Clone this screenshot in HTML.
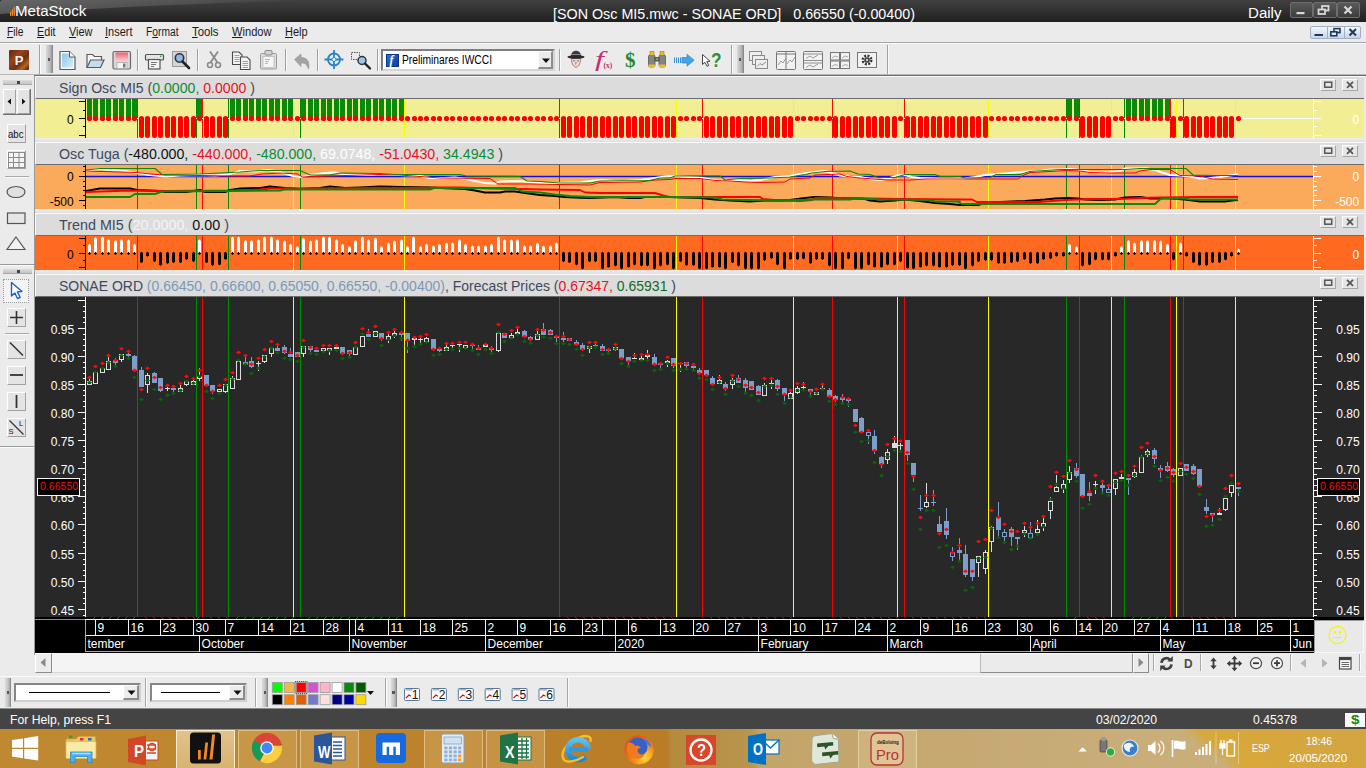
<!DOCTYPE html>
<html lang="en"><head><meta charset="utf-8"><title>MetaStock - SON Osc MI5.mwc - SONAE ORD</title>
<style>
html,body{margin:0;padding:0;}
body{width:1366px;height:768px;overflow:hidden;background:#ebebeb;position:relative;font-family:"Liberation Sans",sans-serif;}
.b{position:absolute;display:block;box-sizing:border-box;}
.t{position:absolute;white-space:pre;transform-origin:0 50%;}
svg{overflow:visible;}
</style></head><body>
<div class="b" style="left:0px;top:0px;width:1366px;height:22px;background:linear-gradient(180deg,#404040 0%,#343434 40%,#272727 75%,#202020 100%);"></div>
<svg class="b" style="left:0px;top:0px" width="320" height="22" viewBox="0 0 320 22" >
<defs><linearGradient id="ggl" x1="0" y1="0" x2="1" y2="0"><stop offset="0" stop-color="#fff" stop-opacity=".2"/><stop offset=".6" stop-color="#fff" stop-opacity=".11"/><stop offset="1" stop-color="#fff" stop-opacity="0"/></linearGradient></defs>
<path d="M0 0 H310 C 200 3.500, 90 8.500, 0 14 Z" fill="url(#ggl)"/>
<path d="M0 0 h2.500 a2.500 2.500 0 0 0 -2.500 2.500 z" fill="#222"/>
</svg>
<svg class="b" style="left:9px;top:8px" width="7" height="9" viewBox="0 0 7 9" >
<rect x="1.100" y="4.200" width="1.100" height="3.600" fill="#f4a424"/><rect x="2.700" y="1.500" width="1.300" height="6.300" fill="#f08820"/><rect x="4.500" y="-1" width="1.500" height="8.800" fill="#f07420"/>
</svg>
<span class="t" id="t1" style="left:15.40px;top:2.86px;font-size:15.40px;line-height:15.40px;color:#fff;transform:scaleX(0.9805);">MetaStock</span>
<span class="t" id="t2" style="left:553.00px;top:5.78px;font-size:15.50px;line-height:15.50px;color:#fff;transform:scaleX(0.9236);">[SON Osc MI5.mwc - SONAE ORD]   0.66550 (-0.00400)</span>
<span class="t" id="t3" style="left:1247.50px;top:5.48px;font-size:15.50px;line-height:15.50px;color:#fff;transform:scaleX(0.9723);">Daily</span>
<div class="b" style="left:1289.5px;top:2px;width:23.5px;height:15.5px;background:linear-gradient(180deg,#5a5a5a,#3c3c3c);border:1px solid #6e6e6e;border-radius:2px;"></div>
<div class="b" style="left:1313px;top:2px;width:23.5px;height:15.5px;background:linear-gradient(180deg,#5a5a5a,#3c3c3c);border:1px solid #6e6e6e;border-radius:2px;"></div>
<div class="b" style="left:1336.5px;top:2px;width:23.5px;height:15.5px;background:linear-gradient(180deg,#5a5a5a,#3c3c3c);border:1px solid #6e6e6e;border-radius:2px;"></div>
<svg class="b" style="left:1289px;top:2px" width="72" height="16" viewBox="0 0 72 16" >
<rect x="7.5" y="10" width="8" height="2.2" fill="#d8d8d8"/>
<g fill="none" stroke="#d8d8d8" stroke-width="1.8"><rect x="33" y="4" width="6.5" height="4.5"/><rect x="29.5" y="7.5" width="6.5" height="4.5" fill="#444"/></g>
<path d="M55.5 4.5 L62.5 11.5 M62.5 4.5 L55.5 11.5" stroke="#d8d8d8" stroke-width="2.2" fill="none"/>
</svg>
<div class="b" style="left:0px;top:22px;width:1366px;height:21px;background:#ebebeb;border-bottom:1px solid #a6a6a6;"></div>
<span class="t" id="t4" style="left:7.00px;top:26.02px;font-size:12.50px;line-height:12.50px;color:#1a1a1a;transform:scaleX(0.8186);"><u>F</u>ile</span>
<span class="t" id="t5" style="left:37.00px;top:26.02px;font-size:12.50px;line-height:12.50px;color:#1a1a1a;transform:scaleX(0.8586);"><u>E</u>dit</span>
<span class="t" id="t6" style="left:69.00px;top:26.02px;font-size:12.50px;line-height:12.50px;color:#1a1a1a;transform:scaleX(0.8739);"><u>V</u>iew</span>
<span class="t" id="t7" style="left:105.00px;top:26.02px;font-size:12.50px;line-height:12.50px;color:#1a1a1a;transform:scaleX(0.8791);"><u>I</u>nsert</span>
<span class="t" id="t8" style="left:146.00px;top:26.02px;font-size:12.50px;line-height:12.50px;color:#1a1a1a;transform:scaleX(0.8208);">F<u>o</u>rmat</span>
<span class="t" id="t9" style="left:192.00px;top:26.02px;font-size:12.50px;line-height:12.50px;color:#1a1a1a;transform:scaleX(0.9079);"><u>T</u>ools</span>
<span class="t" id="t10" style="left:232.00px;top:26.02px;font-size:12.50px;line-height:12.50px;color:#1a1a1a;transform:scaleX(0.8880);"><u>W</u>indow</span>
<span class="t" id="t11" style="left:285.00px;top:26.02px;font-size:12.50px;line-height:12.50px;color:#1a1a1a;transform:scaleX(0.8748);"><u>H</u>elp</span>
<div class="b" style="left:1310px;top:26px;width:51px;height:12.5px;background:linear-gradient(180deg,#f4f7fa,#c9d6e4);border:1px solid #9fb0c4;border-radius:2px;"></div>
<div class="b" style="left:1327px;top:27px;width:1px;height:10.5px;background:#9fb0c4;"></div>
<div class="b" style="left:1344px;top:27px;width:1px;height:10.5px;background:#9fb0c4;"></div>
<svg class="b" style="left:1310px;top:26px" width="51" height="13" viewBox="0 0 51 13" >
<rect x="4.5" y="8" width="8.5" height="2" fill="#1e3a5f"/>
<g fill="none" stroke="#1e3a5f" stroke-width="1.6"><rect x="24" y="2.6" width="6" height="4"/><rect x="20.8" y="5.8" width="6" height="4" fill="#dde6f0"/></g>
<path d="M39.5 3 L46 9.5 M46 3 L39.5 9.5" stroke="#1e3a5f" stroke-width="2" fill="none"/>
</svg>
<div class="b" style="left:0px;top:43px;width:1366px;height:32px;background:#ebebeb;border-top:1px solid #fafafa;border-bottom:1px solid #b8b8b8;"></div>
<div class="b" style="left:137px;top:49px;width:1px;height:21.5px;background:#a0a0a0;"></div>
<div class="b" style="left:138px;top:49px;width:1px;height:21.5px;background:#fbfbfb;"></div>
<div class="b" style="left:197px;top:49px;width:1px;height:21.5px;background:#a0a0a0;"></div>
<div class="b" style="left:198px;top:49px;width:1px;height:21.5px;background:#fbfbfb;"></div>
<div class="b" style="left:285px;top:49px;width:1px;height:21.5px;background:#a0a0a0;"></div>
<div class="b" style="left:286px;top:49px;width:1px;height:21.5px;background:#fbfbfb;"></div>
<div class="b" style="left:317px;top:49px;width:1px;height:21.5px;background:#a0a0a0;"></div>
<div class="b" style="left:318px;top:49px;width:1px;height:21.5px;background:#fbfbfb;"></div>
<div class="b" style="left:377px;top:49px;width:1px;height:21.5px;background:#a0a0a0;"></div>
<div class="b" style="left:378px;top:49px;width:1px;height:21.5px;background:#fbfbfb;"></div>
<div class="b" style="left:559px;top:49px;width:1px;height:21.5px;background:#a0a0a0;"></div>
<div class="b" style="left:560px;top:49px;width:1px;height:21.5px;background:#fbfbfb;"></div>
<div class="b" style="left:39px;top:44.5px;width:1px;height:29px;background:#a0a0a0;"></div>
<div class="b" style="left:40px;top:44.5px;width:1px;height:29px;background:#fbfbfb;"></div>
<div class="b" style="left:731px;top:44.5px;width:1px;height:29px;background:#a0a0a0;"></div>
<div class="b" style="left:732px;top:44.5px;width:1px;height:29px;background:#fbfbfb;"></div>
<div class="b" style="left:887px;top:44.5px;width:1px;height:29px;background:#a0a0a0;"></div>
<div class="b" style="left:888px;top:44.5px;width:1px;height:29px;background:#fbfbfb;"></div>
<div class="b" style="left:46px;top:45px;width:6.5px;height:28px;background:linear-gradient(90deg,#d9d9d9,#bdbdbd 60%,#9a9a9a);border-right:1px solid #8a8a8a;"></div>
<div class="b" style="left:47.5px;top:58px;width:2.5px;height:3px;background:#555;"></div>
<div class="b" style="left:737px;top:45px;width:6.5px;height:28px;background:linear-gradient(90deg,#d9d9d9,#bdbdbd 60%,#9a9a9a);border-right:1px solid #8a8a8a;"></div>
<div class="b" style="left:738.5px;top:58px;width:2.5px;height:3px;background:#555;"></div>
<div class="b" style="left:9px;top:50px;width:20px;height:20px;background:linear-gradient(135deg,#5a2a14 0%,#9a4418 35%,#6a3014 60%,#b8641c 80%,#3a1c0e 100%);border-radius:1px;"></div>
<span class="t" id="t12" style="left:14.80px;top:54.00px;font-size:13.00px;line-height:13.00px;color:#f4f4f4;font-weight:bold;">P</span>
<svg class="b" style="left:0px;top:43px" width="900" height="32" viewBox="0 0 900 32" >
<defs><linearGradient id="gdoc" x1="0" y1="0" x2="1" y2="1"><stop offset="0" stop-color="#8cc8e8"/><stop offset="1" stop-color="#d4ecf8"/></linearGradient><linearGradient id="gsv" x1="0" y1="0" x2="0" y2="1"><stop offset="0" stop-color="#f0606c"/><stop offset="1" stop-color="#fcd0d4"/></linearGradient></defs>
<path d="M60 8.500 h9.500 l5.500 5.500 v12.500 h-15 z" fill="#fafafa" stroke="#5a5a5a" stroke-width="1.200"/><path d="M62 10.500 h7 l4 4 v10 h-11 z" fill="url(#gdoc)"/><path d="M69.500 8.500 v5.500 h5.500" fill="#fff" stroke="#5a5a5a" stroke-width="1"/>
<path d="M87 24.500 v-13 h5.500 l2 2 h7 v3.500" fill="#f6f6f6" stroke="#5a5a5a" stroke-width="1.200"/><path d="M87 24.500 l3.500 -7.500 h13.500 l-3.500 7.500 z" fill="#c4dcf0" stroke="#5a5a5a" stroke-width="1.200"/>
<rect x="113" y="8.500" width="17.500" height="17.500" rx="1.500" fill="#d8d8d8" stroke="#6a6a6a" stroke-width="1.200"/><rect x="115.500" y="9.500" width="12.500" height="8.500" fill="url(#gsv)"/><rect x="117" y="19.5" width="10" height="6" fill="#f4f4f4" stroke="#999" stroke-width=".6"/><rect x="123" y="20.5" width="2.5" height="4" fill="#777"/>
<rect x="145.500" y="11.500" width="18" height="5.500" rx="1" fill="#e4e4e4" stroke="#555" stroke-width="1.200"/><rect x="148.500" y="16.500" width="11.500" height="9.500" fill="#eef6ee" stroke="#555" stroke-width="1.200"/><path d="M151 19.500h6M151 21.500h5M151 23.500h3" stroke="#556" stroke-width=".8"/><rect x="160" y="12.500" width="1.500" height="1.500" fill="#4a4"/>
<rect x="172.500" y="8.500" width="14" height="15" fill="#d4d4d4" stroke="#9a9a9a"/><circle cx="179.5" cy="15" r="4.2" fill="#8fb7e8" stroke="#333" stroke-width="1.6"/><path d="M182.5 18.5 l6.500 6.500" stroke="#222" stroke-width="2.6" stroke-linecap="round"/>
<path d="M210 8.5 l7.5 11 M218 8.5 l-7.5 11" stroke="#8a8a8a" stroke-width="1.8" fill="none"/><circle cx="210" cy="22" r="2.5" fill="none" stroke="#8a8a8a" stroke-width="1.5"/><circle cx="218" cy="22" r="2.500" fill="none" stroke="#8a8a8a" stroke-width="1.5"/>
<path d="M232.500 9 h6.500 l3 3 v9.500 h-9.500 z" fill="#f4f4f4" stroke="#4a4a4a" stroke-width="1.100"/><path d="M234.500 12.500h5M234.500 14.500h5M234.500 16.500h5M234.500 18.500h5" stroke="#888" stroke-width=".8"/><path d="M240.500 14 h6.500 l3 3 v9.500 h-9.500 z" fill="#f4f4f4" stroke="#4a4a4a" stroke-width="1.100"/><path d="M242.500 18.500h5.500M242.500 20.500h5.500M242.500 22.500h5.500M242.500 24.500h5.500" stroke="#888" stroke-width=".8"/>
<rect x="260.500" y="10.500" width="16" height="15.500" rx="1" fill="#dcdcdc" stroke="#9a9a9a"/><rect x="265" y="7.500" width="7" height="4.500" rx="1" fill="#d4d4d4" stroke="#8a8a8a"/><rect x="263" y="13.500" width="11" height="11" fill="#f6f6f6" stroke="#b4b4b4" stroke-width=".7"/><path d="M265 16.500h5M265 18.500h4M265 20.500h3" stroke="#aaa" stroke-width=".8"/>
<path d="M294.500 16.500 l6.500 -5.500 v3.500 c6.500 0 9 4.500 7.500 11.500 c-1.500 -5 -3.800 -6 -7.500 -6 v3.500 z" fill="#a4a4a4" stroke="#909090" stroke-width=".6"/>
<circle cx="334" cy="16.500" r="6" fill="#eaf3fb" stroke="#2b82c9" stroke-width="1.800"/><path d="M334 7 v19 M324.500 16.500 h19" stroke="#2b82c9" stroke-width="1.800"/><circle cx="334" cy="16.500" r="2" fill="#fff" stroke="#2b82c9"/>
<rect x="351.500" y="9.500" width="8" height="7" fill="none" stroke="#555" stroke-dasharray="1.500 1"/><circle cx="362" cy="17.500" r="4" fill="#9cc4ef" stroke="#333" stroke-width="1.500"/><path d="M365 20.500 l5 5" stroke="#222" stroke-width="2.400" stroke-linecap="round"/>
<path d="M571.500 15.500 c0 11.500 9 11.500 9 0 z" fill="#f6d8c8" stroke="#7a5a50" stroke-width=".7"/><path d="M570.800 13.800 c0 -8 10.400 -8 10.400 0 z" fill="#3a3a3a"/><path d="M570.800 11.500 h10.400" stroke="#888" stroke-width="1"/><ellipse cx="576" cy="14" rx="8.600" ry="1.700" fill="#2a2a2a"/><circle cx="574" cy="17.800" r=".8" fill="#3a6ac0"/><circle cx="578" cy="17.800" r=".8" fill="#3a6ac0"/><path d="M576 18.500 v2.500 h-1" stroke="#7a5a50" stroke-width=".6" fill="none"/>
<rect x="648.500" y="12" width="6.500" height="12" rx="1.500" fill="#848484" stroke="#4a4a4a" stroke-width=".7"/><rect x="659" y="12" width="6.500" height="12" rx="1.500" fill="#848484" stroke="#4a4a4a" stroke-width=".7"/><rect x="650" y="8.500" width="4" height="4" fill="#e8c020" stroke="#8a7010" stroke-width=".5"/><rect x="660" y="8.500" width="4" height="4" fill="#e8c020" stroke="#8a7010" stroke-width=".5"/><rect x="654.500" y="14" width="5" height="4.500" fill="#5a5a5a"/><rect x="656" y="15.500" width="2" height="1.200" fill="#e8c020"/><rect x="648.500" y="21.500" width="6.500" height="2.500" fill="#e8c020"/><rect x="659" y="21.500" width="6.500" height="2.500" fill="#e8c020"/>
<path d="M674 14.500 h1 v5.500 h-1z M676 14.500 h1 v5.500 h-1z M678 14.500 h1 v5.500 h-1z M680 14.500 h1.200 v5.500 h-1.200z" fill="#3b8fd6"/><path d="M682 14.500 h5 v-3.300 l7.200 6 l-7.200 6 v-3.200 h-5 z" fill="#45a4e8" stroke="#2a80c4" stroke-width=".6"/>
<path d="M702.500 11.500 l0 10 l2.500 -2.200 l2 4 l1.800 -.8 l-2 -4 l3.200 -.3 z" fill="#fff" stroke="#333" stroke-width=".9"/>
<g fill="#eee" stroke="#8a8a8a"><rect x="749.500" y="8.500" width="12" height="9"/><rect x="752.500" y="12.500" width="12" height="9"/><rect x="755.500" y="16.500" width="12" height="9"/></g><path d="M757 23.500 l3 -3 l2 1.500 l4 -3" stroke="#777" fill="none" stroke-width=".8"/>
<rect x="776.500" y="8.500" width="19" height="18" rx="1" fill="#f2f2f2" stroke="#777"/><path d="M786 8.500 v18 M776.500 11 h19" stroke="#777"/><path d="M778 22 l3 -4 l2 2 l3 -5 M787 21 l3 -4 l2 2 l3 -5" stroke="#888" fill="none" stroke-width=".8"/>
<rect x="803.500" y="8.500" width="19" height="18" rx="1" fill="#f2f2f2" stroke="#777"/><path d="M803.500 17.500 h19 M803.500 11 h19 M803.500 20 h19" stroke="#777" stroke-width=".8"/><path d="M806 15.500 l4 -2.500 l3 2 l5 -3 M806 24.500 l4 -2.500 l3 2 l5 -3" stroke="#888" fill="none" stroke-width=".8"/>
<g fill="#f2f2f2" stroke="#777"><rect x="830.500" y="9.500" width="9" height="7.500"/><rect x="840.500" y="9.500" width="9" height="7.500"/><rect x="830.500" y="18" width="9" height="7.500"/><rect x="840.500" y="18" width="9" height="7.500"/></g><path d="M832 15 l3 -2 l3 1 M842 15 l3 -2 l3 1 M832 23.500 l3 -2 l3 1 M842 23.500 l3 -2 l3 1" stroke="#888" fill="none" stroke-width=".7"/>
<rect x="857.500" y="9.500" width="19" height="15" fill="#f2f2f2" stroke="#777"/><circle cx="867" cy="17" r="4.200" fill="none" stroke="#333" stroke-width="2.600" stroke-dasharray="1.900 1.400"/><circle cx="867" cy="17" r="2.800" fill="#444"/><circle cx="867" cy="17" r="1.100" fill="#f2f2f2"/>
</svg>
<span class="t" id="t13" style="left:594.50px;top:48.57px;font-size:20.00px;line-height:20.00px;color:#c8306e;font-family:'Liberation Serif', serif;transform:scaleX(1.6180);font-style:italic;">f</span>
<span class="t" id="t14" style="left:603.50px;top:61.95px;font-size:7.50px;line-height:7.50px;color:#c8286c;font-weight:bold;font-family:'Liberation Serif', serif;">(x)</span>
<span class="t" id="t15" style="left:624.50px;top:50.07px;font-size:20.00px;line-height:20.00px;color:#1f8a2a;font-weight:bold;font-family:'Liberation Serif', serif;transform:scaleX(1.0500);">$</span>
<span class="t" id="t16" style="left:710.60px;top:49.95px;font-size:20.50px;line-height:20.50px;color:#2f8f2f;font-weight:bold;transform:scaleX(0.8379);">?</span>
<div class="b" style="left:381px;top:49px;width:174px;height:21.5px;background:#fff;border:2px solid #7e7e7e;border-right-color:#d4d4d4;border-bottom-color:#d4d4d4;"></div>
<div class="b" style="left:385.5px;top:53.5px;width:13.5px;height:13.5px;background:linear-gradient(135deg,#2a70e0,#0c3ca0);border:1px solid #0c3488;"></div>
<span class="t" id="t17" style="left:389.50px;top:54.34px;font-size:12.00px;line-height:12.00px;color:#fff;font-weight:bold;font-family:'Liberation Serif', serif;font-style:italic;">f</span>
<span class="t" id="t18" style="left:402.00px;top:53.72px;font-size:12.50px;line-height:12.50px;color:#000;transform:scaleX(0.8200);">Preliminares IWCCI</span>
<div class="b" style="left:537.5px;top:51px;width:15.5px;height:17.5px;background:#ececec;border:1px solid #fdfdfd;border-right:2px solid #8c8c8c;border-bottom:2px solid #8c8c8c;"></div>
<svg class="b" style="left:538px;top:51px" width="16" height="18" viewBox="0 0 16 18" >
<path d="M4 7.500 h8 l-4 4.500 z" fill="#111"/>
</svg>
<div class="b" style="left:0px;top:75px;width:34.5px;height:580px;background:#ebebeb;border-right:1px solid #9a9a9a;"></div>
<div class="b" style="left:0px;top:655px;width:34.5px;height:20px;background:#ebebeb;"></div>
<div class="b" style="left:3px;top:80px;width:29px;height:5px;background:linear-gradient(180deg,#dcdcdc,#c4c4c4);border-bottom:1px solid #a8a8a8;"></div>
<div class="b" style="left:17px;top:81px;width:2.5px;height:2.5px;background:#444;"></div>
<div class="b" style="left:2.5px;top:88.5px;width:13.5px;height:25.5px;background:#e4e4e4;border:1px solid #fff;border-right-color:#a0a0a0;border-bottom-color:#a0a0a0;"></div>
<div class="b" style="left:16.5px;top:88.5px;width:13.5px;height:25.5px;background:#e4e4e4;border:1px solid #fff;border-right-color:#a0a0a0;border-bottom-color:#a0a0a0;"></div>
<div class="b" style="left:2.5px;top:113.5px;width:28px;height:1px;background:#707070;"></div>
<div class="b" style="left:30px;top:88.5px;width:1px;height:25.5px;background:#707070;"></div>
<div class="b" style="left:6.5px;top:124px;width:19.5px;height:19px;background:#e4e4e4;border:1px solid #fff;border-right-color:#a0a0a0;border-bottom-color:#a0a0a0;"></div>
<div class="b" style="left:6.5px;top:150px;width:19.5px;height:19px;background:#e4e4e4;border:1px solid #fff;border-right-color:#a0a0a0;border-bottom-color:#a0a0a0;"></div>
<div class="b" style="left:5px;top:175.5px;width:24px;height:1px;background:#a8a8a8;"></div>
<div class="b" style="left:5px;top:176.5px;width:24px;height:1px;background:#fbfbfb;"></div>
<div class="b" style="left:0px;top:263.5px;width:34px;height:1px;background:#9a9a9a;"></div>
<div class="b" style="left:0px;top:264.5px;width:34px;height:1px;background:#fafafa;"></div>
<div class="b" style="left:3px;top:269px;width:29px;height:5px;background:linear-gradient(180deg,#dcdcdc,#c4c4c4);border-bottom:1px solid #a8a8a8;"></div>
<div class="b" style="left:17px;top:270px;width:2.5px;height:2.5px;background:#444;"></div>
<div class="b" style="left:3px;top:278.5px;width:26px;height:24px;background:#f4f4f4;border:1px dotted #9a9a9a;"></div>
<div class="b" style="left:6.5px;top:307.5px;width:19.5px;height:19px;background:#e4e4e4;border:1px solid #fff;border-right-color:#a0a0a0;border-bottom-color:#a0a0a0;"></div>
<div class="b" style="left:5px;top:332.5px;width:24px;height:1px;background:#a8a8a8;"></div>
<div class="b" style="left:5px;top:333.5px;width:24px;height:1px;background:#fbfbfb;"></div>
<div class="b" style="left:6.5px;top:339.5px;width:19.5px;height:19px;background:#e4e4e4;border:1px solid #fff;border-right-color:#a0a0a0;border-bottom-color:#a0a0a0;"></div>
<div class="b" style="left:6.5px;top:365.5px;width:19.5px;height:19px;background:#e4e4e4;border:1px solid #fff;border-right-color:#a0a0a0;border-bottom-color:#a0a0a0;"></div>
<div class="b" style="left:6.5px;top:391.5px;width:19.5px;height:19px;background:#e4e4e4;border:1px solid #fff;border-right-color:#a0a0a0;border-bottom-color:#a0a0a0;"></div>
<div class="b" style="left:6.5px;top:417.5px;width:19.5px;height:19px;background:#e4e4e4;border:1px solid #fff;border-right-color:#a0a0a0;border-bottom-color:#a0a0a0;"></div>
<div class="b" style="left:0px;top:446px;width:34px;height:1px;background:#9a9a9a;"></div>
<div class="b" style="left:0px;top:447px;width:34px;height:1px;background:#fafafa;"></div>
<span class="t" id="t19" style="left:8.30px;top:128.99px;font-size:11.00px;line-height:11.00px;color:#111;transform:scaleX(0.8732);">abc</span>
<span class="t" id="t20" style="left:8.50px;top:427.65px;font-size:7.50px;line-height:7.50px;color:#111;">S</span>
<span class="t" id="t21" style="left:19.00px;top:420.15px;font-size:7.50px;line-height:7.50px;color:#111;">L</span>
<svg class="b" style="left:0px;top:75px" width="35" height="380" viewBox="0 0 35 380" >
<path d="M11 23.500 l-3.500 3 l3.500 3 z M22 23.500 l3.500 3 l-3.500 3 z" fill="#111"/>
<g stroke="#8a8a8a" stroke-width="1" fill="none"><rect x="8.500" y="77.500" width="16" height="15" fill="#f4f4f4"/><path d="M13.500 77.500 v15 M19 77.500 v15 M8.500 82.500 h16 M8.500 87.500 h16"/></g>
<ellipse cx="16" cy="117" rx="9" ry="5.500" fill="#e0e0e0" stroke="#555" stroke-width="1.200"/>
<rect x="7.500" y="138" width="17.500" height="10.500" fill="#e6e6e6" stroke="#555" stroke-width="1.200"/>
<path d="M16 162 l9 12.500 h-18 z" fill="#f2f2f2" stroke="#555" stroke-width="1.200"/>
<path d="M11.500 207.500 l0 13.500 l3.300 -3 l2.700 5.500 l2.600 -1.200 l-2.700 -5.400 l4.600 -.4 z" fill="#fff" stroke="#1c5fc4" stroke-width="1.400" stroke-linejoin="round"/>
<path d="M16.500 236 v13 M10 242.500 h13" stroke="#333" stroke-width="1.600"/>
<path d="M10 267.500 l13 13" stroke="#333" stroke-width="1.500"/>
<path d="M10 300 h13" stroke="#333" stroke-width="1.800"/>
<path d="M16.500 320 v13" stroke="#333" stroke-width="1.800"/>
<path d="M9.500 345.500 l14 14" stroke="#333" stroke-width="1.300"/>
</svg>
<div class="b" style="left:35px;top:75px;width:1331px;height:580px;background:#e6e6e6;"></div>
<div class="b" style="left:34px;top:75px;width:1332px;height:1px;background:#6c6c6c;"></div>
<div class="b" style="left:35px;top:138px;width:1329px;height:4px;background:linear-gradient(180deg,#eeeeee,#dfdfdf);"></div>
<div class="b" style="left:35px;top:209px;width:1329px;height:4px;background:linear-gradient(180deg,#eeeeee,#dfdfdf);"></div>
<div class="b" style="left:35px;top:270px;width:1329px;height:4px;background:linear-gradient(180deg,#eeeeee,#dfdfdf);"></div>
<div class="b" style="left:1364px;top:76px;width:2px;height:580px;background:#ebebeb;"></div>
<div class="b" style="left:35px;top:76px;width:1329px;height:23px;background:#dcdcdc;border-top:1px solid #fafafa;border-left:1px solid #fafafa;border-bottom:1px solid #6c6c6c;"></div>
<div class="b" style="left:1319.5px;top:79px;width:16.5px;height:12px;background:#e6e6e6;border:1px solid #fdfdfd;border-right-color:#a6a6a6;border-bottom-color:#a6a6a6;"></div>
<div class="b" style="left:1341.5px;top:79px;width:16.5px;height:12px;background:#e6e6e6;border:1px solid #fdfdfd;border-right-color:#a6a6a6;border-bottom-color:#a6a6a6;"></div>
<svg class="b" style="left:1319.5px;top:79px" width="40" height="12" viewBox="0 0 40 12" >
<rect x="4.7" y="3.2" width="7" height="5" fill="none" stroke="#555" stroke-width="1.5"/>
<path d="M27 2.800 l6 6 M33 2.800 l-6 6" stroke="#555" stroke-width="1.700"/>
</svg>
<div class="b" style="left:35px;top:142px;width:1329px;height:23px;background:#dcdcdc;border-top:1px solid #fafafa;border-left:1px solid #fafafa;border-bottom:1px solid #6c6c6c;"></div>
<div class="b" style="left:1319.5px;top:145px;width:16.5px;height:12px;background:#e6e6e6;border:1px solid #fdfdfd;border-right-color:#a6a6a6;border-bottom-color:#a6a6a6;"></div>
<div class="b" style="left:1341.5px;top:145px;width:16.5px;height:12px;background:#e6e6e6;border:1px solid #fdfdfd;border-right-color:#a6a6a6;border-bottom-color:#a6a6a6;"></div>
<svg class="b" style="left:1319.5px;top:145px" width="40" height="12" viewBox="0 0 40 12" >
<rect x="4.7" y="3.2" width="7" height="5" fill="none" stroke="#555" stroke-width="1.5"/>
<path d="M27 2.800 l6 6 M33 2.800 l-6 6" stroke="#555" stroke-width="1.700"/>
</svg>
<div class="b" style="left:35px;top:213px;width:1329px;height:23px;background:#dcdcdc;border-top:1px solid #fafafa;border-left:1px solid #fafafa;border-bottom:1px solid #6c6c6c;"></div>
<div class="b" style="left:1319.5px;top:216px;width:16.5px;height:12px;background:#e6e6e6;border:1px solid #fdfdfd;border-right-color:#a6a6a6;border-bottom-color:#a6a6a6;"></div>
<div class="b" style="left:1341.5px;top:216px;width:16.5px;height:12px;background:#e6e6e6;border:1px solid #fdfdfd;border-right-color:#a6a6a6;border-bottom-color:#a6a6a6;"></div>
<svg class="b" style="left:1319.5px;top:216px" width="40" height="12" viewBox="0 0 40 12" >
<rect x="4.7" y="3.2" width="7" height="5" fill="none" stroke="#555" stroke-width="1.5"/>
<path d="M27 2.800 l6 6 M33 2.800 l-6 6" stroke="#555" stroke-width="1.700"/>
</svg>
<div class="b" style="left:35px;top:274px;width:1329px;height:23px;background:#dcdcdc;border-top:1px solid #fafafa;border-left:1px solid #fafafa;border-bottom:1px solid #6c6c6c;"></div>
<div class="b" style="left:1319.5px;top:277px;width:16.5px;height:12px;background:#e6e6e6;border:1px solid #fdfdfd;border-right-color:#a6a6a6;border-bottom-color:#a6a6a6;"></div>
<div class="b" style="left:1341.5px;top:277px;width:16.5px;height:12px;background:#e6e6e6;border:1px solid #fdfdfd;border-right-color:#a6a6a6;border-bottom-color:#a6a6a6;"></div>
<svg class="b" style="left:1319.5px;top:277px" width="40" height="12" viewBox="0 0 40 12" >
<rect x="4.7" y="3.2" width="7" height="5" fill="none" stroke="#555" stroke-width="1.5"/>
<path d="M27 2.800 l6 6 M33 2.800 l-6 6" stroke="#555" stroke-width="1.700"/>
</svg>
<div class="b" style="left:35px;top:99px;width:1329px;height:39px;background:#f1ee94;"></div>
<div class="b" style="left:35px;top:165px;width:1329px;height:44px;background:#fbaa5c;"></div>
<div class="b" style="left:35px;top:236px;width:1329px;height:34px;background:#ff6a20;"></div>
<div class="b" style="left:35px;top:297px;width:1329px;height:320px;background:#282828;"></div>
<span class="t" id="t22" style="left:59.00px;top:79.75px;font-size:15.30px;line-height:15.30px;color:#3c4a5e;transform:scaleX(0.9219);">Sign Osc MI5 (<span style="color:#0a8c32">0.0000, </span><span style="color:#e8121c">0.0000</span> )</span>
<span class="t" id="t23" style="left:59.00px;top:145.65px;font-size:15.30px;line-height:15.30px;color:#3c4a5e;transform:scaleX(0.9273);">Osc Tuga (<span style="color:#111">-480.000, </span><span style="color:#e8121c">-440.000, </span><span style="color:#0a8c32">-480.000, </span><span style="color:#fff">69.0748, </span><span style="color:#e8121c">-51.0430, </span><span style="color:#0a8c32">34.4943</span> )</span>
<span class="t" id="t24" style="left:59.00px;top:216.75px;font-size:15.30px;line-height:15.30px;color:#3c4a5e;transform:scaleX(0.9370);">Trend MI5 (<span style="color:#f4f4f4">20.0000, </span><span style="color:#111">0.00</span> )</span>
<span class="t" id="t25" style="left:59.00px;top:278.05px;font-size:15.30px;line-height:15.30px;color:#3c4a5e;transform:scaleX(0.9149);">SONAE ORD <span style="color:#7d97b8">(0.66450, 0.66600, 0.65050, 0.66550, -0.00400)</span>, Forecast Prices (<span style="color:#e8121c">0.67347, </span><span style="color:#0f6a1e">0.65931</span> )</span>
<svg class="b" style="left:0px;top:0px" width="1366" height="660" viewBox="0 0 1366 660" shape-rendering="crispEdges">
<line x1="137.5" y1="99.0" x2="137.5" y2="138.0" stroke="#fa0808" stroke-width="1"/>
<line x1="137.5" y1="165.0" x2="137.5" y2="209.0" stroke="#fa0808" stroke-width="1"/>
<line x1="137.5" y1="236.0" x2="137.5" y2="270.0" stroke="#fa0808" stroke-width="1"/>
<line x1="137.5" y1="297.0" x2="137.5" y2="617.0" stroke="#f40404" stroke-width="1"/>
<line x1="196.5" y1="99.0" x2="196.5" y2="138.0" stroke="#008a00" stroke-width="1"/>
<line x1="196.5" y1="165.0" x2="196.5" y2="209.0" stroke="#008a00" stroke-width="1"/>
<line x1="196.5" y1="236.0" x2="196.5" y2="270.0" stroke="#008a00" stroke-width="1"/>
<line x1="196.5" y1="297.0" x2="196.5" y2="617.0" stroke="#008c00" stroke-width="1"/>
<line x1="202.5" y1="99.0" x2="202.5" y2="138.0" stroke="#fa0808" stroke-width="1"/>
<line x1="202.5" y1="165.0" x2="202.5" y2="209.0" stroke="#fa0808" stroke-width="1"/>
<line x1="202.5" y1="236.0" x2="202.5" y2="270.0" stroke="#fa0808" stroke-width="1"/>
<line x1="202.5" y1="297.0" x2="202.5" y2="617.0" stroke="#f40404" stroke-width="1"/>
<line x1="228.5" y1="99.0" x2="228.5" y2="138.0" stroke="#008a00" stroke-width="1"/>
<line x1="228.5" y1="165.0" x2="228.5" y2="209.0" stroke="#008a00" stroke-width="1"/>
<line x1="228.5" y1="236.0" x2="228.5" y2="270.0" stroke="#008a00" stroke-width="1"/>
<line x1="228.5" y1="297.0" x2="228.5" y2="617.0" stroke="#008c00" stroke-width="1"/>
<line x1="293.5" y1="99.0" x2="293.5" y2="138.0" stroke="#fafa00" stroke-width="1"/>
<line x1="293.5" y1="165.0" x2="293.5" y2="209.0" stroke="#fafa00" stroke-width="1"/>
<line x1="293.5" y1="236.0" x2="293.5" y2="270.0" stroke="#fafa00" stroke-width="1"/>
<line x1="293.5" y1="297.0" x2="293.5" y2="617.0" stroke="#fafa00" stroke-width="1"/>
<line x1="300.5" y1="99.0" x2="300.5" y2="138.0" stroke="#008a00" stroke-width="1"/>
<line x1="300.5" y1="165.0" x2="300.5" y2="209.0" stroke="#008a00" stroke-width="1"/>
<line x1="300.5" y1="236.0" x2="300.5" y2="270.0" stroke="#008a00" stroke-width="1"/>
<line x1="300.5" y1="297.0" x2="300.5" y2="617.0" stroke="#008c00" stroke-width="1"/>
<line x1="404.5" y1="99.0" x2="404.5" y2="138.0" stroke="#fafa00" stroke-width="1"/>
<line x1="404.5" y1="165.0" x2="404.5" y2="209.0" stroke="#fafa00" stroke-width="1"/>
<line x1="404.5" y1="236.0" x2="404.5" y2="270.0" stroke="#fafa00" stroke-width="1"/>
<line x1="404.5" y1="297.0" x2="404.5" y2="617.0" stroke="#fafa00" stroke-width="1"/>
<line x1="559.5" y1="99.0" x2="559.5" y2="138.0" stroke="#fa0808" stroke-width="1"/>
<line x1="559.5" y1="165.0" x2="559.5" y2="209.0" stroke="#fa0808" stroke-width="1"/>
<line x1="559.5" y1="236.0" x2="559.5" y2="270.0" stroke="#fa0808" stroke-width="1"/>
<line x1="559.5" y1="297.0" x2="559.5" y2="617.0" stroke="#f40404" stroke-width="1"/>
<line x1="676.5" y1="99.0" x2="676.5" y2="138.0" stroke="#fafa00" stroke-width="1"/>
<line x1="676.5" y1="165.0" x2="676.5" y2="209.0" stroke="#fafa00" stroke-width="1"/>
<line x1="676.5" y1="236.0" x2="676.5" y2="270.0" stroke="#fafa00" stroke-width="1"/>
<line x1="676.5" y1="297.0" x2="676.5" y2="617.0" stroke="#fafa00" stroke-width="1"/>
<line x1="702.5" y1="99.0" x2="702.5" y2="138.0" stroke="#fa0808" stroke-width="1"/>
<line x1="702.5" y1="165.0" x2="702.5" y2="209.0" stroke="#fa0808" stroke-width="1"/>
<line x1="702.5" y1="236.0" x2="702.5" y2="270.0" stroke="#fa0808" stroke-width="1"/>
<line x1="702.5" y1="297.0" x2="702.5" y2="617.0" stroke="#f40404" stroke-width="1"/>
<line x1="793.5" y1="99.0" x2="793.5" y2="138.0" stroke="#fafa00" stroke-width="1"/>
<line x1="793.5" y1="165.0" x2="793.5" y2="209.0" stroke="#fafa00" stroke-width="1"/>
<line x1="793.5" y1="236.0" x2="793.5" y2="270.0" stroke="#fafa00" stroke-width="1"/>
<line x1="793.5" y1="297.0" x2="793.5" y2="617.0" stroke="#fafa00" stroke-width="1"/>
<line x1="832.5" y1="99.0" x2="832.5" y2="138.0" stroke="#fa0808" stroke-width="1"/>
<line x1="832.5" y1="165.0" x2="832.5" y2="209.0" stroke="#fa0808" stroke-width="1"/>
<line x1="832.5" y1="236.0" x2="832.5" y2="270.0" stroke="#fa0808" stroke-width="1"/>
<line x1="832.5" y1="297.0" x2="832.5" y2="617.0" stroke="#f40404" stroke-width="1"/>
<line x1="897.5" y1="99.0" x2="897.5" y2="138.0" stroke="#fafa00" stroke-width="1"/>
<line x1="897.5" y1="165.0" x2="897.5" y2="209.0" stroke="#fafa00" stroke-width="1"/>
<line x1="897.5" y1="236.0" x2="897.5" y2="270.0" stroke="#fafa00" stroke-width="1"/>
<line x1="897.5" y1="297.0" x2="897.5" y2="617.0" stroke="#fafa00" stroke-width="1"/>
<line x1="904.5" y1="99.0" x2="904.5" y2="138.0" stroke="#fa0808" stroke-width="1"/>
<line x1="904.5" y1="165.0" x2="904.5" y2="209.0" stroke="#fa0808" stroke-width="1"/>
<line x1="904.5" y1="236.0" x2="904.5" y2="270.0" stroke="#fa0808" stroke-width="1"/>
<line x1="904.5" y1="297.0" x2="904.5" y2="617.0" stroke="#f40404" stroke-width="1"/>
<line x1="988.5" y1="99.0" x2="988.5" y2="138.0" stroke="#fafa00" stroke-width="1"/>
<line x1="988.5" y1="165.0" x2="988.5" y2="209.0" stroke="#fafa00" stroke-width="1"/>
<line x1="988.5" y1="236.0" x2="988.5" y2="270.0" stroke="#fafa00" stroke-width="1"/>
<line x1="988.5" y1="297.0" x2="988.5" y2="617.0" stroke="#fafa00" stroke-width="1"/>
<line x1="1066.5" y1="99.0" x2="1066.5" y2="138.0" stroke="#008a00" stroke-width="1"/>
<line x1="1066.5" y1="165.0" x2="1066.5" y2="209.0" stroke="#008a00" stroke-width="1"/>
<line x1="1066.5" y1="236.0" x2="1066.5" y2="270.0" stroke="#008a00" stroke-width="1"/>
<line x1="1066.5" y1="297.0" x2="1066.5" y2="617.0" stroke="#008c00" stroke-width="1"/>
<line x1="1079.5" y1="99.0" x2="1079.5" y2="138.0" stroke="#fa0808" stroke-width="1"/>
<line x1="1079.5" y1="165.0" x2="1079.5" y2="209.0" stroke="#fa0808" stroke-width="1"/>
<line x1="1079.5" y1="236.0" x2="1079.5" y2="270.0" stroke="#fa0808" stroke-width="1"/>
<line x1="1079.5" y1="297.0" x2="1079.5" y2="617.0" stroke="#f40404" stroke-width="1"/>
<line x1="1111.5" y1="99.0" x2="1111.5" y2="138.0" stroke="#fafa00" stroke-width="1"/>
<line x1="1111.5" y1="165.0" x2="1111.5" y2="209.0" stroke="#fafa00" stroke-width="1"/>
<line x1="1111.5" y1="236.0" x2="1111.5" y2="270.0" stroke="#fafa00" stroke-width="1"/>
<line x1="1111.5" y1="297.0" x2="1111.5" y2="617.0" stroke="#fafa00" stroke-width="1"/>
<line x1="1124.5" y1="99.0" x2="1124.5" y2="138.0" stroke="#008a00" stroke-width="1"/>
<line x1="1124.5" y1="165.0" x2="1124.5" y2="209.0" stroke="#008a00" stroke-width="1"/>
<line x1="1124.5" y1="236.0" x2="1124.5" y2="270.0" stroke="#008a00" stroke-width="1"/>
<line x1="1124.5" y1="297.0" x2="1124.5" y2="617.0" stroke="#008c00" stroke-width="1"/>
<line x1="1170.5" y1="99.0" x2="1170.5" y2="138.0" stroke="#fa0808" stroke-width="1"/>
<line x1="1170.5" y1="165.0" x2="1170.5" y2="209.0" stroke="#fa0808" stroke-width="1"/>
<line x1="1170.5" y1="236.0" x2="1170.5" y2="270.0" stroke="#fa0808" stroke-width="1"/>
<line x1="1170.5" y1="297.0" x2="1170.5" y2="617.0" stroke="#f40404" stroke-width="1"/>
<line x1="1176.5" y1="99.0" x2="1176.5" y2="138.0" stroke="#fafa00" stroke-width="1"/>
<line x1="1176.5" y1="165.0" x2="1176.5" y2="209.0" stroke="#fafa00" stroke-width="1"/>
<line x1="1176.5" y1="236.0" x2="1176.5" y2="270.0" stroke="#fafa00" stroke-width="1"/>
<line x1="1176.5" y1="297.0" x2="1176.5" y2="617.0" stroke="#fafa00" stroke-width="1"/>
<line x1="1183.5" y1="99.0" x2="1183.5" y2="138.0" stroke="#fa0808" stroke-width="1"/>
<line x1="1183.5" y1="165.0" x2="1183.5" y2="209.0" stroke="#fa0808" stroke-width="1"/>
<line x1="1183.5" y1="236.0" x2="1183.5" y2="270.0" stroke="#fa0808" stroke-width="1"/>
<line x1="1183.5" y1="297.0" x2="1183.5" y2="617.0" stroke="#f40404" stroke-width="1"/>
<line x1="1235.5" y1="99.0" x2="1235.5" y2="138.0" stroke="#fafa00" stroke-width="1"/>
<line x1="1235.5" y1="165.0" x2="1235.5" y2="209.0" stroke="#fafa00" stroke-width="1"/>
<line x1="1235.5" y1="236.0" x2="1235.5" y2="270.0" stroke="#fafa00" stroke-width="1"/>
<line x1="1235.5" y1="297.0" x2="1235.5" y2="617.0" stroke="#fafa00" stroke-width="1"/>
<line x1="85.5" y1="99.0" x2="85.5" y2="138.0" stroke="#000" stroke-width="1"/>
<path d="M85.5 101.5 h-7.0 M85.5 110.5 h-3.0 M85.5 118.5 h-7.0 M85.5 126.5 h-3.0 M85.5 135.5 h-7.0 " stroke="#000" stroke-width="1" fill="none"/>
<line x1="1313.5" y1="99.0" x2="1313.5" y2="138.0" stroke="#fff" stroke-width="1"/>
<path d="M1313.5 101.5 h7.0 M1313.5 110.5 h3.0 M1313.5 118.5 h7.0 M1313.5 126.5 h3.0 M1313.5 135.5 h7.0 " stroke="#fff" stroke-width="1" fill="none"/>
<line x1="85.5" y1="165.0" x2="85.5" y2="209.0" stroke="#000" stroke-width="1"/>
<path d="M85.5 166.5 h-3.0 M85.5 171.5 h-3.0 M85.5 176.5 h-7.0 M85.5 181.5 h-3.0 M85.5 186.5 h-3.0 M85.5 190.5 h-3.0 M85.5 195.5 h-3.0 M85.5 200.5 h-7.0 M85.5 205.5 h-3.0 " stroke="#000" stroke-width="1" fill="none"/>
<line x1="1313.5" y1="165.0" x2="1313.5" y2="209.0" stroke="#fff" stroke-width="1"/>
<path d="M1313.5 166.5 h3.0 M1313.5 171.5 h3.0 M1313.5 176.5 h7.0 M1313.5 181.5 h3.0 M1313.5 186.5 h3.0 M1313.5 190.5 h3.0 M1313.5 195.5 h3.0 M1313.5 200.5 h7.0 M1313.5 205.5 h3.0 " stroke="#fff" stroke-width="1" fill="none"/>
<line x1="85.5" y1="236.0" x2="85.5" y2="270.0" stroke="#000" stroke-width="1"/>
<path d="M85.5 238.5 h-7.0 M85.5 245.5 h-3.0 M85.5 253.5 h-7.0 M85.5 260.5 h-3.0 M85.5 267.5 h-7.0 " stroke="#000" stroke-width="1" fill="none"/>
<line x1="1313.5" y1="236.0" x2="1313.5" y2="270.0" stroke="#fff" stroke-width="1"/>
<path d="M1313.5 238.5 h7.0 M1313.5 245.5 h3.0 M1313.5 253.5 h7.0 M1313.5 260.5 h3.0 M1313.5 267.5 h7.0 " stroke="#fff" stroke-width="1" fill="none"/>
<line x1="85.5" y1="297.0" x2="85.5" y2="617.0" stroke="#fff" stroke-width="1"/>
<path d="M85.5 615.5 h-3.0 M85.5 609.5 h-8.0 M85.5 603.5 h-3.0 M85.5 598.5 h-3.0 M85.5 592.5 h-3.0 M85.5 587.5 h-3.0 M85.5 581.5 h-8.0 M85.5 575.5 h-3.0 M85.5 570.5 h-3.0 M85.5 564.5 h-3.0 M85.5 559.5 h-3.0 M85.5 553.5 h-8.0 M85.5 547.5 h-3.0 M85.5 542.5 h-3.0 M85.5 535.5 h-3.0 M85.5 530.5 h-3.0 M85.5 524.5 h-8.0 M85.5 518.5 h-3.0 M85.5 513.5 h-3.0 M85.5 507.5 h-3.0 M85.5 502.5 h-3.0 M85.5 496.5 h-8.0 M85.5 490.5 h-3.0 M85.5 485.5 h-3.0 M85.5 479.5 h-3.0 M85.5 474.5 h-3.0 M85.5 468.5 h-8.0 M85.5 462.5 h-3.0 M85.5 457.5 h-3.0 M85.5 451.5 h-3.0 M85.5 446.5 h-3.0 M85.5 440.5 h-8.0 M85.5 434.5 h-3.0 M85.5 429.5 h-3.0 M85.5 423.5 h-3.0 M85.5 418.5 h-3.0 M85.5 412.5 h-8.0 M85.5 406.5 h-3.0 M85.5 401.5 h-3.0 M85.5 395.5 h-3.0 M85.5 390.5 h-3.0 M85.5 384.5 h-8.0 M85.5 378.5 h-3.0 M85.5 373.5 h-3.0 M85.5 367.5 h-3.0 M85.5 362.5 h-3.0 M85.5 356.5 h-8.0 M85.5 350.5 h-3.0 M85.5 345.5 h-3.0 M85.5 339.5 h-3.0 M85.5 334.5 h-3.0 M85.5 328.5 h-8.0 M85.5 322.5 h-3.0 M85.5 317.5 h-3.0 M85.5 311.5 h-3.0 M85.5 306.5 h-3.0 M85.5 300.5 h-8.0 " stroke="#fff" stroke-width="1" fill="none"/>
<line x1="1313.5" y1="297.0" x2="1313.5" y2="617.0" stroke="#fff" stroke-width="1"/>
<path d="M1313.5 615.5 h3.0 M1313.5 609.5 h8.0 M1313.5 603.5 h3.0 M1313.5 598.5 h3.0 M1313.5 592.5 h3.0 M1313.5 587.5 h3.0 M1313.5 581.5 h8.0 M1313.5 575.5 h3.0 M1313.5 570.5 h3.0 M1313.5 564.5 h3.0 M1313.5 559.5 h3.0 M1313.5 553.5 h8.0 M1313.5 547.5 h3.0 M1313.5 542.5 h3.0 M1313.5 535.5 h3.0 M1313.5 530.5 h3.0 M1313.5 524.5 h8.0 M1313.5 518.5 h3.0 M1313.5 513.5 h3.0 M1313.5 507.5 h3.0 M1313.5 502.5 h3.0 M1313.5 496.5 h8.0 M1313.5 490.5 h3.0 M1313.5 485.5 h3.0 M1313.5 479.5 h3.0 M1313.5 474.5 h3.0 M1313.5 468.5 h8.0 M1313.5 462.5 h3.0 M1313.5 457.5 h3.0 M1313.5 451.5 h3.0 M1313.5 446.5 h3.0 M1313.5 440.5 h8.0 M1313.5 434.5 h3.0 M1313.5 429.5 h3.0 M1313.5 423.5 h3.0 M1313.5 418.5 h3.0 M1313.5 412.5 h8.0 M1313.5 406.5 h3.0 M1313.5 401.5 h3.0 M1313.5 395.5 h3.0 M1313.5 390.5 h3.0 M1313.5 384.5 h8.0 M1313.5 378.5 h3.0 M1313.5 373.5 h3.0 M1313.5 367.5 h3.0 M1313.5 362.5 h3.0 M1313.5 356.5 h8.0 M1313.5 350.5 h3.0 M1313.5 345.5 h3.0 M1313.5 339.5 h3.0 M1313.5 334.5 h3.0 M1313.5 328.5 h8.0 M1313.5 322.5 h3.0 M1313.5 317.5 h3.0 M1313.5 311.5 h3.0 M1313.5 306.5 h3.0 M1313.5 300.5 h8.0 " stroke="#fff" stroke-width="1" fill="none"/>
<line x1="87" y1="118.5" x2="1313" y2="118.5" stroke="#fff" stroke-width="1"/>
<rect x="87" y="99" width="5" height="19.5" fill="#0a8a0a"/>
<rect x="93" y="99" width="5" height="19.5" fill="#0a8a0a"/>
<rect x="100" y="99" width="5" height="19.5" fill="#0a8a0a"/>
<rect x="106" y="99" width="5" height="19.5" fill="#0a8a0a"/>
<rect x="113" y="99" width="5" height="19.5" fill="#0a8a0a"/>
<rect x="119" y="99" width="5" height="19.5" fill="#0a8a0a"/>
<rect x="126" y="99" width="5" height="19.5" fill="#0a8a0a"/>
<rect x="132" y="99" width="5" height="19.5" fill="#0a8a0a"/>
<rect x="139" y="118.5" width="5" height="17" fill="#ff0000"/>
<rect x="145" y="118.5" width="5" height="17" fill="#ff0000"/>
<rect x="152" y="118.5" width="5" height="17" fill="#ff0000"/>
<rect x="158" y="118.5" width="5" height="17" fill="#ff0000"/>
<rect x="165" y="118.5" width="5" height="17" fill="#ff0000"/>
<rect x="171" y="118.5" width="5" height="17" fill="#ff0000"/>
<rect x="178" y="118.5" width="5" height="17" fill="#ff0000"/>
<rect x="184" y="118.5" width="5" height="17" fill="#ff0000"/>
<rect x="191" y="118.5" width="5" height="17" fill="#ff0000"/>
<rect x="197" y="99" width="5" height="19.5" fill="#0a8a0a"/>
<rect x="204" y="118.5" width="5" height="17" fill="#ff0000"/>
<rect x="210" y="118.5" width="5" height="17" fill="#ff0000"/>
<rect x="217" y="118.5" width="5" height="17" fill="#ff0000"/>
<rect x="223" y="118.5" width="5" height="17" fill="#ff0000"/>
<rect x="230" y="99" width="5" height="19.5" fill="#0a8a0a"/>
<rect x="236" y="99" width="5" height="19.5" fill="#0a8a0a"/>
<rect x="243" y="99" width="5" height="19.5" fill="#0a8a0a"/>
<rect x="249" y="99" width="5" height="19.5" fill="#0a8a0a"/>
<rect x="256" y="99" width="5" height="19.5" fill="#0a8a0a"/>
<rect x="262" y="99" width="5" height="19.5" fill="#0a8a0a"/>
<rect x="269" y="99" width="5" height="19.5" fill="#0a8a0a"/>
<rect x="275" y="99" width="5" height="19.5" fill="#0a8a0a"/>
<rect x="282" y="99" width="5" height="19.5" fill="#0a8a0a"/>
<rect x="288" y="99" width="5" height="19.5" fill="#0a8a0a"/>
<rect x="301" y="99" width="5" height="19.5" fill="#0a8a0a"/>
<rect x="308" y="99" width="5" height="19.5" fill="#0a8a0a"/>
<rect x="314" y="99" width="5" height="19.5" fill="#0a8a0a"/>
<rect x="321" y="99" width="5" height="19.5" fill="#0a8a0a"/>
<rect x="327" y="99" width="5" height="19.5" fill="#0a8a0a"/>
<rect x="334" y="99" width="5" height="19.5" fill="#0a8a0a"/>
<rect x="340" y="99" width="5" height="19.5" fill="#0a8a0a"/>
<rect x="347" y="99" width="5" height="19.5" fill="#0a8a0a"/>
<rect x="353" y="99" width="5" height="19.5" fill="#0a8a0a"/>
<rect x="360" y="99" width="5" height="19.5" fill="#0a8a0a"/>
<rect x="366" y="99" width="5" height="19.5" fill="#0a8a0a"/>
<rect x="373" y="99" width="5" height="19.5" fill="#0a8a0a"/>
<rect x="379" y="99" width="5" height="19.5" fill="#0a8a0a"/>
<rect x="386" y="99" width="5" height="19.5" fill="#0a8a0a"/>
<rect x="392" y="99" width="5" height="19.5" fill="#0a8a0a"/>
<rect x="399" y="99" width="5" height="19.5" fill="#0a8a0a"/>
<rect x="561" y="118.5" width="5" height="17" fill="#ff0000"/>
<rect x="567" y="118.5" width="5" height="17" fill="#ff0000"/>
<rect x="574" y="118.5" width="5" height="17" fill="#ff0000"/>
<rect x="580" y="118.5" width="5" height="17" fill="#ff0000"/>
<rect x="587" y="118.5" width="5" height="17" fill="#ff0000"/>
<rect x="593" y="118.5" width="5" height="17" fill="#ff0000"/>
<rect x="600" y="118.5" width="5" height="17" fill="#ff0000"/>
<rect x="606" y="118.5" width="5" height="17" fill="#ff0000"/>
<rect x="613" y="118.5" width="5" height="17" fill="#ff0000"/>
<rect x="619" y="118.5" width="5" height="17" fill="#ff0000"/>
<rect x="626" y="118.5" width="5" height="17" fill="#ff0000"/>
<rect x="632" y="118.5" width="5" height="17" fill="#ff0000"/>
<rect x="639" y="118.5" width="5" height="17" fill="#ff0000"/>
<rect x="645" y="118.5" width="5" height="17" fill="#ff0000"/>
<rect x="652" y="118.5" width="5" height="17" fill="#ff0000"/>
<rect x="658" y="118.5" width="5" height="17" fill="#ff0000"/>
<rect x="665" y="118.5" width="5" height="17" fill="#ff0000"/>
<rect x="671" y="118.5" width="5" height="17" fill="#ff0000"/>
<rect x="704" y="118.5" width="5" height="17" fill="#ff0000"/>
<rect x="710" y="118.5" width="5" height="17" fill="#ff0000"/>
<rect x="717" y="118.5" width="5" height="17" fill="#ff0000"/>
<rect x="723" y="118.5" width="5" height="17" fill="#ff0000"/>
<rect x="730" y="118.5" width="5" height="17" fill="#ff0000"/>
<rect x="736" y="118.5" width="5" height="17" fill="#ff0000"/>
<rect x="743" y="118.5" width="5" height="17" fill="#ff0000"/>
<rect x="749" y="118.5" width="5" height="17" fill="#ff0000"/>
<rect x="756" y="118.5" width="5" height="17" fill="#ff0000"/>
<rect x="762" y="118.5" width="5" height="17" fill="#ff0000"/>
<rect x="769" y="118.5" width="5" height="17" fill="#ff0000"/>
<rect x="775" y="118.5" width="5" height="17" fill="#ff0000"/>
<rect x="782" y="118.5" width="5" height="17" fill="#ff0000"/>
<rect x="788" y="118.5" width="5" height="17" fill="#ff0000"/>
<rect x="833" y="118.5" width="5" height="17" fill="#ff0000"/>
<rect x="840" y="118.5" width="5" height="17" fill="#ff0000"/>
<rect x="846" y="118.5" width="5" height="17" fill="#ff0000"/>
<rect x="853" y="118.5" width="5" height="17" fill="#ff0000"/>
<rect x="859" y="118.5" width="5" height="17" fill="#ff0000"/>
<rect x="866" y="118.5" width="5" height="17" fill="#ff0000"/>
<rect x="872" y="118.5" width="5" height="17" fill="#ff0000"/>
<rect x="879" y="118.5" width="5" height="17" fill="#ff0000"/>
<rect x="885" y="118.5" width="5" height="17" fill="#ff0000"/>
<rect x="892" y="118.5" width="5" height="17" fill="#ff0000"/>
<rect x="905" y="118.5" width="5" height="17" fill="#ff0000"/>
<rect x="911" y="118.5" width="5" height="17" fill="#ff0000"/>
<rect x="918" y="118.5" width="5" height="17" fill="#ff0000"/>
<rect x="924" y="118.5" width="5" height="17" fill="#ff0000"/>
<rect x="931" y="118.5" width="5" height="17" fill="#ff0000"/>
<rect x="937" y="118.5" width="5" height="17" fill="#ff0000"/>
<rect x="944" y="118.5" width="5" height="17" fill="#ff0000"/>
<rect x="950" y="118.5" width="5" height="17" fill="#ff0000"/>
<rect x="957" y="118.5" width="5" height="17" fill="#ff0000"/>
<rect x="963" y="118.5" width="5" height="17" fill="#ff0000"/>
<rect x="970" y="118.5" width="5" height="17" fill="#ff0000"/>
<rect x="976" y="118.5" width="5" height="17" fill="#ff0000"/>
<rect x="983" y="118.5" width="5" height="17" fill="#ff0000"/>
<rect x="1067" y="99" width="5" height="19.5" fill="#0a8a0a"/>
<rect x="1074" y="99" width="5" height="19.5" fill="#0a8a0a"/>
<rect x="1080" y="118.5" width="5" height="17" fill="#ff0000"/>
<rect x="1087" y="118.5" width="5" height="17" fill="#ff0000"/>
<rect x="1093" y="118.5" width="5" height="17" fill="#ff0000"/>
<rect x="1100" y="118.5" width="5" height="17" fill="#ff0000"/>
<rect x="1106" y="118.5" width="5" height="17" fill="#ff0000"/>
<rect x="1126" y="99" width="5" height="19.5" fill="#0a8a0a"/>
<rect x="1132" y="99" width="5" height="19.5" fill="#0a8a0a"/>
<rect x="1139" y="99" width="5" height="19.5" fill="#0a8a0a"/>
<rect x="1145" y="99" width="5" height="19.5" fill="#0a8a0a"/>
<rect x="1152" y="99" width="5" height="19.5" fill="#0a8a0a"/>
<rect x="1158" y="99" width="5" height="19.5" fill="#0a8a0a"/>
<rect x="1165" y="99" width="5" height="19.5" fill="#0a8a0a"/>
<rect x="1171" y="118.5" width="5" height="17" fill="#ff0000"/>
<rect x="1184" y="118.5" width="5" height="17" fill="#ff0000"/>
<rect x="1191" y="118.5" width="5" height="17" fill="#ff0000"/>
<rect x="1197" y="118.5" width="5" height="17" fill="#ff0000"/>
<rect x="1204" y="118.5" width="5" height="17" fill="#ff0000"/>
<rect x="1210" y="118.5" width="5" height="17" fill="#ff0000"/>
<rect x="1217" y="118.5" width="5" height="17" fill="#ff0000"/>
<rect x="1223" y="118.5" width="5" height="17" fill="#ff0000"/>
<rect x="1229" y="118.5" width="5" height="17" fill="#ff0000"/>
</svg>
<svg class="b" style="left:0px;top:0px" width="1366" height="660" viewBox="0 0 1366 660" >
<circle cx="89.5" cy="118.500" r="2.600" fill="#ff0000"/>
<circle cx="95.5" cy="118.500" r="2.600" fill="#ff0000"/>
<circle cx="102.5" cy="118.500" r="2.600" fill="#ff0000"/>
<circle cx="108.5" cy="118.500" r="2.600" fill="#ff0000"/>
<circle cx="115.5" cy="118.500" r="2.600" fill="#ff0000"/>
<circle cx="121.5" cy="118.500" r="2.600" fill="#ff0000"/>
<circle cx="128.5" cy="118.500" r="2.600" fill="#ff0000"/>
<circle cx="134.5" cy="118.500" r="2.600" fill="#ff0000"/>
<circle cx="141.5" cy="135.5" r="2.5" fill="#ff0000"/>
<circle cx="141.5" cy="118.500" r="2.600" fill="#ff0000"/>
<circle cx="147.5" cy="135.5" r="2.5" fill="#ff0000"/>
<circle cx="147.5" cy="118.500" r="2.600" fill="#ff0000"/>
<circle cx="154.5" cy="135.5" r="2.5" fill="#ff0000"/>
<circle cx="154.5" cy="118.500" r="2.600" fill="#ff0000"/>
<circle cx="160.5" cy="135.5" r="2.5" fill="#ff0000"/>
<circle cx="160.5" cy="118.500" r="2.600" fill="#ff0000"/>
<circle cx="167.5" cy="135.5" r="2.5" fill="#ff0000"/>
<circle cx="167.5" cy="118.500" r="2.600" fill="#ff0000"/>
<circle cx="173.5" cy="135.5" r="2.5" fill="#ff0000"/>
<circle cx="173.5" cy="118.500" r="2.600" fill="#ff0000"/>
<circle cx="180.5" cy="135.5" r="2.5" fill="#ff0000"/>
<circle cx="180.5" cy="118.500" r="2.600" fill="#ff0000"/>
<circle cx="186.5" cy="135.5" r="2.5" fill="#ff0000"/>
<circle cx="186.5" cy="118.500" r="2.600" fill="#ff0000"/>
<circle cx="193.5" cy="135.5" r="2.5" fill="#ff0000"/>
<circle cx="193.5" cy="118.500" r="2.600" fill="#ff0000"/>
<circle cx="199.5" cy="118.500" r="2.600" fill="#ff0000"/>
<circle cx="206.5" cy="135.5" r="2.5" fill="#ff0000"/>
<circle cx="206.5" cy="118.500" r="2.600" fill="#ff0000"/>
<circle cx="212.5" cy="135.5" r="2.5" fill="#ff0000"/>
<circle cx="212.5" cy="118.500" r="2.600" fill="#ff0000"/>
<circle cx="219.5" cy="135.5" r="2.5" fill="#ff0000"/>
<circle cx="219.5" cy="118.500" r="2.600" fill="#ff0000"/>
<circle cx="225.5" cy="135.5" r="2.5" fill="#ff0000"/>
<circle cx="225.5" cy="118.500" r="2.600" fill="#ff0000"/>
<circle cx="232.5" cy="118.500" r="2.600" fill="#ff0000"/>
<circle cx="238.5" cy="118.500" r="2.600" fill="#ff0000"/>
<circle cx="245.5" cy="118.500" r="2.600" fill="#ff0000"/>
<circle cx="251.5" cy="118.500" r="2.600" fill="#ff0000"/>
<circle cx="258.5" cy="118.500" r="2.600" fill="#ff0000"/>
<circle cx="264.5" cy="118.500" r="2.600" fill="#ff0000"/>
<circle cx="271.5" cy="118.500" r="2.600" fill="#ff0000"/>
<circle cx="277.5" cy="118.500" r="2.600" fill="#ff0000"/>
<circle cx="284.5" cy="118.500" r="2.600" fill="#ff0000"/>
<circle cx="290.5" cy="118.500" r="2.600" fill="#ff0000"/>
<circle cx="297.5" cy="118.500" r="2.600" fill="#ff0000"/>
<circle cx="303.5" cy="118.500" r="2.600" fill="#ff0000"/>
<circle cx="310.5" cy="118.500" r="2.600" fill="#ff0000"/>
<circle cx="316.5" cy="118.500" r="2.600" fill="#ff0000"/>
<circle cx="323.5" cy="118.500" r="2.600" fill="#ff0000"/>
<circle cx="329.5" cy="118.500" r="2.600" fill="#ff0000"/>
<circle cx="336.5" cy="118.500" r="2.600" fill="#ff0000"/>
<circle cx="342.5" cy="118.500" r="2.600" fill="#ff0000"/>
<circle cx="349.5" cy="118.500" r="2.600" fill="#ff0000"/>
<circle cx="355.5" cy="118.500" r="2.600" fill="#ff0000"/>
<circle cx="362.5" cy="118.500" r="2.600" fill="#ff0000"/>
<circle cx="368.5" cy="118.500" r="2.600" fill="#ff0000"/>
<circle cx="375.5" cy="118.500" r="2.600" fill="#ff0000"/>
<circle cx="381.5" cy="118.500" r="2.600" fill="#ff0000"/>
<circle cx="388.5" cy="118.500" r="2.600" fill="#ff0000"/>
<circle cx="394.5" cy="118.500" r="2.600" fill="#ff0000"/>
<circle cx="401.5" cy="118.500" r="2.600" fill="#ff0000"/>
<circle cx="407.5" cy="118.500" r="2.600" fill="#ff0000"/>
<circle cx="414.5" cy="118.500" r="2.600" fill="#ff0000"/>
<circle cx="420.5" cy="118.500" r="2.600" fill="#ff0000"/>
<circle cx="426.5" cy="118.500" r="2.600" fill="#ff0000"/>
<circle cx="433.5" cy="118.500" r="2.600" fill="#ff0000"/>
<circle cx="439.5" cy="118.500" r="2.600" fill="#ff0000"/>
<circle cx="446.5" cy="118.500" r="2.600" fill="#ff0000"/>
<circle cx="452.5" cy="118.500" r="2.600" fill="#ff0000"/>
<circle cx="459.5" cy="118.500" r="2.600" fill="#ff0000"/>
<circle cx="465.5" cy="118.500" r="2.600" fill="#ff0000"/>
<circle cx="472.5" cy="118.500" r="2.600" fill="#ff0000"/>
<circle cx="478.5" cy="118.500" r="2.600" fill="#ff0000"/>
<circle cx="485.5" cy="118.500" r="2.600" fill="#ff0000"/>
<circle cx="491.5" cy="118.500" r="2.600" fill="#ff0000"/>
<circle cx="498.5" cy="118.500" r="2.600" fill="#ff0000"/>
<circle cx="504.5" cy="118.500" r="2.600" fill="#ff0000"/>
<circle cx="511.5" cy="118.500" r="2.600" fill="#ff0000"/>
<circle cx="517.5" cy="118.500" r="2.600" fill="#ff0000"/>
<circle cx="524.5" cy="118.500" r="2.600" fill="#ff0000"/>
<circle cx="530.5" cy="118.500" r="2.600" fill="#ff0000"/>
<circle cx="537.5" cy="118.500" r="2.600" fill="#ff0000"/>
<circle cx="543.5" cy="118.500" r="2.600" fill="#ff0000"/>
<circle cx="550.5" cy="118.500" r="2.600" fill="#ff0000"/>
<circle cx="556.5" cy="118.500" r="2.600" fill="#ff0000"/>
<circle cx="563.5" cy="135.5" r="2.5" fill="#ff0000"/>
<circle cx="563.5" cy="118.500" r="2.600" fill="#ff0000"/>
<circle cx="569.5" cy="135.5" r="2.5" fill="#ff0000"/>
<circle cx="569.5" cy="118.500" r="2.600" fill="#ff0000"/>
<circle cx="576.5" cy="135.5" r="2.5" fill="#ff0000"/>
<circle cx="576.5" cy="118.500" r="2.600" fill="#ff0000"/>
<circle cx="582.5" cy="135.5" r="2.5" fill="#ff0000"/>
<circle cx="582.5" cy="118.500" r="2.600" fill="#ff0000"/>
<circle cx="589.5" cy="135.5" r="2.5" fill="#ff0000"/>
<circle cx="589.5" cy="118.500" r="2.600" fill="#ff0000"/>
<circle cx="595.5" cy="135.5" r="2.5" fill="#ff0000"/>
<circle cx="595.5" cy="118.500" r="2.600" fill="#ff0000"/>
<circle cx="602.5" cy="135.5" r="2.5" fill="#ff0000"/>
<circle cx="602.5" cy="118.500" r="2.600" fill="#ff0000"/>
<circle cx="608.5" cy="135.5" r="2.5" fill="#ff0000"/>
<circle cx="608.5" cy="118.500" r="2.600" fill="#ff0000"/>
<circle cx="615.5" cy="135.5" r="2.5" fill="#ff0000"/>
<circle cx="615.5" cy="118.500" r="2.600" fill="#ff0000"/>
<circle cx="621.5" cy="135.5" r="2.5" fill="#ff0000"/>
<circle cx="621.5" cy="118.500" r="2.600" fill="#ff0000"/>
<circle cx="628.5" cy="135.5" r="2.5" fill="#ff0000"/>
<circle cx="628.5" cy="118.500" r="2.600" fill="#ff0000"/>
<circle cx="634.5" cy="135.5" r="2.5" fill="#ff0000"/>
<circle cx="634.5" cy="118.500" r="2.600" fill="#ff0000"/>
<circle cx="641.5" cy="135.5" r="2.5" fill="#ff0000"/>
<circle cx="641.5" cy="118.500" r="2.600" fill="#ff0000"/>
<circle cx="647.5" cy="135.5" r="2.5" fill="#ff0000"/>
<circle cx="647.5" cy="118.500" r="2.600" fill="#ff0000"/>
<circle cx="654.5" cy="135.5" r="2.5" fill="#ff0000"/>
<circle cx="654.5" cy="118.500" r="2.600" fill="#ff0000"/>
<circle cx="660.5" cy="135.5" r="2.5" fill="#ff0000"/>
<circle cx="660.5" cy="118.500" r="2.600" fill="#ff0000"/>
<circle cx="667.5" cy="135.5" r="2.5" fill="#ff0000"/>
<circle cx="667.5" cy="118.500" r="2.600" fill="#ff0000"/>
<circle cx="673.5" cy="135.5" r="2.5" fill="#ff0000"/>
<circle cx="673.5" cy="118.500" r="2.600" fill="#ff0000"/>
<circle cx="680.5" cy="118.500" r="2.600" fill="#ff0000"/>
<circle cx="686.5" cy="118.500" r="2.600" fill="#ff0000"/>
<circle cx="693.5" cy="118.500" r="2.600" fill="#ff0000"/>
<circle cx="699.5" cy="118.500" r="2.600" fill="#ff0000"/>
<circle cx="706.5" cy="135.5" r="2.5" fill="#ff0000"/>
<circle cx="706.5" cy="118.500" r="2.600" fill="#ff0000"/>
<circle cx="712.5" cy="135.5" r="2.5" fill="#ff0000"/>
<circle cx="712.5" cy="118.500" r="2.600" fill="#ff0000"/>
<circle cx="719.5" cy="135.5" r="2.5" fill="#ff0000"/>
<circle cx="719.5" cy="118.500" r="2.600" fill="#ff0000"/>
<circle cx="725.5" cy="135.5" r="2.5" fill="#ff0000"/>
<circle cx="725.5" cy="118.500" r="2.600" fill="#ff0000"/>
<circle cx="732.5" cy="135.5" r="2.5" fill="#ff0000"/>
<circle cx="732.5" cy="118.500" r="2.600" fill="#ff0000"/>
<circle cx="738.5" cy="135.5" r="2.5" fill="#ff0000"/>
<circle cx="738.5" cy="118.500" r="2.600" fill="#ff0000"/>
<circle cx="745.5" cy="135.5" r="2.5" fill="#ff0000"/>
<circle cx="745.5" cy="118.500" r="2.600" fill="#ff0000"/>
<circle cx="751.5" cy="135.5" r="2.5" fill="#ff0000"/>
<circle cx="751.5" cy="118.500" r="2.600" fill="#ff0000"/>
<circle cx="758.5" cy="135.5" r="2.5" fill="#ff0000"/>
<circle cx="758.5" cy="118.500" r="2.600" fill="#ff0000"/>
<circle cx="764.5" cy="135.5" r="2.5" fill="#ff0000"/>
<circle cx="764.5" cy="118.500" r="2.600" fill="#ff0000"/>
<circle cx="771.5" cy="135.5" r="2.5" fill="#ff0000"/>
<circle cx="771.5" cy="118.500" r="2.600" fill="#ff0000"/>
<circle cx="777.5" cy="135.5" r="2.5" fill="#ff0000"/>
<circle cx="777.5" cy="118.500" r="2.600" fill="#ff0000"/>
<circle cx="784.5" cy="135.5" r="2.5" fill="#ff0000"/>
<circle cx="784.5" cy="118.500" r="2.600" fill="#ff0000"/>
<circle cx="790.5" cy="135.5" r="2.5" fill="#ff0000"/>
<circle cx="790.5" cy="118.500" r="2.600" fill="#ff0000"/>
<circle cx="797.5" cy="118.500" r="2.600" fill="#ff0000"/>
<circle cx="803.5" cy="118.500" r="2.600" fill="#ff0000"/>
<circle cx="810.5" cy="118.500" r="2.600" fill="#ff0000"/>
<circle cx="816.5" cy="118.500" r="2.600" fill="#ff0000"/>
<circle cx="822.5" cy="118.500" r="2.600" fill="#ff0000"/>
<circle cx="829.5" cy="118.500" r="2.600" fill="#ff0000"/>
<circle cx="835.5" cy="135.5" r="2.5" fill="#ff0000"/>
<circle cx="835.5" cy="118.500" r="2.600" fill="#ff0000"/>
<circle cx="842.5" cy="135.5" r="2.5" fill="#ff0000"/>
<circle cx="842.5" cy="118.500" r="2.600" fill="#ff0000"/>
<circle cx="848.5" cy="135.5" r="2.5" fill="#ff0000"/>
<circle cx="848.5" cy="118.500" r="2.600" fill="#ff0000"/>
<circle cx="855.5" cy="135.5" r="2.5" fill="#ff0000"/>
<circle cx="855.5" cy="118.500" r="2.600" fill="#ff0000"/>
<circle cx="861.5" cy="135.5" r="2.5" fill="#ff0000"/>
<circle cx="861.5" cy="118.500" r="2.600" fill="#ff0000"/>
<circle cx="868.5" cy="135.5" r="2.5" fill="#ff0000"/>
<circle cx="868.5" cy="118.500" r="2.600" fill="#ff0000"/>
<circle cx="874.5" cy="135.5" r="2.5" fill="#ff0000"/>
<circle cx="874.5" cy="118.500" r="2.600" fill="#ff0000"/>
<circle cx="881.5" cy="135.5" r="2.5" fill="#ff0000"/>
<circle cx="881.5" cy="118.500" r="2.600" fill="#ff0000"/>
<circle cx="887.5" cy="135.5" r="2.5" fill="#ff0000"/>
<circle cx="887.5" cy="118.500" r="2.600" fill="#ff0000"/>
<circle cx="894.5" cy="135.5" r="2.5" fill="#ff0000"/>
<circle cx="894.5" cy="118.500" r="2.600" fill="#ff0000"/>
<circle cx="900.5" cy="118.500" r="2.600" fill="#ff0000"/>
<circle cx="907.5" cy="135.5" r="2.5" fill="#ff0000"/>
<circle cx="907.5" cy="118.500" r="2.600" fill="#ff0000"/>
<circle cx="913.5" cy="135.5" r="2.5" fill="#ff0000"/>
<circle cx="913.5" cy="118.500" r="2.600" fill="#ff0000"/>
<circle cx="920.5" cy="135.5" r="2.5" fill="#ff0000"/>
<circle cx="920.5" cy="118.500" r="2.600" fill="#ff0000"/>
<circle cx="926.5" cy="135.5" r="2.5" fill="#ff0000"/>
<circle cx="926.5" cy="118.500" r="2.600" fill="#ff0000"/>
<circle cx="933.5" cy="135.5" r="2.5" fill="#ff0000"/>
<circle cx="933.5" cy="118.500" r="2.600" fill="#ff0000"/>
<circle cx="939.5" cy="135.5" r="2.5" fill="#ff0000"/>
<circle cx="939.5" cy="118.500" r="2.600" fill="#ff0000"/>
<circle cx="946.5" cy="135.5" r="2.5" fill="#ff0000"/>
<circle cx="946.5" cy="118.500" r="2.600" fill="#ff0000"/>
<circle cx="952.5" cy="135.5" r="2.5" fill="#ff0000"/>
<circle cx="952.5" cy="118.500" r="2.600" fill="#ff0000"/>
<circle cx="959.5" cy="135.5" r="2.5" fill="#ff0000"/>
<circle cx="959.5" cy="118.500" r="2.600" fill="#ff0000"/>
<circle cx="965.5" cy="135.5" r="2.5" fill="#ff0000"/>
<circle cx="965.5" cy="118.500" r="2.600" fill="#ff0000"/>
<circle cx="972.5" cy="135.5" r="2.5" fill="#ff0000"/>
<circle cx="972.5" cy="118.500" r="2.600" fill="#ff0000"/>
<circle cx="978.5" cy="135.5" r="2.5" fill="#ff0000"/>
<circle cx="978.5" cy="118.500" r="2.600" fill="#ff0000"/>
<circle cx="985.5" cy="135.5" r="2.5" fill="#ff0000"/>
<circle cx="985.5" cy="118.500" r="2.600" fill="#ff0000"/>
<circle cx="991.5" cy="118.500" r="2.600" fill="#ff0000"/>
<circle cx="998.5" cy="118.500" r="2.600" fill="#ff0000"/>
<circle cx="1004.5" cy="118.500" r="2.600" fill="#ff0000"/>
<circle cx="1011.5" cy="118.500" r="2.600" fill="#ff0000"/>
<circle cx="1017.5" cy="118.500" r="2.600" fill="#ff0000"/>
<circle cx="1024.5" cy="118.500" r="2.600" fill="#ff0000"/>
<circle cx="1030.5" cy="118.500" r="2.600" fill="#ff0000"/>
<circle cx="1037.5" cy="118.500" r="2.600" fill="#ff0000"/>
<circle cx="1043.5" cy="118.500" r="2.600" fill="#ff0000"/>
<circle cx="1050.5" cy="118.500" r="2.600" fill="#ff0000"/>
<circle cx="1056.5" cy="118.500" r="2.600" fill="#ff0000"/>
<circle cx="1063.5" cy="118.500" r="2.600" fill="#ff0000"/>
<circle cx="1069.5" cy="118.500" r="2.600" fill="#ff0000"/>
<circle cx="1076.5" cy="118.500" r="2.600" fill="#ff0000"/>
<circle cx="1082.5" cy="135.5" r="2.5" fill="#ff0000"/>
<circle cx="1082.5" cy="118.500" r="2.600" fill="#ff0000"/>
<circle cx="1089.5" cy="135.5" r="2.5" fill="#ff0000"/>
<circle cx="1089.5" cy="118.500" r="2.600" fill="#ff0000"/>
<circle cx="1095.5" cy="135.5" r="2.5" fill="#ff0000"/>
<circle cx="1095.5" cy="118.500" r="2.600" fill="#ff0000"/>
<circle cx="1102.5" cy="135.5" r="2.5" fill="#ff0000"/>
<circle cx="1102.5" cy="118.500" r="2.600" fill="#ff0000"/>
<circle cx="1108.5" cy="135.5" r="2.5" fill="#ff0000"/>
<circle cx="1108.5" cy="118.500" r="2.600" fill="#ff0000"/>
<circle cx="1115.5" cy="118.500" r="2.600" fill="#ff0000"/>
<circle cx="1121.5" cy="118.500" r="2.600" fill="#ff0000"/>
<circle cx="1128.5" cy="118.500" r="2.600" fill="#ff0000"/>
<circle cx="1134.5" cy="118.500" r="2.600" fill="#ff0000"/>
<circle cx="1141.5" cy="118.500" r="2.600" fill="#ff0000"/>
<circle cx="1147.5" cy="118.500" r="2.600" fill="#ff0000"/>
<circle cx="1154.5" cy="118.500" r="2.600" fill="#ff0000"/>
<circle cx="1160.5" cy="118.500" r="2.600" fill="#ff0000"/>
<circle cx="1167.5" cy="118.500" r="2.600" fill="#ff0000"/>
<circle cx="1173.5" cy="135.5" r="2.5" fill="#ff0000"/>
<circle cx="1173.5" cy="118.500" r="2.600" fill="#ff0000"/>
<circle cx="1180.5" cy="118.500" r="2.600" fill="#ff0000"/>
<circle cx="1186.5" cy="135.5" r="2.5" fill="#ff0000"/>
<circle cx="1186.5" cy="118.500" r="2.600" fill="#ff0000"/>
<circle cx="1193.5" cy="135.5" r="2.5" fill="#ff0000"/>
<circle cx="1193.5" cy="118.500" r="2.600" fill="#ff0000"/>
<circle cx="1199.5" cy="135.5" r="2.5" fill="#ff0000"/>
<circle cx="1199.5" cy="118.500" r="2.600" fill="#ff0000"/>
<circle cx="1206.5" cy="135.5" r="2.5" fill="#ff0000"/>
<circle cx="1206.5" cy="118.500" r="2.600" fill="#ff0000"/>
<circle cx="1212.5" cy="135.5" r="2.5" fill="#ff0000"/>
<circle cx="1212.5" cy="118.500" r="2.600" fill="#ff0000"/>
<circle cx="1219.5" cy="135.5" r="2.5" fill="#ff0000"/>
<circle cx="1219.5" cy="118.500" r="2.600" fill="#ff0000"/>
<circle cx="1225.5" cy="135.5" r="2.5" fill="#ff0000"/>
<circle cx="1225.5" cy="118.500" r="2.600" fill="#ff0000"/>
<circle cx="1231.5" cy="135.5" r="2.5" fill="#ff0000"/>
<circle cx="1231.5" cy="118.500" r="2.600" fill="#ff0000"/>
<circle cx="1238.5" cy="118.500" r="2.600" fill="#ff0000"/>
<polyline points="86.0,191.0 100.0,188.5 130.0,188.5 137.0,190.0 160.0,191.0 165.0,192.0 186.0,192.0 200.0,190.0 205.0,192.0 225.0,192.0 230.0,190.0 240.0,188.5 260.0,188.0 270.0,186.5 285.0,188.0 300.0,189.0 320.0,188.0 330.0,186.5 345.0,188.0 360.0,187.5 380.0,186.5 400.0,187.0 430.0,187.5 440.0,188.0 465.0,189.0 475.0,190.5 485.0,192.5 500.0,192.5 505.0,191.5 515.0,191.5 525.0,193.0 540.0,195.0 555.0,196.0 565.0,197.0 575.0,197.5 590.0,198.0 615.0,197.0 630.0,198.0 640.0,198.0 645.0,197.0 670.0,197.0 700.0,198.0 715.0,199.5 730.0,200.5 750.0,201.5 765.0,200.5 780.0,200.5 790.0,200.0 805.0,198.0 815.0,197.0 830.0,197.5 845.0,198.5 855.0,198.5 865.0,199.0 870.0,200.5 880.0,201.5 895.0,200.5 905.0,199.5 920.0,201.0 935.0,203.0 950.0,204.0 960.0,205.0 978.0,205.0 985.0,203.0 1000.0,202.0 1025.0,201.0 1045.0,199.5 1055.0,198.5 1068.0,198.0 1078.0,198.5 1085.0,199.5 1100.0,200.0 1115.0,199.5 1125.0,197.5 1140.0,197.0 1150.0,198.5 1160.0,198.5 1165.0,198.0 1185.0,199.5 1200.0,201.5 1225.0,201.5 1232.0,200.5 1238.0,200.0" fill="none" stroke="#000" stroke-width="2.1" stroke-linejoin="round"/>
<polyline points="86.0,192.0 130.0,190.5 160.0,191.0 165.0,191.0 230.0,190.5 260.0,189.5 270.0,188.5 300.0,188.5 380.0,188.0 430.0,188.0 435.0,187.5 460.0,187.5 490.0,188.5 520.0,189.0 540.0,189.5 580.0,190.0 585.0,192.5 600.0,193.0 655.0,193.0 663.0,195.5 670.0,197.0 720.0,197.0 760.0,197.0 763.0,199.0 780.0,200.5 800.0,201.0 812.0,200.0 815.0,198.0 850.0,198.0 870.0,198.5 900.0,199.0 960.0,199.5 972.0,199.5 977.0,202.0 1040.0,202.0 1065.0,200.0 1090.0,199.0 1120.0,199.0 1140.0,198.0 1160.0,197.5 1200.0,197.0 1238.0,197.0" fill="none" stroke="#ff0000" stroke-width="1.9" stroke-linejoin="round"/>
<polyline points="86.0,197.0 130.0,197.0 135.0,194.0 155.0,194.0 162.0,191.5 230.0,191.0 280.0,190.5 285.0,189.5 380.0,189.5 430.0,189.5 434.0,188.0 515.0,188.0 522.0,191.5 540.0,192.5 555.0,194.5 570.0,196.0 590.0,197.0 670.0,197.0 715.0,197.5 722.0,199.5 775.0,200.5 800.0,200.0 815.0,199.5 850.0,199.5 855.0,198.5 870.0,199.0 880.0,199.5 930.0,200.0 935.0,201.5 960.0,201.5 958.0,202.0 962.0,204.0 1155.0,204.0 1161.0,198.5 1185.0,198.5 1190.0,199.5 1238.0,199.5" fill="none" stroke="#0a8a0a" stroke-width="1.9" stroke-linejoin="round"/>
<line x1="86" y1="176.5" x2="1313" y2="176.5" stroke="#1010e0" stroke-width="1.4"/>
<polyline points="86.0,171.0 100.0,169.0 110.0,170.0 125.0,171.0 137.0,173.0 150.0,175.0 165.0,176.5 180.0,175.5 200.0,175.0 215.0,175.5 228.0,174.5 240.0,171.0 255.0,171.5 268.0,170.0 280.0,172.0 293.0,176.0 300.0,177.0 310.0,175.0 325.0,173.0 335.0,172.5 345.0,174.5 360.0,175.0 372.0,175.0 380.0,174.0 400.0,175.0 420.0,176.0 430.0,178.0 445.0,178.0 455.0,177.5 465.0,179.0 475.0,181.0 485.0,183.0 495.0,183.5 500.0,181.5 520.0,181.0 530.0,182.0 545.0,183.5 559.0,183.0 580.0,182.5 590.0,181.0 600.0,180.0 620.0,181.5 640.0,180.0 655.0,178.0 665.0,176.5 670.0,176.0 680.0,176.5 700.0,177.5 710.0,179.5 720.0,180.5 735.0,180.0 750.0,181.0 760.0,180.0 775.0,177.0 790.0,176.0 800.0,174.0 815.0,172.0 825.0,171.0 832.0,173.0 840.0,175.5 850.0,176.5 860.0,177.0 870.0,179.0 880.0,180.0 890.0,178.0 897.0,175.5 905.0,175.0 912.0,177.0 920.0,178.0 930.0,178.5 940.0,179.0 950.0,179.0 965.0,178.5 975.0,177.0 985.0,175.0 1000.0,174.0 1010.0,173.0 1020.0,172.0 1030.0,171.5 1040.0,171.0 1050.0,169.5 1062.0,169.5 1070.0,169.0 1080.0,170.0 1090.0,172.0 1100.0,172.5 1110.0,172.0 1120.0,171.0 1125.0,168.5 1135.0,168.5 1145.0,168.0 1155.0,170.0 1162.0,172.5 1170.0,175.0 1180.0,175.5 1190.0,176.5 1200.0,178.5 1210.0,178.0 1220.0,177.0 1230.0,175.5 1238.0,174.5" fill="none" stroke="#ffffff" stroke-width="2.0" stroke-linejoin="round"/>
<polyline points="86.0,171.0 137.0,172.5 150.0,174.0 165.0,175.0 200.0,175.5 230.0,176.0 250.0,176.0 262.0,174.0 280.0,173.0 298.0,174.0 302.0,177.0 330.0,176.0 345.0,175.5 380.0,174.5 400.0,175.0 440.0,178.0 490.0,178.5 498.0,184.0 530.0,184.0 560.0,184.5 590.0,185.0 600.0,182.5 640.0,182.0 655.0,180.0 670.0,179.5 675.0,178.5 700.0,178.5 715.0,180.5 730.0,181.0 745.0,182.0 760.0,182.5 785.0,182.0 790.0,179.0 810.0,178.0 815.0,175.0 840.0,174.0 847.0,176.5 860.0,178.0 880.0,179.5 890.0,180.0 910.0,180.0 925.0,179.0 960.0,179.0 1018.0,179.0 1022.0,176.0 1030.0,172.5 1040.0,172.0 1050.0,171.5 1066.0,170.5 1080.0,171.0 1090.0,172.5 1110.0,173.0 1135.0,173.0 1140.0,171.0 1150.0,169.5 1170.0,169.5 1180.0,175.5 1200.0,176.0 1212.0,179.0 1238.0,179.5" fill="none" stroke="#ff0000" stroke-width="1.0" stroke-linejoin="round"/>
<polyline points="86.0,170.0 100.0,168.5 155.0,168.5 162.0,174.5 200.0,174.0 240.0,172.0 260.0,170.5 300.0,170.5 310.0,175.0 330.0,175.0 340.0,173.0 380.0,173.5 400.0,174.5 460.0,174.5 466.0,176.0 520.0,176.5 527.0,181.0 540.0,181.5 560.0,183.0 590.0,183.0 600.0,181.0 650.0,180.5 660.0,178.0 670.0,178.0 675.0,176.0 720.0,176.0 725.0,180.0 740.0,178.5 770.0,178.0 790.0,177.0 805.0,174.5 812.0,173.0 825.0,171.5 850.0,171.0 858.0,174.0 870.0,174.5 878.0,177.5 895.0,177.5 905.0,174.5 935.0,174.5 940.0,176.5 960.0,176.5 965.0,178.0 990.0,177.5 996.0,174.5 1020.0,174.5 1030.0,171.5 1045.0,170.5 1060.0,169.5 1100.0,169.5 1125.0,169.5 1140.0,168.5 1186.0,168.5 1193.0,175.0 1215.0,175.5 1238.0,175.5" fill="none" stroke="#0a8a0a" stroke-width="1.1" stroke-linejoin="round"/>
<path d="M89.5 243.7 l1.500 1.500 V253.500 h-3 V245.2 z" fill="#fff"/>
<path d="M89.5 251.700 l1.700 1.700 l-1.700 1.700 l-1.700 -1.700 z" fill="#000"/>
<path d="M95.5 237.1 l1.500 1.500 V253.500 h-3 V238.6 z" fill="#fff"/>
<path d="M95.5 251.700 l1.700 1.700 l-1.700 1.700 l-1.700 -1.700 z" fill="#000"/>
<path d="M102.5 236.5 l1.500 1.500 V253.500 h-3 V238.0 z" fill="#fff"/>
<path d="M102.5 251.700 l1.700 1.700 l-1.700 1.700 l-1.700 -1.700 z" fill="#000"/>
<path d="M108.5 239.3 l1.500 1.500 V253.500 h-3 V240.8 z" fill="#fff"/>
<path d="M108.5 251.700 l1.700 1.700 l-1.700 1.700 l-1.700 -1.700 z" fill="#000"/>
<path d="M115.5 240.0 l1.500 1.500 V253.500 h-3 V241.5 z" fill="#fff"/>
<path d="M115.5 251.700 l1.700 1.700 l-1.700 1.700 l-1.700 -1.700 z" fill="#000"/>
<path d="M121.5 239.3 l1.500 1.500 V253.500 h-3 V240.8 z" fill="#fff"/>
<path d="M121.5 251.700 l1.700 1.700 l-1.700 1.700 l-1.700 -1.700 z" fill="#000"/>
<path d="M128.5 239.3 l1.500 1.500 V253.500 h-3 V240.8 z" fill="#fff"/>
<path d="M128.5 251.700 l1.700 1.700 l-1.700 1.700 l-1.700 -1.700 z" fill="#000"/>
<path d="M134.5 243.7 l1.500 1.500 V253.500 h-3 V245.2 z" fill="#fff"/>
<path d="M134.5 251.700 l1.700 1.700 l-1.700 1.700 l-1.700 -1.700 z" fill="#000"/>
<path d="M141.5 251.700 l1.500 1.500 V261.8 l-1.500 1.500 l-1.500 -1.500 V253.200 z" fill="#000"/>
<path d="M141.5 251.700 l1.700 1.700 l-1.700 1.700 l-1.700 -1.700 z" fill="#000"/>
<path d="M147.5 251.700 l1.500 1.500 v2 l-1.500 1.500 l-1.500 -1.500 v-2 z" fill="#000"/>
<path d="M147.5 251.700 l1.700 1.700 l-1.700 1.700 l-1.700 -1.700 z" fill="#000"/>
<path d="M154.5 251.700 l1.500 1.500 V260.7 l-1.500 1.500 l-1.500 -1.500 V253.200 z" fill="#000"/>
<path d="M154.5 251.700 l1.700 1.700 l-1.700 1.700 l-1.700 -1.700 z" fill="#000"/>
<path d="M160.5 251.700 l1.500 1.500 V264.6 l-1.500 1.500 l-1.500 -1.500 V253.200 z" fill="#000"/>
<path d="M160.5 251.700 l1.700 1.700 l-1.700 1.700 l-1.700 -1.700 z" fill="#000"/>
<path d="M167.5 251.700 l1.500 1.500 V262.4 l-1.500 1.500 l-1.500 -1.500 V253.200 z" fill="#000"/>
<path d="M167.5 251.700 l1.700 1.700 l-1.700 1.700 l-1.700 -1.700 z" fill="#000"/>
<path d="M173.5 251.700 l1.500 1.500 V261.8 l-1.500 1.500 l-1.500 -1.500 V253.200 z" fill="#000"/>
<path d="M173.5 251.700 l1.700 1.700 l-1.700 1.700 l-1.700 -1.700 z" fill="#000"/>
<path d="M180.5 251.700 l1.500 1.500 V261.8 l-1.500 1.500 l-1.500 -1.500 V253.200 z" fill="#000"/>
<path d="M180.5 251.700 l1.700 1.700 l-1.700 1.700 l-1.700 -1.700 z" fill="#000"/>
<path d="M186.5 251.700 l1.500 1.500 V258.5 l-1.500 1.500 l-1.500 -1.500 V253.200 z" fill="#000"/>
<path d="M186.5 251.700 l1.700 1.700 l-1.700 1.700 l-1.700 -1.700 z" fill="#000"/>
<path d="M193.5 251.700 l1.500 1.500 V260.7 l-1.500 1.500 l-1.500 -1.500 V253.200 z" fill="#000"/>
<path d="M193.5 251.700 l1.700 1.700 l-1.700 1.700 l-1.700 -1.700 z" fill="#000"/>
<path d="M199.5 239.3 l1.500 1.500 V253.500 h-3 V240.8 z" fill="#fff"/>
<path d="M199.5 251.700 l1.700 1.700 l-1.700 1.700 l-1.700 -1.700 z" fill="#000"/>
<path d="M206.5 251.700 l1.500 1.500 V261.8 l-1.500 1.500 l-1.500 -1.500 V253.200 z" fill="#000"/>
<path d="M206.5 251.700 l1.700 1.700 l-1.700 1.700 l-1.700 -1.700 z" fill="#000"/>
<path d="M212.5 251.700 l1.500 1.500 V264.6 l-1.500 1.500 l-1.500 -1.500 V253.200 z" fill="#000"/>
<path d="M212.5 251.700 l1.700 1.700 l-1.700 1.700 l-1.700 -1.700 z" fill="#000"/>
<path d="M219.5 251.700 l1.500 1.500 V264.0 l-1.500 1.500 l-1.500 -1.500 V253.200 z" fill="#000"/>
<path d="M219.5 251.700 l1.700 1.700 l-1.700 1.700 l-1.700 -1.700 z" fill="#000"/>
<path d="M225.5 251.700 l1.500 1.500 V258.5 l-1.500 1.500 l-1.500 -1.500 V253.200 z" fill="#000"/>
<path d="M225.5 251.700 l1.700 1.700 l-1.700 1.700 l-1.700 -1.700 z" fill="#000"/>
<path d="M232.5 236.5 l1.500 1.500 V253.500 h-3 V238.0 z" fill="#fff"/>
<path d="M232.5 251.700 l1.700 1.700 l-1.700 1.700 l-1.700 -1.700 z" fill="#000"/>
<path d="M238.5 236.5 l1.500 1.500 V253.500 h-3 V238.0 z" fill="#fff"/>
<path d="M238.5 251.700 l1.700 1.700 l-1.700 1.700 l-1.700 -1.700 z" fill="#000"/>
<path d="M245.5 240.0 l1.500 1.500 V253.500 h-3 V241.5 z" fill="#fff"/>
<path d="M245.5 251.700 l1.700 1.700 l-1.700 1.700 l-1.700 -1.700 z" fill="#000"/>
<path d="M251.5 240.0 l1.500 1.500 V253.500 h-3 V241.5 z" fill="#fff"/>
<path d="M251.5 251.700 l1.700 1.700 l-1.700 1.700 l-1.700 -1.700 z" fill="#000"/>
<path d="M258.5 239.3 l1.500 1.500 V253.500 h-3 V240.8 z" fill="#fff"/>
<path d="M258.5 251.700 l1.700 1.700 l-1.700 1.700 l-1.700 -1.700 z" fill="#000"/>
<path d="M264.5 236.5 l1.500 1.500 V253.500 h-3 V238.0 z" fill="#fff"/>
<path d="M264.5 251.700 l1.700 1.700 l-1.700 1.700 l-1.700 -1.700 z" fill="#000"/>
<path d="M271.5 236.5 l1.500 1.500 V253.500 h-3 V238.0 z" fill="#fff"/>
<path d="M271.5 251.700 l1.700 1.700 l-1.700 1.700 l-1.700 -1.700 z" fill="#000"/>
<path d="M277.5 239.3 l1.500 1.500 V253.500 h-3 V240.8 z" fill="#fff"/>
<path d="M277.5 251.700 l1.700 1.700 l-1.700 1.700 l-1.700 -1.700 z" fill="#000"/>
<path d="M284.5 240.5 l1.500 1.500 V253.500 h-3 V242.0 z" fill="#fff"/>
<path d="M284.5 251.700 l1.700 1.700 l-1.700 1.700 l-1.700 -1.700 z" fill="#000"/>
<path d="M290.5 243.7 l1.500 1.500 V253.500 h-3 V245.2 z" fill="#fff"/>
<path d="M290.5 251.700 l1.700 1.700 l-1.700 1.700 l-1.700 -1.700 z" fill="#000"/>
<path d="M297.5 245.9 l1.500 1.500 V253.500 h-3 V247.4 z" fill="#fff"/>
<path d="M297.5 251.700 l1.700 1.700 l-1.700 1.700 l-1.700 -1.700 z" fill="#000"/>
<path d="M303.5 237.8 l1.500 1.500 V253.500 h-3 V239.3 z" fill="#fff"/>
<path d="M303.5 251.700 l1.700 1.700 l-1.700 1.700 l-1.700 -1.700 z" fill="#000"/>
<path d="M310.5 240.5 l1.500 1.500 V253.500 h-3 V242.0 z" fill="#fff"/>
<path d="M310.5 251.700 l1.700 1.700 l-1.700 1.700 l-1.700 -1.700 z" fill="#000"/>
<path d="M316.5 239.3 l1.500 1.500 V253.500 h-3 V240.8 z" fill="#fff"/>
<path d="M316.5 251.700 l1.700 1.700 l-1.700 1.700 l-1.700 -1.700 z" fill="#000"/>
<path d="M323.5 236.5 l1.500 1.500 V253.500 h-3 V238.0 z" fill="#fff"/>
<path d="M323.5 251.700 l1.700 1.700 l-1.700 1.700 l-1.700 -1.700 z" fill="#000"/>
<path d="M329.5 236.5 l1.500 1.500 V253.500 h-3 V238.0 z" fill="#fff"/>
<path d="M329.5 251.700 l1.700 1.700 l-1.700 1.700 l-1.700 -1.700 z" fill="#000"/>
<path d="M336.5 239.3 l1.500 1.500 V253.500 h-3 V240.8 z" fill="#fff"/>
<path d="M336.5 251.700 l1.700 1.700 l-1.700 1.700 l-1.700 -1.700 z" fill="#000"/>
<path d="M342.5 243.7 l1.500 1.500 V253.500 h-3 V245.2 z" fill="#fff"/>
<path d="M342.5 251.700 l1.700 1.700 l-1.700 1.700 l-1.700 -1.700 z" fill="#000"/>
<path d="M349.5 245.9 l1.500 1.500 V253.500 h-3 V247.4 z" fill="#fff"/>
<path d="M349.5 251.700 l1.700 1.700 l-1.700 1.700 l-1.700 -1.700 z" fill="#000"/>
<path d="M355.5 240.0 l1.500 1.500 V253.500 h-3 V241.5 z" fill="#fff"/>
<path d="M355.5 251.700 l1.700 1.700 l-1.700 1.700 l-1.700 -1.700 z" fill="#000"/>
<path d="M362.5 236.5 l1.500 1.500 V253.500 h-3 V238.0 z" fill="#fff"/>
<path d="M362.5 251.700 l1.700 1.700 l-1.700 1.700 l-1.700 -1.700 z" fill="#000"/>
<path d="M368.5 239.3 l1.500 1.500 V253.500 h-3 V240.8 z" fill="#fff"/>
<path d="M368.5 251.700 l1.700 1.700 l-1.700 1.700 l-1.700 -1.700 z" fill="#000"/>
<path d="M375.5 237.5 l1.500 1.500 V253.500 h-3 V239.0 z" fill="#fff"/>
<path d="M375.5 251.700 l1.700 1.700 l-1.700 1.700 l-1.700 -1.700 z" fill="#000"/>
<path d="M381.5 245.9 l1.500 1.500 V253.500 h-3 V247.4 z" fill="#fff"/>
<path d="M381.5 251.700 l1.700 1.700 l-1.700 1.700 l-1.700 -1.700 z" fill="#000"/>
<path d="M388.5 242.6 l1.500 1.500 V253.500 h-3 V244.1 z" fill="#fff"/>
<path d="M388.5 251.700 l1.700 1.700 l-1.700 1.700 l-1.700 -1.700 z" fill="#000"/>
<path d="M394.5 240.5 l1.500 1.500 V253.500 h-3 V242.0 z" fill="#fff"/>
<path d="M394.5 251.700 l1.700 1.700 l-1.700 1.700 l-1.700 -1.700 z" fill="#000"/>
<path d="M401.5 239.3 l1.500 1.500 V253.500 h-3 V240.8 z" fill="#fff"/>
<path d="M401.5 251.700 l1.700 1.700 l-1.700 1.700 l-1.700 -1.700 z" fill="#000"/>
<path d="M407.5 245.9 l1.500 1.500 V253.500 h-3 V247.4 z" fill="#fff"/>
<path d="M407.5 251.700 l1.700 1.700 l-1.700 1.700 l-1.700 -1.700 z" fill="#000"/>
<path d="M413.5 236.5 l1.500 1.500 V253.500 h-3 V238.0 z" fill="#fff"/>
<path d="M413.5 251.700 l1.700 1.700 l-1.700 1.700 l-1.700 -1.700 z" fill="#000"/>
<path d="M420.5 245.9 l1.500 1.500 V253.500 h-3 V247.4 z" fill="#fff"/>
<path d="M420.5 251.700 l1.700 1.700 l-1.700 1.700 l-1.700 -1.700 z" fill="#000"/>
<path d="M426.5 243.7 l1.500 1.500 V253.500 h-3 V245.2 z" fill="#fff"/>
<path d="M426.5 251.700 l1.700 1.700 l-1.700 1.700 l-1.700 -1.700 z" fill="#000"/>
<path d="M433.5 245.5 l1.500 1.500 V253.500 h-3 V247.0 z" fill="#fff"/>
<path d="M433.5 251.700 l1.700 1.700 l-1.700 1.700 l-1.700 -1.700 z" fill="#000"/>
<path d="M439.5 243.7 l1.500 1.500 V253.500 h-3 V245.2 z" fill="#fff"/>
<path d="M439.5 251.700 l1.700 1.700 l-1.700 1.700 l-1.700 -1.700 z" fill="#000"/>
<path d="M446.5 242.6 l1.500 1.500 V253.500 h-3 V244.1 z" fill="#fff"/>
<path d="M446.5 251.700 l1.700 1.700 l-1.700 1.700 l-1.700 -1.700 z" fill="#000"/>
<path d="M452.5 242.6 l1.500 1.500 V253.500 h-3 V244.1 z" fill="#fff"/>
<path d="M452.5 251.700 l1.700 1.700 l-1.700 1.700 l-1.700 -1.700 z" fill="#000"/>
<path d="M459.5 239.3 l1.500 1.500 V253.500 h-3 V240.8 z" fill="#fff"/>
<path d="M459.5 251.700 l1.700 1.700 l-1.700 1.700 l-1.700 -1.700 z" fill="#000"/>
<path d="M465.5 243.7 l1.500 1.500 V253.500 h-3 V245.2 z" fill="#fff"/>
<path d="M465.5 251.700 l1.700 1.700 l-1.700 1.700 l-1.700 -1.700 z" fill="#000"/>
<path d="M472.5 245.5 l1.500 1.500 V253.500 h-3 V247.0 z" fill="#fff"/>
<path d="M472.5 251.700 l1.700 1.700 l-1.700 1.700 l-1.700 -1.700 z" fill="#000"/>
<path d="M478.5 245.5 l1.500 1.500 V253.500 h-3 V247.0 z" fill="#fff"/>
<path d="M478.5 251.700 l1.700 1.700 l-1.700 1.700 l-1.700 -1.700 z" fill="#000"/>
<path d="M485.5 245.5 l1.500 1.500 V253.500 h-3 V247.0 z" fill="#fff"/>
<path d="M485.5 251.700 l1.700 1.700 l-1.700 1.700 l-1.700 -1.700 z" fill="#000"/>
<path d="M491.5 243.7 l1.500 1.500 V253.500 h-3 V245.2 z" fill="#fff"/>
<path d="M491.5 251.700 l1.700 1.700 l-1.700 1.700 l-1.700 -1.700 z" fill="#000"/>
<path d="M498.5 236.5 l1.500 1.500 V253.500 h-3 V238.0 z" fill="#fff"/>
<path d="M498.5 251.700 l1.700 1.700 l-1.700 1.700 l-1.700 -1.700 z" fill="#000"/>
<path d="M504.5 239.3 l1.500 1.500 V253.500 h-3 V240.8 z" fill="#fff"/>
<path d="M504.5 251.700 l1.700 1.700 l-1.700 1.700 l-1.700 -1.700 z" fill="#000"/>
<path d="M511.5 239.3 l1.500 1.500 V253.500 h-3 V240.8 z" fill="#fff"/>
<path d="M511.5 251.700 l1.700 1.700 l-1.700 1.700 l-1.700 -1.700 z" fill="#000"/>
<path d="M517.5 239.3 l1.500 1.500 V253.500 h-3 V240.8 z" fill="#fff"/>
<path d="M517.5 251.700 l1.700 1.700 l-1.700 1.700 l-1.700 -1.700 z" fill="#000"/>
<path d="M524.5 245.5 l1.500 1.500 V253.500 h-3 V247.0 z" fill="#fff"/>
<path d="M524.5 251.700 l1.700 1.700 l-1.700 1.700 l-1.700 -1.700 z" fill="#000"/>
<path d="M530.5 245.5 l1.500 1.500 V253.500 h-3 V247.0 z" fill="#fff"/>
<path d="M530.5 251.700 l1.700 1.700 l-1.700 1.700 l-1.700 -1.700 z" fill="#000"/>
<path d="M537.5 242.6 l1.500 1.500 V253.500 h-3 V244.1 z" fill="#fff"/>
<path d="M537.5 251.700 l1.700 1.700 l-1.700 1.700 l-1.700 -1.700 z" fill="#000"/>
<path d="M543.5 245.5 l1.500 1.500 V253.500 h-3 V247.0 z" fill="#fff"/>
<path d="M543.5 251.700 l1.700 1.700 l-1.700 1.700 l-1.700 -1.700 z" fill="#000"/>
<path d="M550.5 245.5 l1.500 1.500 V253.500 h-3 V247.0 z" fill="#fff"/>
<path d="M550.5 251.700 l1.700 1.700 l-1.700 1.700 l-1.700 -1.700 z" fill="#000"/>
<path d="M556.5 242.6 l1.500 1.500 V253.500 h-3 V244.1 z" fill="#fff"/>
<path d="M556.5 251.700 l1.700 1.700 l-1.700 1.700 l-1.700 -1.700 z" fill="#000"/>
<path d="M563.5 251.700 l1.500 1.500 V260.7 l-1.500 1.500 l-1.500 -1.500 V253.200 z" fill="#000"/>
<path d="M563.5 251.700 l1.700 1.700 l-1.700 1.700 l-1.700 -1.700 z" fill="#000"/>
<path d="M569.5 251.700 l1.500 1.500 V261.8 l-1.500 1.500 l-1.500 -1.500 V253.200 z" fill="#000"/>
<path d="M569.5 251.700 l1.700 1.700 l-1.700 1.700 l-1.700 -1.700 z" fill="#000"/>
<path d="M576.5 251.700 l1.500 1.500 V264.0 l-1.500 1.500 l-1.500 -1.500 V253.200 z" fill="#000"/>
<path d="M576.5 251.700 l1.700 1.700 l-1.700 1.700 l-1.700 -1.700 z" fill="#000"/>
<path d="M582.5 251.700 l1.500 1.500 V267.9 l-1.500 1.500 l-1.500 -1.500 V253.200 z" fill="#000"/>
<path d="M582.5 251.700 l1.700 1.700 l-1.700 1.700 l-1.700 -1.700 z" fill="#000"/>
<path d="M589.5 251.700 l1.500 1.500 V260.7 l-1.500 1.500 l-1.500 -1.500 V253.200 z" fill="#000"/>
<path d="M589.5 251.700 l1.700 1.700 l-1.700 1.700 l-1.700 -1.700 z" fill="#000"/>
<path d="M595.5 251.700 l1.500 1.500 V260.7 l-1.500 1.500 l-1.500 -1.500 V253.200 z" fill="#000"/>
<path d="M595.5 251.700 l1.700 1.700 l-1.700 1.700 l-1.700 -1.700 z" fill="#000"/>
<path d="M602.5 251.700 l1.500 1.500 V267.9 l-1.500 1.500 l-1.500 -1.500 V253.200 z" fill="#000"/>
<path d="M602.5 251.700 l1.700 1.700 l-1.700 1.700 l-1.700 -1.700 z" fill="#000"/>
<path d="M608.5 251.700 l1.500 1.500 V266.2 l-1.500 1.500 l-1.500 -1.500 V253.200 z" fill="#000"/>
<path d="M608.5 251.700 l1.700 1.700 l-1.700 1.700 l-1.700 -1.700 z" fill="#000"/>
<path d="M615.5 251.700 l1.500 1.500 V265.0 l-1.500 1.500 l-1.500 -1.500 V253.200 z" fill="#000"/>
<path d="M615.5 251.700 l1.700 1.700 l-1.700 1.700 l-1.700 -1.700 z" fill="#000"/>
<path d="M621.5 251.700 l1.500 1.500 V267.9 l-1.500 1.500 l-1.500 -1.500 V253.200 z" fill="#000"/>
<path d="M621.5 251.700 l1.700 1.700 l-1.700 1.700 l-1.700 -1.700 z" fill="#000"/>
<path d="M628.5 251.700 l1.500 1.500 V266.2 l-1.500 1.500 l-1.500 -1.500 V253.200 z" fill="#000"/>
<path d="M628.5 251.700 l1.700 1.700 l-1.700 1.700 l-1.700 -1.700 z" fill="#000"/>
<path d="M634.5 251.700 l1.500 1.500 V264.0 l-1.500 1.500 l-1.500 -1.500 V253.200 z" fill="#000"/>
<path d="M634.5 251.700 l1.700 1.700 l-1.700 1.700 l-1.700 -1.700 z" fill="#000"/>
<path d="M641.5 251.700 l1.500 1.500 V265.0 l-1.500 1.500 l-1.500 -1.500 V253.200 z" fill="#000"/>
<path d="M641.5 251.700 l1.700 1.700 l-1.700 1.700 l-1.700 -1.700 z" fill="#000"/>
<path d="M647.5 251.700 l1.500 1.500 V265.0 l-1.500 1.500 l-1.500 -1.500 V253.200 z" fill="#000"/>
<path d="M647.5 251.700 l1.700 1.700 l-1.700 1.700 l-1.700 -1.700 z" fill="#000"/>
<path d="M654.5 251.700 l1.500 1.500 V267.9 l-1.500 1.500 l-1.500 -1.500 V253.200 z" fill="#000"/>
<path d="M654.5 251.700 l1.700 1.700 l-1.700 1.700 l-1.700 -1.700 z" fill="#000"/>
<path d="M660.5 251.700 l1.500 1.500 V265.0 l-1.500 1.500 l-1.500 -1.500 V253.200 z" fill="#000"/>
<path d="M660.5 251.700 l1.700 1.700 l-1.700 1.700 l-1.700 -1.700 z" fill="#000"/>
<path d="M667.5 251.700 l1.500 1.500 V264.0 l-1.500 1.500 l-1.500 -1.500 V253.200 z" fill="#000"/>
<path d="M667.5 251.700 l1.700 1.700 l-1.700 1.700 l-1.700 -1.700 z" fill="#000"/>
<path d="M673.5 251.700 l1.500 1.500 V267.9 l-1.500 1.500 l-1.500 -1.500 V253.200 z" fill="#000"/>
<path d="M673.5 251.700 l1.700 1.700 l-1.700 1.700 l-1.700 -1.700 z" fill="#000"/>
<path d="M680.5 251.700 l1.500 1.500 V260.7 l-1.500 1.500 l-1.500 -1.500 V253.200 z" fill="#000"/>
<path d="M680.5 251.700 l1.700 1.700 l-1.700 1.700 l-1.700 -1.700 z" fill="#000"/>
<path d="M686.5 251.700 l1.500 1.500 V264.6 l-1.500 1.500 l-1.500 -1.500 V253.200 z" fill="#000"/>
<path d="M686.5 251.700 l1.700 1.700 l-1.700 1.700 l-1.700 -1.700 z" fill="#000"/>
<path d="M693.5 251.700 l1.500 1.500 V264.6 l-1.500 1.500 l-1.500 -1.500 V253.200 z" fill="#000"/>
<path d="M693.5 251.700 l1.700 1.700 l-1.700 1.700 l-1.700 -1.700 z" fill="#000"/>
<path d="M699.5 251.700 l1.500 1.500 V267.9 l-1.500 1.500 l-1.500 -1.500 V253.200 z" fill="#000"/>
<path d="M699.5 251.700 l1.700 1.700 l-1.700 1.700 l-1.700 -1.700 z" fill="#000"/>
<path d="M706.5 251.700 l1.500 1.500 V267.9 l-1.500 1.500 l-1.500 -1.500 V253.200 z" fill="#000"/>
<path d="M706.5 251.700 l1.700 1.700 l-1.700 1.700 l-1.700 -1.700 z" fill="#000"/>
<path d="M712.5 251.700 l1.500 1.500 V266.2 l-1.500 1.500 l-1.500 -1.500 V253.200 z" fill="#000"/>
<path d="M712.5 251.700 l1.700 1.700 l-1.700 1.700 l-1.700 -1.700 z" fill="#000"/>
<path d="M719.5 251.700 l1.500 1.500 V266.2 l-1.500 1.500 l-1.500 -1.500 V253.200 z" fill="#000"/>
<path d="M719.5 251.700 l1.700 1.700 l-1.700 1.700 l-1.700 -1.700 z" fill="#000"/>
<path d="M725.5 251.700 l1.500 1.500 V267.9 l-1.500 1.500 l-1.500 -1.500 V253.200 z" fill="#000"/>
<path d="M725.5 251.700 l1.700 1.700 l-1.700 1.700 l-1.700 -1.700 z" fill="#000"/>
<path d="M732.5 251.700 l1.500 1.500 V261.8 l-1.500 1.500 l-1.500 -1.500 V253.200 z" fill="#000"/>
<path d="M732.5 251.700 l1.700 1.700 l-1.700 1.700 l-1.700 -1.700 z" fill="#000"/>
<path d="M738.5 251.700 l1.500 1.500 V265.0 l-1.500 1.500 l-1.500 -1.500 V253.200 z" fill="#000"/>
<path d="M738.5 251.700 l1.700 1.700 l-1.700 1.700 l-1.700 -1.700 z" fill="#000"/>
<path d="M745.5 251.700 l1.500 1.500 V267.9 l-1.500 1.500 l-1.500 -1.500 V253.200 z" fill="#000"/>
<path d="M745.5 251.700 l1.700 1.700 l-1.700 1.700 l-1.700 -1.700 z" fill="#000"/>
<path d="M751.5 251.700 l1.500 1.500 V267.9 l-1.500 1.500 l-1.500 -1.500 V253.200 z" fill="#000"/>
<path d="M751.5 251.700 l1.700 1.700 l-1.700 1.700 l-1.700 -1.700 z" fill="#000"/>
<path d="M758.5 251.700 l1.500 1.500 V267.9 l-1.500 1.500 l-1.500 -1.500 V253.200 z" fill="#000"/>
<path d="M758.5 251.700 l1.700 1.700 l-1.700 1.700 l-1.700 -1.700 z" fill="#000"/>
<path d="M764.5 251.700 l1.500 1.500 V259.6 l-1.500 1.500 l-1.500 -1.500 V253.200 z" fill="#000"/>
<path d="M764.5 251.700 l1.700 1.700 l-1.700 1.700 l-1.700 -1.700 z" fill="#000"/>
<path d="M771.5 251.700 l1.500 1.500 V257.4 l-1.500 1.500 l-1.500 -1.500 V253.200 z" fill="#000"/>
<path d="M771.5 251.700 l1.700 1.700 l-1.700 1.700 l-1.700 -1.700 z" fill="#000"/>
<path d="M777.5 251.700 l1.500 1.500 V264.0 l-1.500 1.500 l-1.500 -1.500 V253.200 z" fill="#000"/>
<path d="M777.5 251.700 l1.700 1.700 l-1.700 1.700 l-1.700 -1.700 z" fill="#000"/>
<path d="M784.5 251.700 l1.500 1.500 V267.9 l-1.500 1.500 l-1.500 -1.500 V253.200 z" fill="#000"/>
<path d="M784.5 251.700 l1.700 1.700 l-1.700 1.700 l-1.700 -1.700 z" fill="#000"/>
<path d="M790.5 251.700 l1.500 1.500 V258.5 l-1.500 1.500 l-1.500 -1.500 V253.200 z" fill="#000"/>
<path d="M790.5 251.700 l1.700 1.700 l-1.700 1.700 l-1.700 -1.700 z" fill="#000"/>
<path d="M797.5 251.700 l1.500 1.500 V258.5 l-1.500 1.500 l-1.500 -1.500 V253.200 z" fill="#000"/>
<path d="M797.5 251.700 l1.700 1.700 l-1.700 1.700 l-1.700 -1.700 z" fill="#000"/>
<path d="M803.5 251.700 l1.500 1.500 V258.0 l-1.500 1.500 l-1.500 -1.500 V253.200 z" fill="#000"/>
<path d="M803.5 251.700 l1.700 1.700 l-1.700 1.700 l-1.700 -1.700 z" fill="#000"/>
<path d="M810.5 251.700 l1.500 1.500 V262.4 l-1.500 1.500 l-1.500 -1.500 V253.200 z" fill="#000"/>
<path d="M810.5 251.700 l1.700 1.700 l-1.700 1.700 l-1.700 -1.700 z" fill="#000"/>
<path d="M816.5 251.700 l1.500 1.500 V258.5 l-1.500 1.500 l-1.500 -1.500 V253.200 z" fill="#000"/>
<path d="M816.5 251.700 l1.700 1.700 l-1.700 1.700 l-1.700 -1.700 z" fill="#000"/>
<path d="M822.5 251.700 l1.500 1.500 V258.5 l-1.500 1.500 l-1.500 -1.500 V253.200 z" fill="#000"/>
<path d="M822.5 251.700 l1.700 1.700 l-1.700 1.700 l-1.700 -1.700 z" fill="#000"/>
<path d="M829.5 251.700 l1.500 1.500 V265.0 l-1.500 1.500 l-1.500 -1.500 V253.200 z" fill="#000"/>
<path d="M829.5 251.700 l1.700 1.700 l-1.700 1.700 l-1.700 -1.700 z" fill="#000"/>
<path d="M835.5 251.700 l1.500 1.500 V267.9 l-1.500 1.500 l-1.500 -1.500 V253.200 z" fill="#000"/>
<path d="M835.5 251.700 l1.700 1.700 l-1.700 1.700 l-1.700 -1.700 z" fill="#000"/>
<path d="M842.5 251.700 l1.500 1.500 V267.9 l-1.500 1.500 l-1.500 -1.500 V253.200 z" fill="#000"/>
<path d="M842.5 251.700 l1.700 1.700 l-1.700 1.700 l-1.700 -1.700 z" fill="#000"/>
<path d="M848.5 251.700 l1.500 1.500 V258.0 l-1.500 1.500 l-1.500 -1.500 V253.200 z" fill="#000"/>
<path d="M848.5 251.700 l1.700 1.700 l-1.700 1.700 l-1.700 -1.700 z" fill="#000"/>
<path d="M855.5 251.700 l1.500 1.500 V267.9 l-1.500 1.500 l-1.500 -1.500 V253.200 z" fill="#000"/>
<path d="M855.5 251.700 l1.700 1.700 l-1.700 1.700 l-1.700 -1.700 z" fill="#000"/>
<path d="M861.5 251.700 l1.500 1.500 V267.9 l-1.500 1.500 l-1.500 -1.500 V253.200 z" fill="#000"/>
<path d="M861.5 251.700 l1.700 1.700 l-1.700 1.700 l-1.700 -1.700 z" fill="#000"/>
<path d="M868.5 251.700 l1.500 1.500 V264.0 l-1.500 1.500 l-1.500 -1.500 V253.200 z" fill="#000"/>
<path d="M868.5 251.700 l1.700 1.700 l-1.700 1.700 l-1.700 -1.700 z" fill="#000"/>
<path d="M874.5 251.700 l1.500 1.500 V266.2 l-1.500 1.500 l-1.500 -1.500 V253.200 z" fill="#000"/>
<path d="M874.5 251.700 l1.700 1.700 l-1.700 1.700 l-1.700 -1.700 z" fill="#000"/>
<path d="M881.5 251.700 l1.500 1.500 V266.2 l-1.500 1.500 l-1.500 -1.500 V253.200 z" fill="#000"/>
<path d="M881.5 251.700 l1.700 1.700 l-1.700 1.700 l-1.700 -1.700 z" fill="#000"/>
<path d="M887.5 251.700 l1.500 1.500 V264.0 l-1.500 1.500 l-1.500 -1.500 V253.200 z" fill="#000"/>
<path d="M887.5 251.700 l1.700 1.700 l-1.700 1.700 l-1.700 -1.700 z" fill="#000"/>
<path d="M894.5 251.700 l1.500 1.500 V264.0 l-1.500 1.500 l-1.500 -1.500 V253.200 z" fill="#000"/>
<path d="M894.5 251.700 l1.700 1.700 l-1.700 1.700 l-1.700 -1.700 z" fill="#000"/>
<path d="M900.5 251.700 l1.500 1.500 V260.7 l-1.500 1.500 l-1.500 -1.500 V253.200 z" fill="#000"/>
<path d="M900.5 251.700 l1.700 1.700 l-1.700 1.700 l-1.700 -1.700 z" fill="#000"/>
<path d="M907.5 251.700 l1.500 1.500 V267.3 l-1.500 1.500 l-1.500 -1.500 V253.200 z" fill="#000"/>
<path d="M907.5 251.700 l1.700 1.700 l-1.700 1.700 l-1.700 -1.700 z" fill="#000"/>
<path d="M913.5 251.700 l1.500 1.500 V267.9 l-1.500 1.500 l-1.500 -1.500 V253.200 z" fill="#000"/>
<path d="M913.5 251.700 l1.700 1.700 l-1.700 1.700 l-1.700 -1.700 z" fill="#000"/>
<path d="M920.5 251.700 l1.500 1.500 V266.2 l-1.500 1.500 l-1.500 -1.500 V253.200 z" fill="#000"/>
<path d="M920.5 251.700 l1.700 1.700 l-1.700 1.700 l-1.700 -1.700 z" fill="#000"/>
<path d="M926.5 251.700 l1.500 1.500 V265.0 l-1.500 1.500 l-1.500 -1.500 V253.200 z" fill="#000"/>
<path d="M926.5 251.700 l1.700 1.700 l-1.700 1.700 l-1.700 -1.700 z" fill="#000"/>
<path d="M933.5 251.700 l1.500 1.500 V265.0 l-1.500 1.500 l-1.500 -1.500 V253.200 z" fill="#000"/>
<path d="M933.5 251.700 l1.700 1.700 l-1.700 1.700 l-1.700 -1.700 z" fill="#000"/>
<path d="M939.5 251.700 l1.500 1.500 V266.2 l-1.500 1.500 l-1.500 -1.500 V253.200 z" fill="#000"/>
<path d="M939.5 251.700 l1.700 1.700 l-1.700 1.700 l-1.700 -1.700 z" fill="#000"/>
<path d="M946.5 251.700 l1.500 1.500 V266.2 l-1.500 1.500 l-1.500 -1.500 V253.200 z" fill="#000"/>
<path d="M946.5 251.700 l1.700 1.700 l-1.700 1.700 l-1.700 -1.700 z" fill="#000"/>
<path d="M952.5 251.700 l1.500 1.500 V264.6 l-1.500 1.500 l-1.500 -1.500 V253.200 z" fill="#000"/>
<path d="M952.5 251.700 l1.700 1.700 l-1.700 1.700 l-1.700 -1.700 z" fill="#000"/>
<path d="M959.5 251.700 l1.500 1.500 V264.6 l-1.500 1.500 l-1.500 -1.500 V253.200 z" fill="#000"/>
<path d="M959.5 251.700 l1.700 1.700 l-1.700 1.700 l-1.700 -1.700 z" fill="#000"/>
<path d="M965.5 251.700 l1.500 1.500 V267.9 l-1.500 1.500 l-1.500 -1.500 V253.200 z" fill="#000"/>
<path d="M965.5 251.700 l1.700 1.700 l-1.700 1.700 l-1.700 -1.700 z" fill="#000"/>
<path d="M972.5 251.700 l1.500 1.500 V265.0 l-1.500 1.500 l-1.500 -1.500 V253.200 z" fill="#000"/>
<path d="M972.5 251.700 l1.700 1.700 l-1.700 1.700 l-1.700 -1.700 z" fill="#000"/>
<path d="M978.5 251.700 l1.500 1.500 V260.7 l-1.500 1.500 l-1.500 -1.500 V253.200 z" fill="#000"/>
<path d="M978.5 251.700 l1.700 1.700 l-1.700 1.700 l-1.700 -1.700 z" fill="#000"/>
<path d="M985.5 251.700 l1.500 1.500 V259.6 l-1.500 1.500 l-1.500 -1.500 V253.200 z" fill="#000"/>
<path d="M985.5 251.700 l1.700 1.700 l-1.700 1.700 l-1.700 -1.700 z" fill="#000"/>
<path d="M991.5 251.700 l1.500 1.500 V259.6 l-1.500 1.500 l-1.500 -1.500 V253.200 z" fill="#000"/>
<path d="M991.5 251.700 l1.700 1.700 l-1.700 1.700 l-1.700 -1.700 z" fill="#000"/>
<path d="M998.5 251.700 l1.500 1.500 V262.4 l-1.500 1.500 l-1.500 -1.500 V253.200 z" fill="#000"/>
<path d="M998.5 251.700 l1.700 1.700 l-1.700 1.700 l-1.700 -1.700 z" fill="#000"/>
<path d="M1004.5 251.700 l1.500 1.500 V262.4 l-1.500 1.500 l-1.500 -1.500 V253.200 z" fill="#000"/>
<path d="M1004.5 251.700 l1.700 1.700 l-1.700 1.700 l-1.700 -1.700 z" fill="#000"/>
<path d="M1011.5 251.700 l1.500 1.500 V261.8 l-1.500 1.500 l-1.500 -1.500 V253.200 z" fill="#000"/>
<path d="M1011.5 251.700 l1.700 1.700 l-1.700 1.700 l-1.700 -1.700 z" fill="#000"/>
<path d="M1017.5 251.700 l1.500 1.500 V260.7 l-1.500 1.500 l-1.500 -1.500 V253.200 z" fill="#000"/>
<path d="M1017.5 251.700 l1.700 1.700 l-1.700 1.700 l-1.700 -1.700 z" fill="#000"/>
<path d="M1024.5 251.700 l1.500 1.500 V258.5 l-1.500 1.500 l-1.500 -1.500 V253.200 z" fill="#000"/>
<path d="M1024.5 251.700 l1.700 1.700 l-1.700 1.700 l-1.700 -1.700 z" fill="#000"/>
<path d="M1030.5 251.700 l1.500 1.500 V262.4 l-1.500 1.500 l-1.500 -1.500 V253.200 z" fill="#000"/>
<path d="M1030.5 251.700 l1.700 1.700 l-1.700 1.700 l-1.700 -1.700 z" fill="#000"/>
<path d="M1037.5 251.700 l1.500 1.500 V262.4 l-1.500 1.500 l-1.500 -1.500 V253.200 z" fill="#000"/>
<path d="M1037.5 251.700 l1.700 1.700 l-1.700 1.700 l-1.700 -1.700 z" fill="#000"/>
<path d="M1043.5 251.700 l1.500 1.500 V258.5 l-1.500 1.500 l-1.500 -1.500 V253.200 z" fill="#000"/>
<path d="M1043.5 251.700 l1.700 1.700 l-1.700 1.700 l-1.700 -1.700 z" fill="#000"/>
<path d="M1050.5 251.700 l1.500 1.500 V257.8 l-1.500 1.500 l-1.500 -1.500 V253.200 z" fill="#000"/>
<path d="M1050.5 251.700 l1.700 1.700 l-1.700 1.700 l-1.700 -1.700 z" fill="#000"/>
<path d="M1056.5 251.700 l1.500 1.500 v2 l-1.500 1.500 l-1.500 -1.500 v-2 z" fill="#000"/>
<path d="M1056.5 251.700 l1.700 1.700 l-1.700 1.700 l-1.700 -1.700 z" fill="#000"/>
<path d="M1063.5 251.700 l1.500 1.500 v2 l-1.500 1.500 l-1.500 -1.500 v-2 z" fill="#000"/>
<path d="M1063.5 251.700 l1.700 1.700 l-1.700 1.700 l-1.700 -1.700 z" fill="#000"/>
<path d="M1069.5 243.7 l1.500 1.500 V253.500 h-3 V245.2 z" fill="#fff"/>
<path d="M1069.5 251.700 l1.700 1.700 l-1.700 1.700 l-1.700 -1.700 z" fill="#000"/>
<path d="M1076.5 246.3 l1.500 1.500 V253.500 h-3 V247.8 z" fill="#fff"/>
<path d="M1076.5 251.700 l1.700 1.700 l-1.700 1.700 l-1.700 -1.700 z" fill="#000"/>
<path d="M1082.5 251.700 l1.500 1.500 V265.0 l-1.500 1.500 l-1.500 -1.500 V253.200 z" fill="#000"/>
<path d="M1082.5 251.700 l1.700 1.700 l-1.700 1.700 l-1.700 -1.700 z" fill="#000"/>
<path d="M1089.5 251.700 l1.500 1.500 V264.0 l-1.500 1.500 l-1.500 -1.500 V253.200 z" fill="#000"/>
<path d="M1089.5 251.700 l1.700 1.700 l-1.700 1.700 l-1.700 -1.700 z" fill="#000"/>
<path d="M1095.5 251.700 l1.500 1.500 V259.0 l-1.500 1.500 l-1.500 -1.500 V253.200 z" fill="#000"/>
<path d="M1095.5 251.700 l1.700 1.700 l-1.700 1.700 l-1.700 -1.700 z" fill="#000"/>
<path d="M1102.5 251.700 l1.500 1.500 V259.0 l-1.500 1.500 l-1.500 -1.500 V253.200 z" fill="#000"/>
<path d="M1102.5 251.700 l1.700 1.700 l-1.700 1.700 l-1.700 -1.700 z" fill="#000"/>
<path d="M1108.5 251.700 l1.500 1.500 V259.0 l-1.500 1.500 l-1.500 -1.500 V253.200 z" fill="#000"/>
<path d="M1108.5 251.700 l1.700 1.700 l-1.700 1.700 l-1.700 -1.700 z" fill="#000"/>
<path d="M1115.5 251.700 l1.500 1.500 v2 l-1.500 1.500 l-1.500 -1.500 v-2 z" fill="#000"/>
<path d="M1115.5 251.700 l1.700 1.700 l-1.700 1.700 l-1.700 -1.700 z" fill="#000"/>
<path d="M1121.5 245.9 l1.500 1.500 V253.500 h-3 V247.4 z" fill="#fff"/>
<path d="M1121.5 251.700 l1.700 1.700 l-1.700 1.700 l-1.700 -1.700 z" fill="#000"/>
<path d="M1128.5 240.0 l1.500 1.500 V253.500 h-3 V241.5 z" fill="#fff"/>
<path d="M1128.5 251.700 l1.700 1.700 l-1.700 1.700 l-1.700 -1.700 z" fill="#000"/>
<path d="M1134.5 242.6 l1.500 1.500 V253.500 h-3 V244.1 z" fill="#fff"/>
<path d="M1134.5 251.700 l1.700 1.700 l-1.700 1.700 l-1.700 -1.700 z" fill="#000"/>
<path d="M1141.5 240.0 l1.500 1.500 V253.500 h-3 V241.5 z" fill="#fff"/>
<path d="M1141.5 251.700 l1.700 1.700 l-1.700 1.700 l-1.700 -1.700 z" fill="#000"/>
<path d="M1147.5 240.0 l1.500 1.500 V253.500 h-3 V241.5 z" fill="#fff"/>
<path d="M1147.5 251.700 l1.700 1.700 l-1.700 1.700 l-1.700 -1.700 z" fill="#000"/>
<path d="M1154.5 240.0 l1.500 1.500 V253.500 h-3 V241.5 z" fill="#fff"/>
<path d="M1154.5 251.700 l1.700 1.700 l-1.700 1.700 l-1.700 -1.700 z" fill="#000"/>
<path d="M1160.5 240.5 l1.500 1.500 V253.500 h-3 V242.0 z" fill="#fff"/>
<path d="M1160.5 251.700 l1.700 1.700 l-1.700 1.700 l-1.700 -1.700 z" fill="#000"/>
<path d="M1167.5 243.7 l1.500 1.500 V253.500 h-3 V245.2 z" fill="#fff"/>
<path d="M1167.5 251.700 l1.700 1.700 l-1.700 1.700 l-1.700 -1.700 z" fill="#000"/>
<path d="M1173.5 251.700 l1.500 1.500 V259.0 l-1.500 1.500 l-1.500 -1.500 V253.200 z" fill="#000"/>
<path d="M1173.5 251.700 l1.700 1.700 l-1.700 1.700 l-1.700 -1.700 z" fill="#000"/>
<path d="M1180.5 242.6 l1.500 1.500 V253.500 h-3 V244.1 z" fill="#fff"/>
<path d="M1180.5 251.700 l1.700 1.700 l-1.700 1.700 l-1.700 -1.700 z" fill="#000"/>
<path d="M1186.5 251.700 l1.500 1.500 v2 l-1.500 1.500 l-1.500 -1.500 v-2 z" fill="#000"/>
<path d="M1186.5 251.700 l1.700 1.700 l-1.700 1.700 l-1.700 -1.700 z" fill="#000"/>
<path d="M1193.5 251.700 l1.500 1.500 V261.8 l-1.500 1.500 l-1.500 -1.500 V253.200 z" fill="#000"/>
<path d="M1193.5 251.700 l1.700 1.700 l-1.700 1.700 l-1.700 -1.700 z" fill="#000"/>
<path d="M1199.5 251.700 l1.500 1.500 V264.6 l-1.500 1.500 l-1.500 -1.500 V253.200 z" fill="#000"/>
<path d="M1199.5 251.700 l1.700 1.700 l-1.700 1.700 l-1.700 -1.700 z" fill="#000"/>
<path d="M1206.5 251.700 l1.500 1.500 V264.6 l-1.500 1.500 l-1.500 -1.500 V253.200 z" fill="#000"/>
<path d="M1206.5 251.700 l1.700 1.700 l-1.700 1.700 l-1.700 -1.700 z" fill="#000"/>
<path d="M1212.5 251.700 l1.500 1.500 V261.8 l-1.500 1.500 l-1.500 -1.500 V253.200 z" fill="#000"/>
<path d="M1212.5 251.700 l1.700 1.700 l-1.700 1.700 l-1.700 -1.700 z" fill="#000"/>
<path d="M1219.5 251.700 l1.500 1.500 V261.8 l-1.500 1.500 l-1.500 -1.500 V253.200 z" fill="#000"/>
<path d="M1219.5 251.700 l1.700 1.700 l-1.700 1.700 l-1.700 -1.700 z" fill="#000"/>
<path d="M1225.5 251.700 l1.500 1.500 V259.0 l-1.500 1.500 l-1.500 -1.500 V253.200 z" fill="#000"/>
<path d="M1225.5 251.700 l1.700 1.700 l-1.700 1.700 l-1.700 -1.700 z" fill="#000"/>
<path d="M1231.5 251.700 l1.500 1.500 v2 l-1.500 1.500 l-1.500 -1.500 v-2 z" fill="#000"/>
<path d="M1231.5 251.700 l1.700 1.700 l-1.700 1.700 l-1.700 -1.700 z" fill="#000"/>
<path d="M1238.5 248.5 l1.500 1.500 V253.500 h-3 V250.0 z" fill="#fff"/>
<path d="M1238.5 251.700 l1.700 1.700 l-1.700 1.700 l-1.700 -1.700 z" fill="#000"/>
<g shape-rendering="crispEdges">
<line x1="89.5" y1="379.0" x2="89.5" y2="384.8" stroke="#dcdcdc" stroke-width="1"/>
<rect x="87.5" y="381.5" width="4" height="3.0" fill="#282828" stroke="#dcdcdc" stroke-width="1"/>
<line x1="95.5" y1="372.3" x2="95.5" y2="383.8" stroke="#dcdcdc" stroke-width="1"/>
<rect x="93.5" y="372.5" width="4" height="11.0" fill="#282828" stroke="#dcdcdc" stroke-width="1"/>
<line x1="102.5" y1="368.0" x2="102.5" y2="372.7" stroke="#dcdcdc" stroke-width="1"/>
<rect x="100.5" y="368.5" width="4" height="4.0" fill="#282828" stroke="#dcdcdc" stroke-width="1"/>
<line x1="108.5" y1="356.8" x2="108.5" y2="369.8" stroke="#dcdcdc" stroke-width="1"/>
<rect x="106.5" y="361.5" width="4" height="8.0" fill="#282828" stroke="#dcdcdc" stroke-width="1"/>
<line x1="115.5" y1="358.4" x2="115.5" y2="364.8" stroke="#7d9dcb" stroke-width="1"/>
<rect x="113" y="359.9" width="5" height="3.1" fill="#7d9dcb"/>
<line x1="121.5" y1="354.0" x2="121.5" y2="361.7" stroke="#dcdcdc" stroke-width="1"/>
<rect x="119.5" y="354.5" width="4" height="5.0" fill="#282828" stroke="#dcdcdc" stroke-width="1"/>
<line x1="128.5" y1="353.0" x2="128.5" y2="356.8" stroke="#7d9dcb" stroke-width="1"/>
<rect x="126" y="354.0" width="5" height="2.1" fill="#7d9dcb"/>
<line x1="134.5" y1="355.0" x2="134.5" y2="369.8" stroke="#7d9dcb" stroke-width="1"/>
<rect x="132" y="355.8" width="5" height="14.0" fill="#7d9dcb"/>
<line x1="141.5" y1="367.0" x2="141.5" y2="387.0" stroke="#7d9dcb" stroke-width="1"/>
<rect x="139" y="369.8" width="5" height="17.2" fill="#7d9dcb"/>
<line x1="147.5" y1="372.9" x2="147.5" y2="392.8" stroke="#dcdcdc" stroke-width="1"/>
<rect x="145.5" y="375.5" width="4" height="9.0" fill="#282828" stroke="#dcdcdc" stroke-width="1"/>
<line x1="154.5" y1="372.0" x2="154.5" y2="382.9" stroke="#7d9dcb" stroke-width="1"/>
<rect x="152" y="373.2" width="5" height="9.7" fill="#7d9dcb"/>
<line x1="160.5" y1="378.2" x2="160.5" y2="391.9" stroke="#7d9dcb" stroke-width="1"/>
<rect x="158" y="378.2" width="5" height="12.8" fill="#7d9dcb"/>
<line x1="167.5" y1="386.6" x2="167.5" y2="391.0" stroke="#dcdcdc" stroke-width="1"/>
<rect x="165" y="387.6" width="5" height="1.2" fill="#dcdcdc"/>
<line x1="173.5" y1="387.9" x2="173.5" y2="391.9" stroke="#7d9dcb" stroke-width="1"/>
<rect x="171" y="387.9" width="5" height="1.8" fill="#7d9dcb"/>
<line x1="180.5" y1="384.8" x2="180.5" y2="391.9" stroke="#dcdcdc" stroke-width="1"/>
<rect x="178.5" y="388.5" width="4" height="3.0" fill="#282828" stroke="#dcdcdc" stroke-width="1"/>
<line x1="186.5" y1="381.0" x2="186.5" y2="386.0" stroke="#dcdcdc" stroke-width="1"/>
<rect x="184.5" y="381.5" width="4" height="3.0" fill="#282828" stroke="#dcdcdc" stroke-width="1"/>
<line x1="193.5" y1="379.2" x2="193.5" y2="384.8" stroke="#dcdcdc" stroke-width="1"/>
<rect x="191.5" y="381.5" width="4" height="3.0" fill="#282828" stroke="#dcdcdc" stroke-width="1"/>
<line x1="199.5" y1="368.0" x2="199.5" y2="381.0" stroke="#dcdcdc" stroke-width="1"/>
<rect x="197.5" y="376.5" width="4" height="2.0" fill="#282828" stroke="#dcdcdc" stroke-width="1"/>
<line x1="206.5" y1="375.0" x2="206.5" y2="385.8" stroke="#7d9dcb" stroke-width="1"/>
<rect x="204" y="375.0" width="5" height="10.8" fill="#7d9dcb"/>
<line x1="212.5" y1="385.0" x2="212.5" y2="393.5" stroke="#7d9dcb" stroke-width="1"/>
<rect x="210" y="385.0" width="5" height="6.0" fill="#7d9dcb"/>
<line x1="219.5" y1="389.1" x2="219.5" y2="391.9" stroke="#dcdcdc" stroke-width="1"/>
<rect x="217.5" y="389.5" width="4" height="2.0" fill="#282828" stroke="#dcdcdc" stroke-width="1"/>
<line x1="225.5" y1="384.1" x2="225.5" y2="392.9" stroke="#dcdcdc" stroke-width="1"/>
<rect x="223.5" y="384.5" width="4" height="7.0" fill="#282828" stroke="#dcdcdc" stroke-width="1"/>
<line x1="232.5" y1="376.0" x2="232.5" y2="388.7" stroke="#dcdcdc" stroke-width="1"/>
<rect x="230.5" y="378.5" width="4" height="10.0" fill="#282828" stroke="#dcdcdc" stroke-width="1"/>
<line x1="238.5" y1="361.1" x2="238.5" y2="379.8" stroke="#dcdcdc" stroke-width="1"/>
<rect x="236.5" y="361.5" width="4" height="18.0" fill="#282828" stroke="#dcdcdc" stroke-width="1"/>
<line x1="245.5" y1="356.8" x2="245.5" y2="364.8" stroke="#7d9dcb" stroke-width="1"/>
<rect x="243" y="361.7" width="5" height="3.1" fill="#7d9dcb"/>
<line x1="251.5" y1="357.0" x2="251.5" y2="367.9" stroke="#7d9dcb" stroke-width="1"/>
<rect x="249" y="361.0" width="5" height="5.8" fill="#7d9dcb"/>
<line x1="258.5" y1="361.0" x2="258.5" y2="371.0" stroke="#dcdcdc" stroke-width="1"/>
<rect x="256" y="363.2" width="5" height="1.2" fill="#dcdcdc"/>
<line x1="264.5" y1="355.4" x2="264.5" y2="362.9" stroke="#dcdcdc" stroke-width="1"/>
<rect x="262.5" y="355.5" width="4" height="6.0" fill="#282828" stroke="#dcdcdc" stroke-width="1"/>
<line x1="271.5" y1="348.3" x2="271.5" y2="356.7" stroke="#dcdcdc" stroke-width="1"/>
<rect x="269.5" y="348.5" width="4" height="5.0" fill="#282828" stroke="#dcdcdc" stroke-width="1"/>
<line x1="277.5" y1="346.0" x2="277.5" y2="350.7" stroke="#7d9dcb" stroke-width="1"/>
<rect x="275" y="348.0" width="5" height="2.7" fill="#7d9dcb"/>
<line x1="284.5" y1="345.2" x2="284.5" y2="354.4" stroke="#7d9dcb" stroke-width="1"/>
<rect x="282" y="347.0" width="5" height="6.0" fill="#7d9dcb"/>
<line x1="290.5" y1="348.0" x2="290.5" y2="357.0" stroke="#7d9dcb" stroke-width="1"/>
<rect x="288" y="354.2" width="5" height="2.8" fill="#7d9dcb"/>
<line x1="297.5" y1="352.0" x2="297.5" y2="357.0" stroke="#7d9dcb" stroke-width="1"/>
<rect x="295" y="352.0" width="5" height="5.0" fill="#7d9dcb"/>
<line x1="303.5" y1="346.0" x2="303.5" y2="356.7" stroke="#dcdcdc" stroke-width="1"/>
<rect x="301.5" y="346.5" width="4" height="7.0" fill="#282828" stroke="#dcdcdc" stroke-width="1"/>
<line x1="310.5" y1="346.0" x2="310.5" y2="351.7" stroke="#7d9dcb" stroke-width="1"/>
<rect x="308" y="346.0" width="5" height="3.8" fill="#7d9dcb"/>
<line x1="316.5" y1="349.8" x2="316.5" y2="352.0" stroke="#7d9dcb" stroke-width="1"/>
<rect x="314" y="349.8" width="5" height="2.2" fill="#7d9dcb"/>
<line x1="323.5" y1="348.0" x2="323.5" y2="351.0" stroke="#dcdcdc" stroke-width="1"/>
<rect x="321.5" y="348.5" width="4" height="2.0" fill="#282828" stroke="#dcdcdc" stroke-width="1"/>
<line x1="329.5" y1="348.0" x2="329.5" y2="354.8" stroke="#dcdcdc" stroke-width="1"/>
<rect x="327.5" y="348.5" width="4" height="2.0" fill="#282828" stroke="#dcdcdc" stroke-width="1"/>
<rect x="334" y="347.4" width="5" height="1.2" fill="#dcdcdc"/>
<line x1="342.5" y1="347.0" x2="342.5" y2="353.6" stroke="#7d9dcb" stroke-width="1"/>
<rect x="340" y="347.0" width="5" height="6.6" fill="#7d9dcb"/>
<line x1="349.5" y1="350.0" x2="349.5" y2="356.0" stroke="#7d9dcb" stroke-width="1"/>
<rect x="347" y="350.0" width="5" height="3.6" fill="#7d9dcb"/>
<line x1="355.5" y1="347.3" x2="355.5" y2="354.8" stroke="#dcdcdc" stroke-width="1"/>
<rect x="353.5" y="347.5" width="4" height="7.0" fill="#282828" stroke="#dcdcdc" stroke-width="1"/>
<line x1="362.5" y1="336.1" x2="362.5" y2="346.7" stroke="#dcdcdc" stroke-width="1"/>
<rect x="360.5" y="336.5" width="4" height="10.0" fill="#282828" stroke="#dcdcdc" stroke-width="1"/>
<line x1="368.5" y1="329.3" x2="368.5" y2="337.1" stroke="#7d9dcb" stroke-width="1"/>
<rect x="366" y="334.0" width="5" height="3.1" fill="#7d9dcb"/>
<line x1="375.5" y1="331.2" x2="375.5" y2="336.8" stroke="#dcdcdc" stroke-width="1"/>
<rect x="373.5" y="331.5" width="4" height="5.0" fill="#282828" stroke="#dcdcdc" stroke-width="1"/>
<line x1="381.5" y1="332.8" x2="381.5" y2="340.5" stroke="#7d9dcb" stroke-width="1"/>
<rect x="379" y="332.8" width="5" height="6.4" fill="#7d9dcb"/>
<line x1="388.5" y1="334.3" x2="388.5" y2="343.0" stroke="#dcdcdc" stroke-width="1"/>
<rect x="386.5" y="336.5" width="4" height="3.0" fill="#282828" stroke="#dcdcdc" stroke-width="1"/>
<line x1="394.5" y1="331.2" x2="394.5" y2="337.6" stroke="#dcdcdc" stroke-width="1"/>
<rect x="392.5" y="333.5" width="4" height="2.0" fill="#282828" stroke="#dcdcdc" stroke-width="1"/>
<line x1="401.5" y1="333.0" x2="401.5" y2="340.5" stroke="#7d9dcb" stroke-width="1"/>
<rect x="399" y="333.0" width="5" height="1.9" fill="#7d9dcb"/>
<line x1="407.5" y1="333.0" x2="407.5" y2="352.9" stroke="#7d9dcb" stroke-width="1"/>
<rect x="405" y="333.0" width="5" height="7.5" fill="#7d9dcb"/>
<line x1="414.5" y1="338.4" x2="414.5" y2="344.8" stroke="#dcdcdc" stroke-width="1"/>
<rect x="412.5" y="338.5" width="4" height="1.0" fill="#282828" stroke="#dcdcdc" stroke-width="1"/>
<line x1="420.5" y1="337.3" x2="420.5" y2="343.6" stroke="#dcdcdc" stroke-width="1"/>
<rect x="418" y="339.2" width="5" height="1.2" fill="#dcdcdc"/>
<line x1="426.5" y1="336.7" x2="426.5" y2="342.3" stroke="#dcdcdc" stroke-width="1"/>
<rect x="424.5" y="338.5" width="4" height="3.0" fill="#282828" stroke="#dcdcdc" stroke-width="1"/>
<line x1="433.5" y1="339.2" x2="433.5" y2="349.2" stroke="#7d9dcb" stroke-width="1"/>
<rect x="431" y="339.2" width="5" height="10.0" fill="#7d9dcb"/>
<line x1="439.5" y1="349.2" x2="439.5" y2="352.3" stroke="#7d9dcb" stroke-width="1"/>
<rect x="437" y="349.2" width="5" height="1.8" fill="#7d9dcb"/>
<line x1="446.5" y1="345.4" x2="446.5" y2="350.8" stroke="#dcdcdc" stroke-width="1"/>
<rect x="444.5" y="347.5" width="4" height="3.0" fill="#282828" stroke="#dcdcdc" stroke-width="1"/>
<line x1="452.5" y1="344.8" x2="452.5" y2="349.2" stroke="#dcdcdc" stroke-width="1"/>
<rect x="450" y="345.2" width="5" height="1.2" fill="#dcdcdc"/>
<line x1="459.5" y1="343.6" x2="459.5" y2="351.6" stroke="#dcdcdc" stroke-width="1"/>
<rect x="457" y="344.0" width="5" height="1.2" fill="#dcdcdc"/>
<line x1="465.5" y1="344.8" x2="465.5" y2="347.9" stroke="#dcdcdc" stroke-width="1"/>
<rect x="463.5" y="345.5" width="4" height="2.0" fill="#282828" stroke="#dcdcdc" stroke-width="1"/>
<line x1="472.5" y1="344.8" x2="472.5" y2="349.8" stroke="#7d9dcb" stroke-width="1"/>
<rect x="470" y="344.8" width="5" height="1.5" fill="#7d9dcb"/>
<line x1="478.5" y1="345.0" x2="478.5" y2="349.8" stroke="#7d9dcb" stroke-width="1"/>
<rect x="476" y="347.9" width="5" height="1.9" fill="#7d9dcb"/>
<line x1="485.5" y1="344.2" x2="485.5" y2="346.7" stroke="#dcdcdc" stroke-width="1"/>
<rect x="483" y="344.2" width="5" height="2.5" fill="#dcdcdc"/>
<line x1="491.5" y1="346.0" x2="491.5" y2="351.6" stroke="#7d9dcb" stroke-width="1"/>
<rect x="489" y="347.9" width="5" height="1.9" fill="#7d9dcb"/>
<line x1="498.5" y1="333.4" x2="498.5" y2="351.6" stroke="#dcdcdc" stroke-width="1"/>
<rect x="496.5" y="333.5" width="4" height="17.0" fill="#282828" stroke="#dcdcdc" stroke-width="1"/>
<line x1="504.5" y1="333.0" x2="504.5" y2="337.7" stroke="#7d9dcb" stroke-width="1"/>
<rect x="502" y="333.0" width="5" height="4.7" fill="#7d9dcb"/>
<line x1="511.5" y1="333.4" x2="511.5" y2="338.6" stroke="#dcdcdc" stroke-width="1"/>
<rect x="509.5" y="335.5" width="4" height="2.0" fill="#282828" stroke="#dcdcdc" stroke-width="1"/>
<line x1="517.5" y1="328.6" x2="517.5" y2="334.0" stroke="#dcdcdc" stroke-width="1"/>
<rect x="515" y="332.1" width="5" height="1.9" fill="#dcdcdc"/>
<line x1="524.5" y1="330.0" x2="524.5" y2="337.0" stroke="#7d9dcb" stroke-width="1"/>
<rect x="522" y="330.9" width="5" height="6.1" fill="#7d9dcb"/>
<line x1="530.5" y1="336.0" x2="530.5" y2="339.6" stroke="#7d9dcb" stroke-width="1"/>
<rect x="528" y="337.0" width="5" height="2.6" fill="#7d9dcb"/>
<line x1="537.5" y1="331.1" x2="537.5" y2="339.8" stroke="#dcdcdc" stroke-width="1"/>
<rect x="535.5" y="334.5" width="4" height="5.0" fill="#282828" stroke="#dcdcdc" stroke-width="1"/>
<line x1="543.5" y1="323.0" x2="543.5" y2="335.2" stroke="#7d9dcb" stroke-width="1"/>
<rect x="541" y="329.2" width="5" height="6.0" fill="#7d9dcb"/>
<line x1="550.5" y1="329.0" x2="550.5" y2="334.8" stroke="#7d9dcb" stroke-width="1"/>
<rect x="548" y="329.9" width="5" height="4.9" fill="#7d9dcb"/>
<line x1="556.5" y1="336.0" x2="556.5" y2="342.3" stroke="#7d9dcb" stroke-width="1"/>
<rect x="554" y="336.0" width="5" height="1.5" fill="#7d9dcb"/>
<line x1="563.5" y1="332.0" x2="563.5" y2="341.7" stroke="#7d9dcb" stroke-width="1"/>
<rect x="561" y="338.0" width="5" height="2.0" fill="#7d9dcb"/>
<line x1="569.5" y1="338.3" x2="569.5" y2="341.0" stroke="#7d9dcb" stroke-width="1"/>
<rect x="567" y="338.3" width="5" height="2.7" fill="#7d9dcb"/>
<line x1="576.5" y1="339.9" x2="576.5" y2="344.9" stroke="#7d9dcb" stroke-width="1"/>
<rect x="574" y="341.8" width="5" height="3.1" fill="#7d9dcb"/>
<line x1="582.5" y1="343.0" x2="582.5" y2="349.9" stroke="#7d9dcb" stroke-width="1"/>
<rect x="580" y="344.9" width="5" height="5.0" fill="#7d9dcb"/>
<line x1="589.5" y1="345.5" x2="589.5" y2="353.0" stroke="#dcdcdc" stroke-width="1"/>
<rect x="587.5" y="346.5" width="4" height="2.0" fill="#282828" stroke="#dcdcdc" stroke-width="1"/>
<line x1="595.5" y1="343.6" x2="595.5" y2="346.8" stroke="#7d9dcb" stroke-width="1"/>
<rect x="593" y="344.6" width="5" height="1.5" fill="#7d9dcb"/>
<line x1="602.5" y1="344.0" x2="602.5" y2="350.5" stroke="#7d9dcb" stroke-width="1"/>
<rect x="600" y="346.1" width="5" height="4.4" fill="#7d9dcb"/>
<line x1="608.5" y1="349.2" x2="608.5" y2="352.6" stroke="#7d9dcb" stroke-width="1"/>
<rect x="606" y="349.2" width="5" height="1.5" fill="#7d9dcb"/>
<line x1="615.5" y1="347.1" x2="615.5" y2="350.5" stroke="#dcdcdc" stroke-width="1"/>
<rect x="613.5" y="347.5" width="4" height="2.0" fill="#282828" stroke="#dcdcdc" stroke-width="1"/>
<line x1="621.5" y1="349.2" x2="621.5" y2="358.0" stroke="#7d9dcb" stroke-width="1"/>
<rect x="619" y="349.2" width="5" height="8.8" fill="#7d9dcb"/>
<line x1="628.5" y1="357.1" x2="628.5" y2="364.8" stroke="#7d9dcb" stroke-width="1"/>
<rect x="626" y="357.1" width="5" height="4.0" fill="#7d9dcb"/>
<line x1="634.5" y1="353.0" x2="634.5" y2="358.6" stroke="#dcdcdc" stroke-width="1"/>
<rect x="632" y="358.0" width="5" height="1.2" fill="#dcdcdc"/>
<line x1="641.5" y1="355.5" x2="641.5" y2="359.8" stroke="#dcdcdc" stroke-width="1"/>
<rect x="639.5" y="358.5" width="4" height="1.0" fill="#282828" stroke="#dcdcdc" stroke-width="1"/>
<line x1="647.5" y1="349.9" x2="647.5" y2="358.6" stroke="#dcdcdc" stroke-width="1"/>
<rect x="645" y="354.8" width="5" height="2.3" fill="#dcdcdc"/>
<line x1="654.5" y1="353.9" x2="654.5" y2="364.8" stroke="#7d9dcb" stroke-width="1"/>
<rect x="652" y="357.1" width="5" height="7.7" fill="#7d9dcb"/>
<line x1="660.5" y1="363.3" x2="660.5" y2="367.9" stroke="#7d9dcb" stroke-width="1"/>
<rect x="658" y="363.3" width="5" height="1.7" fill="#7d9dcb"/>
<line x1="667.5" y1="359.8" x2="667.5" y2="367.0" stroke="#dcdcdc" stroke-width="1"/>
<rect x="665" y="360.8" width="5" height="2.1" fill="#dcdcdc"/>
<line x1="673.5" y1="358.3" x2="673.5" y2="367.9" stroke="#7d9dcb" stroke-width="1"/>
<rect x="671" y="358.3" width="5" height="7.7" fill="#7d9dcb"/>
<line x1="680.5" y1="362.3" x2="680.5" y2="372.0" stroke="#dcdcdc" stroke-width="1"/>
<rect x="678" y="363.0" width="5" height="1.2" fill="#dcdcdc"/>
<line x1="686.5" y1="362.3" x2="686.5" y2="367.9" stroke="#7d9dcb" stroke-width="1"/>
<rect x="684" y="362.3" width="5" height="3.5" fill="#7d9dcb"/>
<line x1="693.5" y1="364.8" x2="693.5" y2="369.2" stroke="#7d9dcb" stroke-width="1"/>
<rect x="691" y="366.0" width="5" height="1.5" fill="#7d9dcb"/>
<line x1="699.5" y1="367.9" x2="699.5" y2="373.3" stroke="#7d9dcb" stroke-width="1"/>
<rect x="697" y="370.2" width="5" height="3.1" fill="#7d9dcb"/>
<line x1="706.5" y1="370.2" x2="706.5" y2="375.4" stroke="#7d9dcb" stroke-width="1"/>
<rect x="704" y="370.2" width="5" height="5.2" fill="#7d9dcb"/>
<line x1="712.5" y1="376.0" x2="712.5" y2="384.1" stroke="#7d9dcb" stroke-width="1"/>
<rect x="710" y="377.9" width="5" height="6.2" fill="#7d9dcb"/>
<line x1="719.5" y1="375.0" x2="719.5" y2="383.8" stroke="#dcdcdc" stroke-width="1"/>
<rect x="717.5" y="380.5" width="4" height="3.0" fill="#282828" stroke="#dcdcdc" stroke-width="1"/>
<line x1="725.5" y1="381.9" x2="725.5" y2="391.0" stroke="#7d9dcb" stroke-width="1"/>
<rect x="723" y="384.1" width="5" height="5.0" fill="#7d9dcb"/>
<line x1="732.5" y1="377.9" x2="732.5" y2="389.1" stroke="#dcdcdc" stroke-width="1"/>
<rect x="730.5" y="380.5" width="4" height="4.0" fill="#282828" stroke="#dcdcdc" stroke-width="1"/>
<line x1="738.5" y1="374.8" x2="738.5" y2="382.6" stroke="#7d9dcb" stroke-width="1"/>
<rect x="736" y="378.2" width="5" height="4.4" fill="#7d9dcb"/>
<line x1="745.5" y1="378.2" x2="745.5" y2="391.8" stroke="#7d9dcb" stroke-width="1"/>
<rect x="743" y="380.0" width="5" height="8.2" fill="#7d9dcb"/>
<line x1="751.5" y1="381.0" x2="751.5" y2="389.6" stroke="#7d9dcb" stroke-width="1"/>
<rect x="749" y="381.0" width="5" height="8.6" fill="#7d9dcb"/>
<line x1="758.5" y1="384.6" x2="758.5" y2="394.6" stroke="#7d9dcb" stroke-width="1"/>
<rect x="756" y="386.0" width="5" height="8.6" fill="#7d9dcb"/>
<line x1="764.5" y1="382.9" x2="764.5" y2="395.8" stroke="#dcdcdc" stroke-width="1"/>
<rect x="762.5" y="385.5" width="4" height="10.0" fill="#282828" stroke="#dcdcdc" stroke-width="1"/>
<line x1="771.5" y1="380.3" x2="771.5" y2="388.9" stroke="#dcdcdc" stroke-width="1"/>
<rect x="769" y="382.6" width="5" height="1.2" fill="#dcdcdc"/>
<line x1="777.5" y1="379.0" x2="777.5" y2="391.0" stroke="#7d9dcb" stroke-width="1"/>
<rect x="775" y="380.0" width="5" height="8.6" fill="#7d9dcb"/>
<line x1="784.5" y1="388.2" x2="784.5" y2="401.0" stroke="#7d9dcb" stroke-width="1"/>
<rect x="782" y="388.2" width="5" height="6.4" fill="#7d9dcb"/>
<line x1="790.5" y1="391.0" x2="790.5" y2="398.7" stroke="#dcdcdc" stroke-width="1"/>
<rect x="788.5" y="393.5" width="4" height="5.0" fill="#282828" stroke="#dcdcdc" stroke-width="1"/>
<line x1="797.5" y1="386.0" x2="797.5" y2="393.6" stroke="#dcdcdc" stroke-width="1"/>
<rect x="795.5" y="388.5" width="4" height="4.0" fill="#282828" stroke="#dcdcdc" stroke-width="1"/>
<line x1="803.5" y1="381.8" x2="803.5" y2="390.3" stroke="#dcdcdc" stroke-width="1"/>
<rect x="801" y="386.9" width="5" height="1.2" fill="#dcdcdc"/>
<line x1="810.5" y1="389.2" x2="810.5" y2="395.4" stroke="#7d9dcb" stroke-width="1"/>
<rect x="808" y="389.2" width="5" height="3.0" fill="#7d9dcb"/>
<line x1="816.5" y1="391.5" x2="816.5" y2="394.6" stroke="#dcdcdc" stroke-width="1"/>
<rect x="814.5" y="392.5" width="4" height="2.0" fill="#282828" stroke="#dcdcdc" stroke-width="1"/>
<line x1="822.5" y1="385.3" x2="822.5" y2="389.0" stroke="#dcdcdc" stroke-width="1"/>
<rect x="820" y="387.5" width="5" height="1.5" fill="#dcdcdc"/>
<line x1="829.5" y1="388.2" x2="829.5" y2="396.8" stroke="#7d9dcb" stroke-width="1"/>
<rect x="827" y="390.0" width="5" height="6.8" fill="#7d9dcb"/>
<line x1="835.5" y1="394.6" x2="835.5" y2="401.8" stroke="#7d9dcb" stroke-width="1"/>
<rect x="833" y="396.0" width="5" height="3.7" fill="#7d9dcb"/>
<line x1="842.5" y1="393.9" x2="842.5" y2="401.8" stroke="#7d9dcb" stroke-width="1"/>
<rect x="840" y="397.2" width="5" height="2.8" fill="#7d9dcb"/>
<line x1="848.5" y1="398.7" x2="848.5" y2="406.8" stroke="#7d9dcb" stroke-width="1"/>
<rect x="846" y="398.7" width="5" height="2.3" fill="#7d9dcb"/>
<line x1="855.5" y1="409.0" x2="855.5" y2="421.9" stroke="#7d9dcb" stroke-width="1"/>
<rect x="853" y="409.0" width="5" height="12.9" fill="#7d9dcb"/>
<line x1="861.5" y1="416.8" x2="861.5" y2="431.9" stroke="#7d9dcb" stroke-width="1"/>
<rect x="859" y="417.8" width="5" height="14.1" fill="#7d9dcb"/>
<line x1="868.5" y1="430.5" x2="868.5" y2="443.8" stroke="#7d9dcb" stroke-width="1"/>
<rect x="866.5" y="432.5" width="4" height="3.0" fill="#282828" stroke="#7d9dcb" stroke-width="1"/>
<line x1="874.5" y1="430.0" x2="874.5" y2="453.7" stroke="#7d9dcb" stroke-width="1"/>
<rect x="872" y="435.8" width="5" height="14.7" fill="#7d9dcb"/>
<line x1="881.5" y1="455.5" x2="881.5" y2="467.7" stroke="#7d9dcb" stroke-width="1"/>
<rect x="879" y="457.0" width="5" height="7.1" fill="#7d9dcb"/>
<line x1="887.5" y1="449.0" x2="887.5" y2="463.8" stroke="#dcdcdc" stroke-width="1"/>
<rect x="885.5" y="452.5" width="4" height="7.0" fill="#282828" stroke="#dcdcdc" stroke-width="1"/>
<line x1="894.5" y1="436.2" x2="894.5" y2="447.9" stroke="#dcdcdc" stroke-width="1"/>
<rect x="892" y="443.3" width="5" height="4.6" fill="#dcdcdc"/>
<line x1="900.5" y1="443.2" x2="900.5" y2="449.6" stroke="#dcdcdc" stroke-width="1"/>
<rect x="898" y="445.2" width="5" height="1.2" fill="#dcdcdc"/>
<line x1="907.5" y1="440.0" x2="907.5" y2="461.0" stroke="#7d9dcb" stroke-width="1"/>
<rect x="905" y="440.0" width="5" height="14.6" fill="#7d9dcb"/>
<line x1="913.5" y1="463.2" x2="913.5" y2="481.9" stroke="#7d9dcb" stroke-width="1"/>
<rect x="911" y="463.2" width="5" height="11.5" fill="#7d9dcb"/>
<line x1="920.5" y1="495.2" x2="920.5" y2="510.8" stroke="#7d9dcb" stroke-width="1"/>
<rect x="918" y="508.0" width="5" height="1.2" fill="#7d9dcb"/>
<line x1="926.5" y1="483.0" x2="926.5" y2="507.6" stroke="#dcdcdc" stroke-width="1"/>
<rect x="924.5" y="502.5" width="4" height="4.0" fill="#282828" stroke="#dcdcdc" stroke-width="1"/>
<line x1="933.5" y1="490.0" x2="933.5" y2="505.9" stroke="#7d9dcb" stroke-width="1"/>
<rect x="931" y="502.0" width="5" height="1.2" fill="#7d9dcb"/>
<line x1="939.5" y1="516.0" x2="939.5" y2="531.8" stroke="#7d9dcb" stroke-width="1"/>
<rect x="937" y="524.1" width="5" height="7.7" fill="#7d9dcb"/>
<line x1="946.5" y1="508.2" x2="946.5" y2="539.0" stroke="#7d9dcb" stroke-width="1"/>
<rect x="944" y="521.0" width="5" height="13.7" fill="#7d9dcb"/>
<line x1="952.5" y1="547.0" x2="952.5" y2="560.9" stroke="#7d9dcb" stroke-width="1"/>
<rect x="950.5" y="552.5" width="4" height="4.0" fill="#282828" stroke="#7d9dcb" stroke-width="1"/>
<line x1="959.5" y1="538.0" x2="959.5" y2="560.2" stroke="#7d9dcb" stroke-width="1"/>
<rect x="957" y="550.1" width="5" height="2.6" fill="#7d9dcb"/>
<line x1="965.5" y1="545.1" x2="965.5" y2="576.9" stroke="#7d9dcb" stroke-width="1"/>
<rect x="963" y="554.1" width="5" height="20.7" fill="#7d9dcb"/>
<line x1="972.5" y1="559.0" x2="972.5" y2="580.9" stroke="#7d9dcb" stroke-width="1"/>
<rect x="970" y="559.0" width="5" height="17.6" fill="#7d9dcb"/>
<line x1="978.5" y1="556.3" x2="978.5" y2="576.9" stroke="#dcdcdc" stroke-width="1"/>
<rect x="976.5" y="556.5" width="4" height="6.0" fill="#282828" stroke="#dcdcdc" stroke-width="1"/>
<line x1="985.5" y1="550.1" x2="985.5" y2="573.8" stroke="#dcdcdc" stroke-width="1"/>
<rect x="983.5" y="552.5" width="4" height="16.0" fill="#282828" stroke="#dcdcdc" stroke-width="1"/>
<line x1="991.5" y1="526.0" x2="991.5" y2="551.6" stroke="#dcdcdc" stroke-width="1"/>
<rect x="989.5" y="527.5" width="4" height="14.0" fill="#282828" stroke="#dcdcdc" stroke-width="1"/>
<line x1="998.5" y1="502.1" x2="998.5" y2="535.8" stroke="#7d9dcb" stroke-width="1"/>
<rect x="996" y="517.2" width="5" height="12.6" fill="#7d9dcb"/>
<line x1="1004.5" y1="529.4" x2="1004.5" y2="540.8" stroke="#7d9dcb" stroke-width="1"/>
<rect x="1002.5" y="532.5" width="4" height="4.0" fill="#282828" stroke="#7d9dcb" stroke-width="1"/>
<line x1="1011.5" y1="527.2" x2="1011.5" y2="545.8" stroke="#7d9dcb" stroke-width="1"/>
<rect x="1009" y="529.4" width="5" height="7.4" fill="#7d9dcb"/>
<line x1="1017.5" y1="537.0" x2="1017.5" y2="549.8" stroke="#7d9dcb" stroke-width="1"/>
<rect x="1015" y="537.0" width="5" height="1.7" fill="#7d9dcb"/>
<line x1="1024.5" y1="525.8" x2="1024.5" y2="537.0" stroke="#dcdcdc" stroke-width="1"/>
<rect x="1022.5" y="530.5" width="4" height="2.0" fill="#282828" stroke="#dcdcdc" stroke-width="1"/>
<line x1="1030.5" y1="522.2" x2="1030.5" y2="538.0" stroke="#7d9dcb" stroke-width="1"/>
<rect x="1028.5" y="533.5" width="4" height="4.0" fill="#282828" stroke="#7d9dcb" stroke-width="1"/>
<line x1="1037.5" y1="520.0" x2="1037.5" y2="533.7" stroke="#dcdcdc" stroke-width="1"/>
<rect x="1035.5" y="529.5" width="4" height="3.0" fill="#282828" stroke="#dcdcdc" stroke-width="1"/>
<line x1="1043.5" y1="517.9" x2="1043.5" y2="530.8" stroke="#dcdcdc" stroke-width="1"/>
<rect x="1041.5" y="523.5" width="4" height="3.0" fill="#282828" stroke="#dcdcdc" stroke-width="1"/>
<line x1="1050.5" y1="497.0" x2="1050.5" y2="518.9" stroke="#dcdcdc" stroke-width="1"/>
<rect x="1048.5" y="501.5" width="4" height="9.0" fill="#282828" stroke="#dcdcdc" stroke-width="1"/>
<line x1="1056.5" y1="474.7" x2="1056.5" y2="491.9" stroke="#dcdcdc" stroke-width="1"/>
<rect x="1054.5" y="487.5" width="4" height="4.0" fill="#282828" stroke="#dcdcdc" stroke-width="1"/>
<line x1="1063.5" y1="480.2" x2="1063.5" y2="493.0" stroke="#dcdcdc" stroke-width="1"/>
<rect x="1061.5" y="484.5" width="4" height="4.0" fill="#282828" stroke="#dcdcdc" stroke-width="1"/>
<line x1="1069.5" y1="465.9" x2="1069.5" y2="482.6" stroke="#dcdcdc" stroke-width="1"/>
<rect x="1067.5" y="472.5" width="4" height="7.0" fill="#282828" stroke="#dcdcdc" stroke-width="1"/>
<line x1="1076.5" y1="463.1" x2="1076.5" y2="477.7" stroke="#7d9dcb" stroke-width="1"/>
<rect x="1074" y="468.3" width="5" height="7.8" fill="#7d9dcb"/>
<line x1="1082.5" y1="473.8" x2="1082.5" y2="495.8" stroke="#7d9dcb" stroke-width="1"/>
<rect x="1080" y="473.8" width="5" height="22.0" fill="#7d9dcb"/>
<line x1="1089.5" y1="481.9" x2="1089.5" y2="500.7" stroke="#7d9dcb" stroke-width="1"/>
<rect x="1087" y="493.0" width="5" height="2.8" fill="#7d9dcb"/>
<line x1="1095.5" y1="480.8" x2="1095.5" y2="493.7" stroke="#dcdcdc" stroke-width="1"/>
<rect x="1093" y="484.1" width="5" height="1.2" fill="#dcdcdc"/>
<line x1="1102.5" y1="483.3" x2="1102.5" y2="491.6" stroke="#7d9dcb" stroke-width="1"/>
<rect x="1100" y="485.0" width="5" height="2.7" fill="#7d9dcb"/>
<line x1="1108.5" y1="487.2" x2="1108.5" y2="493.3" stroke="#7d9dcb" stroke-width="1"/>
<rect x="1106.5" y="489.5" width="4" height="3.0" fill="#282828" stroke="#7d9dcb" stroke-width="1"/>
<line x1="1115.5" y1="479.1" x2="1115.5" y2="494.7" stroke="#dcdcdc" stroke-width="1"/>
<rect x="1113.5" y="479.5" width="4" height="9.0" fill="#282828" stroke="#dcdcdc" stroke-width="1"/>
<line x1="1121.5" y1="474.3" x2="1121.5" y2="481.2" stroke="#dcdcdc" stroke-width="1"/>
<rect x="1119.5" y="477.5" width="4" height="1.0" fill="#282828" stroke="#dcdcdc" stroke-width="1"/>
<line x1="1128.5" y1="477.7" x2="1128.5" y2="494.7" stroke="#7d9dcb" stroke-width="1"/>
<rect x="1126" y="477.7" width="5" height="2.1" fill="#7d9dcb"/>
<line x1="1134.5" y1="469.4" x2="1134.5" y2="477.7" stroke="#dcdcdc" stroke-width="1"/>
<rect x="1132.5" y="472.5" width="4" height="4.0" fill="#282828" stroke="#dcdcdc" stroke-width="1"/>
<line x1="1141.5" y1="455.2" x2="1141.5" y2="472.9" stroke="#dcdcdc" stroke-width="1"/>
<rect x="1139.5" y="457.5" width="4" height="15.0" fill="#282828" stroke="#dcdcdc" stroke-width="1"/>
<line x1="1147.5" y1="449.2" x2="1147.5" y2="456.9" stroke="#dcdcdc" stroke-width="1"/>
<rect x="1145.5" y="451.5" width="4" height="3.0" fill="#282828" stroke="#dcdcdc" stroke-width="1"/>
<line x1="1154.5" y1="448.2" x2="1154.5" y2="463.8" stroke="#7d9dcb" stroke-width="1"/>
<rect x="1152" y="449.9" width="5" height="8.6" fill="#7d9dcb"/>
<line x1="1160.5" y1="465.2" x2="1160.5" y2="477.7" stroke="#7d9dcb" stroke-width="1"/>
<rect x="1158" y="468.0" width="5" height="1.5" fill="#7d9dcb"/>
<line x1="1167.5" y1="462.2" x2="1167.5" y2="471.9" stroke="#7d9dcb" stroke-width="1"/>
<rect x="1165" y="465.9" width="5" height="4.9" fill="#7d9dcb"/>
<line x1="1173.5" y1="468.0" x2="1173.5" y2="476.8" stroke="#7d9dcb" stroke-width="1"/>
<rect x="1171" y="469.4" width="5" height="5.3" fill="#7d9dcb"/>
<line x1="1180.5" y1="468.0" x2="1180.5" y2="475.6" stroke="#dcdcdc" stroke-width="1"/>
<rect x="1178.5" y="468.5" width="4" height="7.0" fill="#282828" stroke="#dcdcdc" stroke-width="1"/>
<line x1="1186.5" y1="464.2" x2="1186.5" y2="470.8" stroke="#7d9dcb" stroke-width="1"/>
<rect x="1184" y="464.2" width="5" height="6.6" fill="#7d9dcb"/>
<line x1="1193.5" y1="463.8" x2="1193.5" y2="475.0" stroke="#7d9dcb" stroke-width="1"/>
<rect x="1191" y="465.9" width="5" height="7.7" fill="#7d9dcb"/>
<line x1="1199.5" y1="469.1" x2="1199.5" y2="486.1" stroke="#7d9dcb" stroke-width="1"/>
<rect x="1197" y="469.1" width="5" height="17.0" fill="#7d9dcb"/>
<line x1="1206.5" y1="499.0" x2="1206.5" y2="513.9" stroke="#7d9dcb" stroke-width="1"/>
<rect x="1204" y="507.2" width="5" height="3.5" fill="#7d9dcb"/>
<line x1="1212.5" y1="513.2" x2="1212.5" y2="521.5" stroke="#7d9dcb" stroke-width="1"/>
<rect x="1210" y="513.2" width="5" height="2.1" fill="#7d9dcb"/>
<line x1="1219.5" y1="508.3" x2="1219.5" y2="514.9" stroke="#dcdcdc" stroke-width="1"/>
<rect x="1217" y="513.2" width="5" height="1.7" fill="#dcdcdc"/>
<line x1="1225.5" y1="498.3" x2="1225.5" y2="510.7" stroke="#dcdcdc" stroke-width="1"/>
<rect x="1223.5" y="498.5" width="4" height="11.0" fill="#282828" stroke="#dcdcdc" stroke-width="1"/>
<line x1="1231.5" y1="485.4" x2="1231.5" y2="496.8" stroke="#dcdcdc" stroke-width="1"/>
<rect x="1229.5" y="485.5" width="4" height="7.0" fill="#282828" stroke="#dcdcdc" stroke-width="1"/>
<line x1="1238.5" y1="487.2" x2="1238.5" y2="495.8" stroke="#7d9dcb" stroke-width="1"/>
<rect x="1236" y="487.2" width="5" height="1.7" fill="#7d9dcb"/>
</g>
<path d="M89.5 380.7 l2.500 1.800 l-2.500 1.800 l-2.500 -1.800 z" fill="#096409"/>
<path d="M89.5 375.7 l2.500 1.800 l-2.500 1.800 l-2.500 -1.800 z" fill="#ff0808"/>
<path d="M95.5 370.5 l2.500 1.800 l-2.500 1.800 l-2.500 -1.800 z" fill="#096409"/>
<path d="M95.5 364.7 l2.500 1.800 l-2.500 1.800 l-2.500 -1.800 z" fill="#ff0808"/>
<path d="M102.5 366.5 l2.500 1.800 l-2.500 1.800 l-2.500 -1.800 z" fill="#096409"/>
<path d="M102.5 361.6 l2.500 1.800 l-2.500 1.800 l-2.500 -1.800 z" fill="#ff0808"/>
<path d="M108.5 360.8 l2.500 1.800 l-2.500 1.800 l-2.500 -1.800 z" fill="#096409"/>
<path d="M108.5 353.7 l2.500 1.800 l-2.500 1.800 l-2.500 -1.800 z" fill="#ff0808"/>
<path d="M115.5 364.7 l2.500 1.800 l-2.500 1.800 l-2.500 -1.800 z" fill="#096409"/>
<path d="M115.5 358.4 l2.500 1.800 l-2.500 1.800 l-2.500 -1.800 z" fill="#ff0808"/>
<path d="M121.5 353.7 l2.500 1.800 l-2.500 1.800 l-2.500 -1.800 z" fill="#096409"/>
<path d="M121.5 346.9 l2.500 1.800 l-2.500 1.800 l-2.500 -1.800 z" fill="#ff0808"/>
<path d="M128.5 356.6 l2.500 1.800 l-2.500 1.800 l-2.500 -1.800 z" fill="#096409"/>
<path d="M128.5 349.6 l2.500 1.800 l-2.500 1.800 l-2.500 -1.800 z" fill="#ff0808"/>
<path d="M134.5 375.5 l2.500 1.800 l-2.500 1.800 l-2.500 -1.800 z" fill="#096409"/>
<path d="M134.5 368.6 l2.500 1.800 l-2.500 1.800 l-2.500 -1.800 z" fill="#ff0808"/>
<path d="M141.5 397.6 l2.500 1.800 l-2.500 1.800 l-2.500 -1.800 z" fill="#096409"/>
<path d="M141.5 387.7 l2.500 1.800 l-2.500 1.800 l-2.500 -1.800 z" fill="#ff0808"/>
<path d="M147.5 378.6 l2.500 1.800 l-2.500 1.800 l-2.500 -1.800 z" fill="#096409"/>
<path d="M147.5 366.5 l2.500 1.800 l-2.500 1.800 l-2.500 -1.800 z" fill="#ff0808"/>
<path d="M154.5 387.7 l2.500 1.800 l-2.500 1.800 l-2.500 -1.800 z" fill="#096409"/>
<path d="M154.5 375.7 l2.500 1.800 l-2.500 1.800 l-2.500 -1.800 z" fill="#ff0808"/>
<path d="M160.5 397.6 l2.500 1.800 l-2.500 1.800 l-2.500 -1.800 z" fill="#096409"/>
<path d="M160.5 385.7 l2.500 1.800 l-2.500 1.800 l-2.500 -1.800 z" fill="#ff0808"/>
<path d="M167.5 393.5 l2.500 1.800 l-2.500 1.800 l-2.500 -1.800 z" fill="#096409"/>
<path d="M167.5 383.6 l2.500 1.800 l-2.500 1.800 l-2.500 -1.800 z" fill="#ff0808"/>
<path d="M173.5 391.7 l2.500 1.800 l-2.500 1.800 l-2.500 -1.800 z" fill="#096409"/>
<path d="M173.5 384.6 l2.500 1.800 l-2.500 1.800 l-2.500 -1.800 z" fill="#ff0808"/>
<path d="M180.5 388.8 l2.500 1.800 l-2.500 1.800 l-2.500 -1.800 z" fill="#096409"/>
<path d="M180.5 381.7 l2.500 1.800 l-2.500 1.800 l-2.500 -1.800 z" fill="#ff0808"/>
<path d="M186.5 379.5 l2.500 1.800 l-2.500 1.800 l-2.500 -1.800 z" fill="#096409"/>
<path d="M186.5 374.6 l2.500 1.800 l-2.500 1.800 l-2.500 -1.800 z" fill="#ff0808"/>
<path d="M193.5 381.5 l2.500 1.800 l-2.500 1.800 l-2.500 -1.800 z" fill="#096409"/>
<path d="M193.5 376.7 l2.500 1.800 l-2.500 1.800 l-2.500 -1.800 z" fill="#ff0808"/>
<path d="M199.5 374.6 l2.500 1.800 l-2.500 1.800 l-2.500 -1.800 z" fill="#096409"/>
<path d="M199.5 368.6 l2.500 1.800 l-2.500 1.800 l-2.500 -1.800 z" fill="#ff0808"/>
<path d="M206.5 389.6 l2.500 1.800 l-2.500 1.800 l-2.500 -1.800 z" fill="#096409"/>
<path d="M206.5 383.6 l2.500 1.800 l-2.500 1.800 l-2.500 -1.800 z" fill="#ff0808"/>
<path d="M212.5 396.7 l2.500 1.800 l-2.500 1.800 l-2.500 -1.800 z" fill="#096409"/>
<path d="M212.5 389.6 l2.500 1.800 l-2.500 1.800 l-2.500 -1.800 z" fill="#ff0808"/>
<path d="M219.5 391.7 l2.500 1.800 l-2.500 1.800 l-2.500 -1.800 z" fill="#096409"/>
<path d="M219.5 383.6 l2.500 1.800 l-2.500 1.800 l-2.500 -1.800 z" fill="#ff0808"/>
<path d="M225.5 383.6 l2.500 1.800 l-2.500 1.800 l-2.500 -1.800 z" fill="#096409"/>
<path d="M225.5 377.7 l2.500 1.800 l-2.500 1.800 l-2.500 -1.800 z" fill="#ff0808"/>
<path d="M232.5 377.6 l2.500 1.800 l-2.500 1.800 l-2.500 -1.800 z" fill="#096409"/>
<path d="M232.5 370.9 l2.500 1.800 l-2.500 1.800 l-2.500 -1.800 z" fill="#ff0808"/>
<path d="M238.5 358.4 l2.500 1.800 l-2.500 1.800 l-2.500 -1.800 z" fill="#096409"/>
<path d="M238.5 350.6 l2.500 1.800 l-2.500 1.800 l-2.500 -1.800 z" fill="#ff0808"/>
<path d="M245.5 362.4 l2.500 1.800 l-2.500 1.800 l-2.500 -1.800 z" fill="#096409"/>
<path d="M245.5 353.7 l2.500 1.800 l-2.500 1.800 l-2.500 -1.800 z" fill="#ff0808"/>
<path d="M251.5 371.6 l2.500 1.800 l-2.500 1.800 l-2.500 -1.800 z" fill="#096409"/>
<path d="M251.5 362.5 l2.500 1.800 l-2.500 1.800 l-2.500 -1.800 z" fill="#ff0808"/>
<path d="M258.5 366.4 l2.500 1.800 l-2.500 1.800 l-2.500 -1.800 z" fill="#096409"/>
<path d="M258.5 356.5 l2.500 1.800 l-2.500 1.800 l-2.500 -1.800 z" fill="#ff0808"/>
<path d="M264.5 354.9 l2.500 1.800 l-2.500 1.800 l-2.500 -1.800 z" fill="#096409"/>
<path d="M264.5 347.8 l2.500 1.800 l-2.500 1.800 l-2.500 -1.800 z" fill="#ff0808"/>
<path d="M271.5 346.2 l2.500 1.800 l-2.500 1.800 l-2.500 -1.800 z" fill="#096409"/>
<path d="M271.5 339.7 l2.500 1.800 l-2.500 1.800 l-2.500 -1.800 z" fill="#ff0808"/>
<path d="M277.5 350.9 l2.500 1.800 l-2.500 1.800 l-2.500 -1.800 z" fill="#096409"/>
<path d="M277.5 342.7 l2.500 1.800 l-2.500 1.800 l-2.500 -1.800 z" fill="#ff0808"/>
<path d="M284.5 356.5 l2.500 1.800 l-2.500 1.800 l-2.500 -1.800 z" fill="#096409"/>
<path d="M284.5 349.5 l2.500 1.800 l-2.500 1.800 l-2.500 -1.800 z" fill="#ff0808"/>
<path d="M290.5 357.6 l2.500 1.800 l-2.500 1.800 l-2.500 -1.800 z" fill="#096409"/>
<path d="M290.5 350.5 l2.500 1.800 l-2.500 1.800 l-2.500 -1.800 z" fill="#ff0808"/>
<path d="M297.5 359.5 l2.500 1.800 l-2.500 1.800 l-2.500 -1.800 z" fill="#096409"/>
<path d="M297.5 353.6 l2.500 1.800 l-2.500 1.800 l-2.500 -1.800 z" fill="#ff0808"/>
<path d="M303.5 345.5 l2.500 1.800 l-2.500 1.800 l-2.500 -1.800 z" fill="#096409"/>
<path d="M303.5 338.7 l2.500 1.800 l-2.500 1.800 l-2.500 -1.800 z" fill="#ff0808"/>
<path d="M310.5 351.8 l2.500 1.800 l-2.500 1.800 l-2.500 -1.800 z" fill="#096409"/>
<path d="M310.5 345.5 l2.500 1.800 l-2.500 1.800 l-2.500 -1.800 z" fill="#ff0808"/>
<path d="M316.5 352.6 l2.500 1.800 l-2.500 1.800 l-2.500 -1.800 z" fill="#096409"/>
<path d="M316.5 346.5 l2.500 1.800 l-2.500 1.800 l-2.500 -1.800 z" fill="#ff0808"/>
<path d="M323.5 349.9 l2.500 1.800 l-2.500 1.800 l-2.500 -1.800 z" fill="#096409"/>
<path d="M323.5 343.7 l2.500 1.800 l-2.500 1.800 l-2.500 -1.800 z" fill="#ff0808"/>
<path d="M329.5 348.6 l2.500 1.800 l-2.500 1.800 l-2.500 -1.800 z" fill="#096409"/>
<path d="M329.5 343.7 l2.500 1.800 l-2.500 1.800 l-2.500 -1.800 z" fill="#ff0808"/>
<path d="M336.5 348.6 l2.500 1.800 l-2.500 1.800 l-2.500 -1.800 z" fill="#096409"/>
<path d="M336.5 343.7 l2.500 1.800 l-2.500 1.800 l-2.500 -1.800 z" fill="#ff0808"/>
<path d="M342.5 356.7 l2.500 1.800 l-2.500 1.800 l-2.500 -1.800 z" fill="#096409"/>
<path d="M342.5 351.8 l2.500 1.800 l-2.500 1.800 l-2.500 -1.800 z" fill="#ff0808"/>
<path d="M349.5 355.7 l2.500 1.800 l-2.500 1.800 l-2.500 -1.800 z" fill="#096409"/>
<path d="M349.5 350.9 l2.500 1.800 l-2.500 1.800 l-2.500 -1.800 z" fill="#ff0808"/>
<path d="M355.5 345.5 l2.500 1.800 l-2.500 1.800 l-2.500 -1.800 z" fill="#096409"/>
<path d="M355.5 340.8 l2.500 1.800 l-2.500 1.800 l-2.500 -1.800 z" fill="#ff0808"/>
<path d="M362.5 332.2 l2.500 1.800 l-2.500 1.800 l-2.500 -1.800 z" fill="#096409"/>
<path d="M362.5 326.9 l2.500 1.800 l-2.500 1.800 l-2.500 -1.800 z" fill="#ff0808"/>
<path d="M368.5 337.7 l2.500 1.800 l-2.500 1.800 l-2.500 -1.800 z" fill="#096409"/>
<path d="M368.5 330.6 l2.500 1.800 l-2.500 1.800 l-2.500 -1.800 z" fill="#ff0808"/>
<path d="M375.5 331.8 l2.500 1.800 l-2.500 1.800 l-2.500 -1.800 z" fill="#096409"/>
<path d="M375.5 324.6 l2.500 1.800 l-2.500 1.800 l-2.500 -1.800 z" fill="#ff0808"/>
<path d="M381.5 343.7 l2.500 1.800 l-2.500 1.800 l-2.500 -1.800 z" fill="#096409"/>
<path d="M381.5 336.8 l2.500 1.800 l-2.500 1.800 l-2.500 -1.800 z" fill="#ff0808"/>
<path d="M388.5 337.7 l2.500 1.800 l-2.500 1.800 l-2.500 -1.800 z" fill="#096409"/>
<path d="M388.5 330.6 l2.500 1.800 l-2.500 1.800 l-2.500 -1.800 z" fill="#ff0808"/>
<path d="M394.5 333.7 l2.500 1.800 l-2.500 1.800 l-2.500 -1.800 z" fill="#096409"/>
<path d="M394.5 327.7 l2.500 1.800 l-2.500 1.800 l-2.500 -1.800 z" fill="#ff0808"/>
<path d="M401.5 336.8 l2.500 1.800 l-2.500 1.800 l-2.500 -1.800 z" fill="#096409"/>
<path d="M401.5 330.6 l2.500 1.800 l-2.500 1.800 l-2.500 -1.800 z" fill="#ff0808"/>
<path d="M407.5 346.5 l2.500 1.800 l-2.500 1.800 l-2.500 -1.800 z" fill="#096409"/>
<path d="M407.5 338.4 l2.500 1.800 l-2.500 1.800 l-2.500 -1.800 z" fill="#ff0808"/>
<path d="M414.5 344.6 l2.500 1.800 l-2.500 1.800 l-2.500 -1.800 z" fill="#096409"/>
<path d="M414.5 335.6 l2.500 1.800 l-2.500 1.800 l-2.500 -1.800 z" fill="#ff0808"/>
<path d="M420.5 342.4 l2.500 1.800 l-2.500 1.800 l-2.500 -1.800 z" fill="#096409"/>
<path d="M420.5 334.7 l2.500 1.800 l-2.500 1.800 l-2.500 -1.800 z" fill="#ff0808"/>
<path d="M426.5 340.5 l2.500 1.800 l-2.500 1.800 l-2.500 -1.800 z" fill="#096409"/>
<path d="M426.5 332.7 l2.500 1.800 l-2.500 1.800 l-2.500 -1.800 z" fill="#ff0808"/>
<path d="M433.5 353.6 l2.500 1.800 l-2.500 1.800 l-2.500 -1.800 z" fill="#096409"/>
<path d="M433.5 347.6 l2.500 1.800 l-2.500 1.800 l-2.500 -1.800 z" fill="#ff0808"/>
<path d="M439.5 352.6 l2.500 1.800 l-2.500 1.800 l-2.500 -1.800 z" fill="#096409"/>
<path d="M439.5 346.5 l2.500 1.800 l-2.500 1.800 l-2.500 -1.800 z" fill="#ff0808"/>
<path d="M446.5 347.6 l2.500 1.800 l-2.500 1.800 l-2.500 -1.800 z" fill="#096409"/>
<path d="M446.5 341.8 l2.500 1.800 l-2.500 1.800 l-2.500 -1.800 z" fill="#ff0808"/>
<path d="M452.5 347.6 l2.500 1.800 l-2.500 1.800 l-2.500 -1.800 z" fill="#096409"/>
<path d="M452.5 341.5 l2.500 1.800 l-2.500 1.800 l-2.500 -1.800 z" fill="#ff0808"/>
<path d="M459.5 346.5 l2.500 1.800 l-2.500 1.800 l-2.500 -1.800 z" fill="#096409"/>
<path d="M459.5 340.5 l2.500 1.800 l-2.500 1.800 l-2.500 -1.800 z" fill="#ff0808"/>
<path d="M465.5 346.5 l2.500 1.800 l-2.500 1.800 l-2.500 -1.800 z" fill="#096409"/>
<path d="M465.5 340.5 l2.500 1.800 l-2.500 1.800 l-2.500 -1.800 z" fill="#ff0808"/>
<path d="M472.5 348.6 l2.500 1.800 l-2.500 1.800 l-2.500 -1.800 z" fill="#096409"/>
<path d="M472.5 342.6 l2.500 1.800 l-2.500 1.800 l-2.500 -1.800 z" fill="#ff0808"/>
<path d="M478.5 352.6 l2.500 1.800 l-2.500 1.800 l-2.500 -1.800 z" fill="#096409"/>
<path d="M478.5 346.5 l2.500 1.800 l-2.500 1.800 l-2.500 -1.800 z" fill="#ff0808"/>
<path d="M485.5 347.6 l2.500 1.800 l-2.500 1.800 l-2.500 -1.800 z" fill="#096409"/>
<path d="M485.5 342.6 l2.500 1.800 l-2.500 1.800 l-2.500 -1.800 z" fill="#ff0808"/>
<path d="M491.5 351.7 l2.500 1.800 l-2.500 1.800 l-2.500 -1.800 z" fill="#096409"/>
<path d="M491.5 346.5 l2.500 1.800 l-2.500 1.800 l-2.500 -1.800 z" fill="#ff0808"/>
<path d="M498.5 330.6 l2.500 1.800 l-2.500 1.800 l-2.500 -1.800 z" fill="#096409"/>
<path d="M498.5 322.7 l2.500 1.800 l-2.500 1.800 l-2.500 -1.800 z" fill="#ff0808"/>
<path d="M504.5 339.6 l2.500 1.800 l-2.500 1.800 l-2.500 -1.800 z" fill="#096409"/>
<path d="M504.5 332.4 l2.500 1.800 l-2.500 1.800 l-2.500 -1.800 z" fill="#ff0808"/>
<path d="M511.5 336.5 l2.500 1.800 l-2.500 1.800 l-2.500 -1.800 z" fill="#096409"/>
<path d="M511.5 328.7 l2.500 1.800 l-2.500 1.800 l-2.500 -1.800 z" fill="#ff0808"/>
<path d="M517.5 332.8 l2.500 1.800 l-2.500 1.800 l-2.500 -1.800 z" fill="#096409"/>
<path d="M517.5 325.6 l2.500 1.800 l-2.500 1.800 l-2.500 -1.800 z" fill="#ff0808"/>
<path d="M524.5 339.6 l2.500 1.800 l-2.500 1.800 l-2.500 -1.800 z" fill="#096409"/>
<path d="M524.5 334.7 l2.500 1.800 l-2.500 1.800 l-2.500 -1.800 z" fill="#ff0808"/>
<path d="M530.5 341.5 l2.500 1.800 l-2.500 1.800 l-2.500 -1.800 z" fill="#096409"/>
<path d="M530.5 337.8 l2.500 1.800 l-2.500 1.800 l-2.500 -1.800 z" fill="#ff0808"/>
<path d="M537.5 333.7 l2.500 1.800 l-2.500 1.800 l-2.500 -1.800 z" fill="#096409"/>
<path d="M537.5 327.7 l2.500 1.800 l-2.500 1.800 l-2.500 -1.800 z" fill="#ff0808"/>
<path d="M543.5 335.5 l2.500 1.800 l-2.500 1.800 l-2.500 -1.800 z" fill="#096409"/>
<path d="M543.5 328.4 l2.500 1.800 l-2.500 1.800 l-2.500 -1.800 z" fill="#ff0808"/>
<path d="M550.5 336.5 l2.500 1.800 l-2.500 1.800 l-2.500 -1.800 z" fill="#096409"/>
<path d="M550.5 330.8 l2.500 1.800 l-2.500 1.800 l-2.500 -1.800 z" fill="#ff0808"/>
<path d="M556.5 341.8 l2.500 1.800 l-2.500 1.800 l-2.500 -1.800 z" fill="#096409"/>
<path d="M556.5 334.7 l2.500 1.800 l-2.500 1.800 l-2.500 -1.800 z" fill="#ff0808"/>
<path d="M563.5 341.8 l2.500 1.800 l-2.500 1.800 l-2.500 -1.800 z" fill="#096409"/>
<path d="M563.5 334.7 l2.500 1.800 l-2.500 1.800 l-2.500 -1.800 z" fill="#ff0808"/>
<path d="M569.5 342.6 l2.500 1.800 l-2.500 1.800 l-2.500 -1.800 z" fill="#096409"/>
<path d="M569.5 337.8 l2.500 1.800 l-2.500 1.800 l-2.500 -1.800 z" fill="#ff0808"/>
<path d="M576.5 347.7 l2.500 1.800 l-2.500 1.800 l-2.500 -1.800 z" fill="#096409"/>
<path d="M576.5 342.7 l2.500 1.800 l-2.500 1.800 l-2.500 -1.800 z" fill="#ff0808"/>
<path d="M582.5 353.7 l2.500 1.800 l-2.500 1.800 l-2.500 -1.800 z" fill="#096409"/>
<path d="M582.5 347.7 l2.500 1.800 l-2.500 1.800 l-2.500 -1.800 z" fill="#ff0808"/>
<path d="M589.5 345.6 l2.500 1.800 l-2.500 1.800 l-2.500 -1.800 z" fill="#096409"/>
<path d="M589.5 340.6 l2.500 1.800 l-2.500 1.800 l-2.500 -1.800 z" fill="#ff0808"/>
<path d="M595.5 345.6 l2.500 1.800 l-2.500 1.800 l-2.500 -1.800 z" fill="#096409"/>
<path d="M595.5 340.6 l2.500 1.800 l-2.500 1.800 l-2.500 -1.800 z" fill="#ff0808"/>
<path d="M602.5 352.8 l2.500 1.800 l-2.500 1.800 l-2.500 -1.800 z" fill="#096409"/>
<path d="M602.5 347.7 l2.500 1.800 l-2.500 1.800 l-2.500 -1.800 z" fill="#ff0808"/>
<path d="M608.5 351.6 l2.500 1.800 l-2.500 1.800 l-2.500 -1.800 z" fill="#096409"/>
<path d="M608.5 347.7 l2.500 1.800 l-2.500 1.800 l-2.500 -1.800 z" fill="#ff0808"/>
<path d="M615.5 346.8 l2.500 1.800 l-2.500 1.800 l-2.500 -1.800 z" fill="#096409"/>
<path d="M615.5 342.7 l2.500 1.800 l-2.500 1.800 l-2.500 -1.800 z" fill="#ff0808"/>
<path d="M621.5 361.8 l2.500 1.800 l-2.500 1.800 l-2.500 -1.800 z" fill="#096409"/>
<path d="M621.5 356.8 l2.500 1.800 l-2.500 1.800 l-2.500 -1.800 z" fill="#ff0808"/>
<path d="M628.5 364.6 l2.500 1.800 l-2.500 1.800 l-2.500 -1.800 z" fill="#096409"/>
<path d="M628.5 359.6 l2.500 1.800 l-2.500 1.800 l-2.500 -1.800 z" fill="#ff0808"/>
<path d="M634.5 359.6 l2.500 1.800 l-2.500 1.800 l-2.500 -1.800 z" fill="#096409"/>
<path d="M634.5 353.7 l2.500 1.800 l-2.500 1.800 l-2.500 -1.800 z" fill="#ff0808"/>
<path d="M641.5 358.6 l2.500 1.800 l-2.500 1.800 l-2.500 -1.800 z" fill="#096409"/>
<path d="M641.5 352.7 l2.500 1.800 l-2.500 1.800 l-2.500 -1.800 z" fill="#ff0808"/>
<path d="M647.5 358.6 l2.500 1.800 l-2.500 1.800 l-2.500 -1.800 z" fill="#096409"/>
<path d="M647.5 352.7 l2.500 1.800 l-2.500 1.800 l-2.500 -1.800 z" fill="#ff0808"/>
<path d="M654.5 368.6 l2.500 1.800 l-2.500 1.800 l-2.500 -1.800 z" fill="#096409"/>
<path d="M654.5 362.6 l2.500 1.800 l-2.500 1.800 l-2.500 -1.800 z" fill="#ff0808"/>
<path d="M660.5 367.6 l2.500 1.800 l-2.500 1.800 l-2.500 -1.800 z" fill="#096409"/>
<path d="M660.5 361.8 l2.500 1.800 l-2.500 1.800 l-2.500 -1.800 z" fill="#ff0808"/>
<path d="M667.5 361.5 l2.500 1.800 l-2.500 1.800 l-2.500 -1.800 z" fill="#096409"/>
<path d="M667.5 355.5 l2.500 1.800 l-2.500 1.800 l-2.500 -1.800 z" fill="#ff0808"/>
<path d="M673.5 368.6 l2.500 1.800 l-2.500 1.800 l-2.500 -1.800 z" fill="#096409"/>
<path d="M673.5 362.6 l2.500 1.800 l-2.500 1.800 l-2.500 -1.800 z" fill="#ff0808"/>
<path d="M680.5 367.6 l2.500 1.800 l-2.500 1.800 l-2.500 -1.800 z" fill="#096409"/>
<path d="M680.5 361.8 l2.500 1.800 l-2.500 1.800 l-2.500 -1.800 z" fill="#ff0808"/>
<path d="M686.5 367.6 l2.500 1.800 l-2.500 1.800 l-2.500 -1.800 z" fill="#096409"/>
<path d="M686.5 361.8 l2.500 1.800 l-2.500 1.800 l-2.500 -1.800 z" fill="#ff0808"/>
<path d="M693.5 368.6 l2.500 1.800 l-2.500 1.800 l-2.500 -1.800 z" fill="#096409"/>
<path d="M693.5 362.6 l2.500 1.800 l-2.500 1.800 l-2.500 -1.800 z" fill="#ff0808"/>
<path d="M699.5 376.4 l2.500 1.800 l-2.500 1.800 l-2.500 -1.800 z" fill="#096409"/>
<path d="M699.5 371.7 l2.500 1.800 l-2.500 1.800 l-2.500 -1.800 z" fill="#ff0808"/>
<path d="M706.5 377.7 l2.500 1.800 l-2.500 1.800 l-2.500 -1.800 z" fill="#096409"/>
<path d="M706.5 373.6 l2.500 1.800 l-2.500 1.800 l-2.500 -1.800 z" fill="#ff0808"/>
<path d="M712.5 387.6 l2.500 1.800 l-2.500 1.800 l-2.500 -1.800 z" fill="#096409"/>
<path d="M712.5 382.7 l2.500 1.800 l-2.500 1.800 l-2.500 -1.800 z" fill="#ff0808"/>
<path d="M719.5 380.4 l2.500 1.800 l-2.500 1.800 l-2.500 -1.800 z" fill="#096409"/>
<path d="M719.5 375.7 l2.500 1.800 l-2.500 1.800 l-2.500 -1.800 z" fill="#ff0808"/>
<path d="M725.5 392.6 l2.500 1.800 l-2.500 1.800 l-2.500 -1.800 z" fill="#096409"/>
<path d="M725.5 386.7 l2.500 1.800 l-2.500 1.800 l-2.500 -1.800 z" fill="#ff0808"/>
<path d="M732.5 379.6 l2.500 1.800 l-2.500 1.800 l-2.500 -1.800 z" fill="#096409"/>
<path d="M732.5 373.6 l2.500 1.800 l-2.500 1.800 l-2.500 -1.800 z" fill="#ff0808"/>
<path d="M738.5 384.6 l2.500 1.800 l-2.500 1.800 l-2.500 -1.800 z" fill="#096409"/>
<path d="M738.5 377.7 l2.500 1.800 l-2.500 1.800 l-2.500 -1.800 z" fill="#ff0808"/>
<path d="M745.5 391.4 l2.500 1.800 l-2.500 1.800 l-2.500 -1.800 z" fill="#096409"/>
<path d="M745.5 383.5 l2.500 1.800 l-2.500 1.800 l-2.500 -1.800 z" fill="#ff0808"/>
<path d="M751.5 393.6 l2.500 1.800 l-2.500 1.800 l-2.500 -1.800 z" fill="#096409"/>
<path d="M751.5 385.7 l2.500 1.800 l-2.500 1.800 l-2.500 -1.800 z" fill="#ff0808"/>
<path d="M758.5 398.6 l2.500 1.800 l-2.500 1.800 l-2.500 -1.800 z" fill="#096409"/>
<path d="M758.5 390.7 l2.500 1.800 l-2.500 1.800 l-2.500 -1.800 z" fill="#ff0808"/>
<path d="M764.5 384.7 l2.500 1.800 l-2.500 1.800 l-2.500 -1.800 z" fill="#096409"/>
<path d="M764.5 376.8 l2.500 1.800 l-2.500 1.800 l-2.500 -1.800 z" fill="#ff0808"/>
<path d="M771.5 383.5 l2.500 1.800 l-2.500 1.800 l-2.500 -1.800 z" fill="#096409"/>
<path d="M771.5 376.8 l2.500 1.800 l-2.500 1.800 l-2.500 -1.800 z" fill="#ff0808"/>
<path d="M777.5 392.6 l2.500 1.800 l-2.500 1.800 l-2.500 -1.800 z" fill="#096409"/>
<path d="M777.5 384.7 l2.500 1.800 l-2.500 1.800 l-2.500 -1.800 z" fill="#ff0808"/>
<path d="M784.5 401.4 l2.500 1.800 l-2.500 1.800 l-2.500 -1.800 z" fill="#096409"/>
<path d="M784.5 392.6 l2.500 1.800 l-2.500 1.800 l-2.500 -1.800 z" fill="#ff0808"/>
<path d="M790.5 395.4 l2.500 1.800 l-2.500 1.800 l-2.500 -1.800 z" fill="#096409"/>
<path d="M790.5 388.5 l2.500 1.800 l-2.500 1.800 l-2.500 -1.800 z" fill="#ff0808"/>
<path d="M797.5 388.5 l2.500 1.800 l-2.500 1.800 l-2.500 -1.800 z" fill="#096409"/>
<path d="M797.5 381.7 l2.500 1.800 l-2.500 1.800 l-2.500 -1.800 z" fill="#ff0808"/>
<path d="M803.5 388.5 l2.500 1.800 l-2.500 1.800 l-2.500 -1.800 z" fill="#096409"/>
<path d="M803.5 382.5 l2.500 1.800 l-2.500 1.800 l-2.500 -1.800 z" fill="#ff0808"/>
<path d="M810.5 394.6 l2.500 1.800 l-2.500 1.800 l-2.500 -1.800 z" fill="#096409"/>
<path d="M810.5 389.7 l2.500 1.800 l-2.500 1.800 l-2.500 -1.800 z" fill="#ff0808"/>
<path d="M816.5 391.4 l2.500 1.800 l-2.500 1.800 l-2.500 -1.800 z" fill="#096409"/>
<path d="M816.5 387.4 l2.500 1.800 l-2.500 1.800 l-2.500 -1.800 z" fill="#ff0808"/>
<path d="M822.5 387.4 l2.500 1.800 l-2.500 1.800 l-2.500 -1.800 z" fill="#096409"/>
<path d="M822.5 382.5 l2.500 1.800 l-2.500 1.800 l-2.500 -1.800 z" fill="#ff0808"/>
<path d="M829.5 399.6 l2.500 1.800 l-2.500 1.800 l-2.500 -1.800 z" fill="#096409"/>
<path d="M829.5 394.6 l2.500 1.800 l-2.500 1.800 l-2.500 -1.800 z" fill="#ff0808"/>
<path d="M835.5 402.6 l2.500 1.800 l-2.500 1.800 l-2.500 -1.800 z" fill="#096409"/>
<path d="M835.5 397.9 l2.500 1.800 l-2.500 1.800 l-2.500 -1.800 z" fill="#ff0808"/>
<path d="M842.5 401.7 l2.500 1.800 l-2.500 1.800 l-2.500 -1.800 z" fill="#096409"/>
<path d="M842.5 395.7 l2.500 1.800 l-2.500 1.800 l-2.500 -1.800 z" fill="#ff0808"/>
<path d="M848.5 402.6 l2.500 1.800 l-2.500 1.800 l-2.500 -1.800 z" fill="#096409"/>
<path d="M848.5 396.9 l2.500 1.800 l-2.500 1.800 l-2.500 -1.800 z" fill="#ff0808"/>
<path d="M855.5 430.5 l2.500 1.800 l-2.500 1.800 l-2.500 -1.800 z" fill="#096409"/>
<path d="M855.5 423.6 l2.500 1.800 l-2.500 1.800 l-2.500 -1.800 z" fill="#ff0808"/>
<path d="M861.5 439.7 l2.500 1.800 l-2.500 1.800 l-2.500 -1.800 z" fill="#096409"/>
<path d="M861.5 430.5 l2.500 1.800 l-2.500 1.800 l-2.500 -1.800 z" fill="#ff0808"/>
<path d="M868.5 438.7 l2.500 1.800 l-2.500 1.800 l-2.500 -1.800 z" fill="#096409"/>
<path d="M868.5 428.7 l2.500 1.800 l-2.500 1.800 l-2.500 -1.800 z" fill="#ff0808"/>
<path d="M874.5 460.6 l2.500 1.800 l-2.500 1.800 l-2.500 -1.800 z" fill="#096409"/>
<path d="M874.5 448.7 l2.500 1.800 l-2.500 1.800 l-2.500 -1.800 z" fill="#ff0808"/>
<path d="M881.5 473.8 l2.500 1.800 l-2.500 1.800 l-2.500 -1.800 z" fill="#096409"/>
<path d="M881.5 462.7 l2.500 1.800 l-2.500 1.800 l-2.500 -1.800 z" fill="#ff0808"/>
<path d="M887.5 454.7 l2.500 1.800 l-2.500 1.800 l-2.500 -1.800 z" fill="#096409"/>
<path d="M887.5 442.7 l2.500 1.800 l-2.500 1.800 l-2.500 -1.800 z" fill="#ff0808"/>
<path d="M894.5 448.7 l2.500 1.800 l-2.500 1.800 l-2.500 -1.800 z" fill="#096409"/>
<path d="M894.5 436.8 l2.500 1.800 l-2.500 1.800 l-2.500 -1.800 z" fill="#ff0808"/>
<path d="M900.5 449.7 l2.500 1.800 l-2.500 1.800 l-2.500 -1.800 z" fill="#096409"/>
<path d="M900.5 439.2 l2.500 1.800 l-2.500 1.800 l-2.500 -1.800 z" fill="#ff0808"/>
<path d="M907.5 461.7 l2.500 1.800 l-2.500 1.800 l-2.500 -1.800 z" fill="#096409"/>
<path d="M907.5 450.7 l2.500 1.800 l-2.500 1.800 l-2.500 -1.800 z" fill="#ff0808"/>
<path d="M913.5 487.5 l2.500 1.800 l-2.500 1.800 l-2.500 -1.800 z" fill="#096409"/>
<path d="M913.5 474.6 l2.500 1.800 l-2.500 1.800 l-2.500 -1.800 z" fill="#ff0808"/>
<path d="M920.5 527.6 l2.500 1.800 l-2.500 1.800 l-2.500 -1.800 z" fill="#096409"/>
<path d="M920.5 515.6 l2.500 1.800 l-2.500 1.800 l-2.500 -1.800 z" fill="#ff0808"/>
<path d="M926.5 508.7 l2.500 1.800 l-2.500 1.800 l-2.500 -1.800 z" fill="#096409"/>
<path d="M926.5 493.7 l2.500 1.800 l-2.500 1.800 l-2.500 -1.800 z" fill="#ff0808"/>
<path d="M933.5 508.7 l2.500 1.800 l-2.500 1.800 l-2.500 -1.800 z" fill="#096409"/>
<path d="M933.5 493.7 l2.500 1.800 l-2.500 1.800 l-2.500 -1.800 z" fill="#ff0808"/>
<path d="M939.5 545.5 l2.500 1.800 l-2.500 1.800 l-2.500 -1.800 z" fill="#096409"/>
<path d="M939.5 531.9 l2.500 1.800 l-2.500 1.800 l-2.500 -1.800 z" fill="#ff0808"/>
<path d="M946.5 543.7 l2.500 1.800 l-2.500 1.800 l-2.500 -1.800 z" fill="#096409"/>
<path d="M946.5 527.6 l2.500 1.800 l-2.500 1.800 l-2.500 -1.800 z" fill="#ff0808"/>
<path d="M952.5 565.5 l2.500 1.800 l-2.500 1.800 l-2.500 -1.800 z" fill="#096409"/>
<path d="M952.5 550.8 l2.500 1.800 l-2.500 1.800 l-2.500 -1.800 z" fill="#ff0808"/>
<path d="M959.5 559.5 l2.500 1.800 l-2.500 1.800 l-2.500 -1.800 z" fill="#096409"/>
<path d="M959.5 543.7 l2.500 1.800 l-2.500 1.800 l-2.500 -1.800 z" fill="#ff0808"/>
<path d="M965.5 588.4 l2.500 1.800 l-2.500 1.800 l-2.500 -1.800 z" fill="#096409"/>
<path d="M965.5 569.5 l2.500 1.800 l-2.500 1.800 l-2.500 -1.800 z" fill="#ff0808"/>
<path d="M972.5 585.6 l2.500 1.800 l-2.500 1.800 l-2.500 -1.800 z" fill="#096409"/>
<path d="M972.5 569.5 l2.500 1.800 l-2.500 1.800 l-2.500 -1.800 z" fill="#ff0808"/>
<path d="M978.5 556.6 l2.500 1.800 l-2.500 1.800 l-2.500 -1.800 z" fill="#096409"/>
<path d="M978.5 539.7 l2.500 1.800 l-2.500 1.800 l-2.500 -1.800 z" fill="#ff0808"/>
<path d="M985.5 555.5 l2.500 1.800 l-2.500 1.800 l-2.500 -1.800 z" fill="#096409"/>
<path d="M985.5 537.6 l2.500 1.800 l-2.500 1.800 l-2.500 -1.800 z" fill="#ff0808"/>
<path d="M991.5 526.6 l2.500 1.800 l-2.500 1.800 l-2.500 -1.800 z" fill="#096409"/>
<path d="M991.5 508.7 l2.500 1.800 l-2.500 1.800 l-2.500 -1.800 z" fill="#ff0808"/>
<path d="M998.5 535.7 l2.500 1.800 l-2.500 1.800 l-2.500 -1.800 z" fill="#096409"/>
<path d="M998.5 515.7 l2.500 1.800 l-2.500 1.800 l-2.500 -1.800 z" fill="#ff0808"/>
<path d="M1004.5 540.7 l2.500 1.800 l-2.500 1.800 l-2.500 -1.800 z" fill="#096409"/>
<path d="M1004.5 522.5 l2.500 1.800 l-2.500 1.800 l-2.500 -1.800 z" fill="#ff0808"/>
<path d="M1011.5 547.6 l2.500 1.800 l-2.500 1.800 l-2.500 -1.800 z" fill="#096409"/>
<path d="M1011.5 529.7 l2.500 1.800 l-2.500 1.800 l-2.500 -1.800 z" fill="#ff0808"/>
<path d="M1017.5 544.5 l2.500 1.800 l-2.500 1.800 l-2.500 -1.800 z" fill="#096409"/>
<path d="M1017.5 529.7 l2.500 1.800 l-2.500 1.800 l-2.500 -1.800 z" fill="#ff0808"/>
<path d="M1024.5 531.9 l2.500 1.800 l-2.500 1.800 l-2.500 -1.800 z" fill="#096409"/>
<path d="M1024.5 521.5 l2.500 1.800 l-2.500 1.800 l-2.500 -1.800 z" fill="#ff0808"/>
<path d="M1030.5 536.6 l2.500 1.800 l-2.500 1.800 l-2.500 -1.800 z" fill="#096409"/>
<path d="M1030.5 525.4 l2.500 1.800 l-2.500 1.800 l-2.500 -1.800 z" fill="#ff0808"/>
<path d="M1037.5 532.6 l2.500 1.800 l-2.500 1.800 l-2.500 -1.800 z" fill="#096409"/>
<path d="M1037.5 521.5 l2.500 1.800 l-2.500 1.800 l-2.500 -1.800 z" fill="#ff0808"/>
<path d="M1043.5 524.7 l2.500 1.800 l-2.500 1.800 l-2.500 -1.800 z" fill="#096409"/>
<path d="M1043.5 514.7 l2.500 1.800 l-2.500 1.800 l-2.500 -1.800 z" fill="#ff0808"/>
<path d="M1050.5 497.5 l2.500 1.800 l-2.500 1.800 l-2.500 -1.800 z" fill="#096409"/>
<path d="M1050.5 484.8 l2.500 1.800 l-2.500 1.800 l-2.500 -1.800 z" fill="#ff0808"/>
<path d="M1056.5 482.6 l2.500 1.800 l-2.500 1.800 l-2.500 -1.800 z" fill="#096409"/>
<path d="M1056.5 470.5 l2.500 1.800 l-2.500 1.800 l-2.500 -1.800 z" fill="#ff0808"/>
<path d="M1063.5 486.4 l2.500 1.800 l-2.500 1.800 l-2.500 -1.800 z" fill="#096409"/>
<path d="M1063.5 474.5 l2.500 1.800 l-2.500 1.800 l-2.500 -1.800 z" fill="#ff0808"/>
<path d="M1069.5 471.5 l2.500 1.800 l-2.500 1.800 l-2.500 -1.800 z" fill="#096409"/>
<path d="M1069.5 458.8 l2.500 1.800 l-2.500 1.800 l-2.500 -1.800 z" fill="#ff0808"/>
<path d="M1076.5 479.4 l2.500 1.800 l-2.500 1.800 l-2.500 -1.800 z" fill="#096409"/>
<path d="M1076.5 467.6 l2.500 1.800 l-2.500 1.800 l-2.500 -1.800 z" fill="#ff0808"/>
<path d="M1082.5 506.5 l2.500 1.800 l-2.500 1.800 l-2.500 -1.800 z" fill="#096409"/>
<path d="M1082.5 494.7 l2.500 1.800 l-2.500 1.800 l-2.500 -1.800 z" fill="#ff0808"/>
<path d="M1089.5 502.4 l2.500 1.800 l-2.500 1.800 l-2.500 -1.800 z" fill="#096409"/>
<path d="M1089.5 489.6 l2.500 1.800 l-2.500 1.800 l-2.500 -1.800 z" fill="#ff0808"/>
<path d="M1095.5 486.6 l2.500 1.800 l-2.500 1.800 l-2.500 -1.800 z" fill="#096409"/>
<path d="M1095.5 473.6 l2.500 1.800 l-2.500 1.800 l-2.500 -1.800 z" fill="#ff0808"/>
<path d="M1102.5 491.5 l2.500 1.800 l-2.500 1.800 l-2.500 -1.800 z" fill="#096409"/>
<path d="M1102.5 479.4 l2.500 1.800 l-2.500 1.800 l-2.500 -1.800 z" fill="#ff0808"/>
<path d="M1108.5 493.7 l2.500 1.800 l-2.500 1.800 l-2.500 -1.800 z" fill="#096409"/>
<path d="M1108.5 483.6 l2.500 1.800 l-2.500 1.800 l-2.500 -1.800 z" fill="#ff0808"/>
<path d="M1115.5 480.8 l2.500 1.800 l-2.500 1.800 l-2.500 -1.800 z" fill="#096409"/>
<path d="M1115.5 471.5 l2.500 1.800 l-2.500 1.800 l-2.500 -1.800 z" fill="#ff0808"/>
<path d="M1121.5 478.7 l2.500 1.800 l-2.500 1.800 l-2.500 -1.800 z" fill="#096409"/>
<path d="M1121.5 469.7 l2.500 1.800 l-2.500 1.800 l-2.500 -1.800 z" fill="#ff0808"/>
<path d="M1128.5 483.6 l2.500 1.800 l-2.500 1.800 l-2.500 -1.800 z" fill="#096409"/>
<path d="M1128.5 473.6 l2.500 1.800 l-2.500 1.800 l-2.500 -1.800 z" fill="#ff0808"/>
<path d="M1134.5 473.6 l2.500 1.800 l-2.500 1.800 l-2.500 -1.800 z" fill="#096409"/>
<path d="M1134.5 464.5 l2.500 1.800 l-2.500 1.800 l-2.500 -1.800 z" fill="#ff0808"/>
<path d="M1141.5 455.3 l2.500 1.800 l-2.500 1.800 l-2.500 -1.800 z" fill="#096409"/>
<path d="M1141.5 445.6 l2.500 1.800 l-2.500 1.800 l-2.500 -1.800 z" fill="#ff0808"/>
<path d="M1147.5 451.6 l2.500 1.800 l-2.500 1.800 l-2.500 -1.800 z" fill="#096409"/>
<path d="M1147.5 441.4 l2.500 1.800 l-2.500 1.800 l-2.500 -1.800 z" fill="#ff0808"/>
<path d="M1154.5 464.5 l2.500 1.800 l-2.500 1.800 l-2.500 -1.800 z" fill="#096409"/>
<path d="M1154.5 454.8 l2.500 1.800 l-2.500 1.800 l-2.500 -1.800 z" fill="#ff0808"/>
<path d="M1160.5 478.7 l2.500 1.800 l-2.500 1.800 l-2.500 -1.800 z" fill="#096409"/>
<path d="M1160.5 468.6 l2.500 1.800 l-2.500 1.800 l-2.500 -1.800 z" fill="#ff0808"/>
<path d="M1167.5 475.5 l2.500 1.800 l-2.500 1.800 l-2.500 -1.800 z" fill="#096409"/>
<path d="M1167.5 466.5 l2.500 1.800 l-2.500 1.800 l-2.500 -1.800 z" fill="#ff0808"/>
<path d="M1173.5 479.4 l2.500 1.800 l-2.500 1.800 l-2.500 -1.800 z" fill="#096409"/>
<path d="M1173.5 470.6 l2.500 1.800 l-2.500 1.800 l-2.500 -1.800 z" fill="#ff0808"/>
<path d="M1180.5 469.7 l2.500 1.800 l-2.500 1.800 l-2.500 -1.800 z" fill="#096409"/>
<path d="M1180.5 461.7 l2.500 1.800 l-2.500 1.800 l-2.500 -1.800 z" fill="#ff0808"/>
<path d="M1186.5 472.5 l2.500 1.800 l-2.500 1.800 l-2.500 -1.800 z" fill="#096409"/>
<path d="M1186.5 465.5 l2.500 1.800 l-2.500 1.800 l-2.500 -1.800 z" fill="#ff0808"/>
<path d="M1193.5 476.6 l2.500 1.800 l-2.500 1.800 l-2.500 -1.800 z" fill="#096409"/>
<path d="M1193.5 469.7 l2.500 1.800 l-2.500 1.800 l-2.500 -1.800 z" fill="#ff0808"/>
<path d="M1199.5 492.6 l2.500 1.800 l-2.500 1.800 l-2.500 -1.800 z" fill="#096409"/>
<path d="M1199.5 484.6 l2.500 1.800 l-2.500 1.800 l-2.500 -1.800 z" fill="#ff0808"/>
<path d="M1206.5 524.6 l2.500 1.800 l-2.500 1.800 l-2.500 -1.800 z" fill="#096409"/>
<path d="M1206.5 514.6 l2.500 1.800 l-2.500 1.800 l-2.500 -1.800 z" fill="#ff0808"/>
<path d="M1212.5 523.5 l2.500 1.800 l-2.500 1.800 l-2.500 -1.800 z" fill="#096409"/>
<path d="M1212.5 513.5 l2.500 1.800 l-2.500 1.800 l-2.500 -1.800 z" fill="#ff0808"/>
<path d="M1219.5 517.7 l2.500 1.800 l-2.500 1.800 l-2.500 -1.800 z" fill="#096409"/>
<path d="M1219.5 508.6 l2.500 1.800 l-2.500 1.800 l-2.500 -1.800 z" fill="#ff0808"/>
<path d="M1225.5 494.4 l2.500 1.800 l-2.500 1.800 l-2.500 -1.800 z" fill="#096409"/>
<path d="M1225.5 486.6 l2.500 1.800 l-2.500 1.800 l-2.500 -1.800 z" fill="#ff0808"/>
<path d="M1231.5 481.5 l2.500 1.800 l-2.500 1.800 l-2.500 -1.800 z" fill="#096409"/>
<path d="M1231.5 473.8 l2.500 1.800 l-2.500 1.800 l-2.500 -1.800 z" fill="#ff0808"/>
<path d="M1238.5 489.6 l2.500 1.800 l-2.500 1.800 l-2.500 -1.800 z" fill="#096409"/>
<path d="M1238.5 481.8 l2.500 1.800 l-2.500 1.800 l-2.500 -1.800 z" fill="#ff0808"/>
</svg>
<span class="t" id="t26" style="left:13.70px;top:113.56px;font-size:12.00px;line-height:12.00px;color:#000;width:60px;text-align:right;">0</span>
<span class="t" id="t27" style="left:1299.20px;top:113.56px;font-size:12.00px;line-height:12.00px;color:#fff;width:60px;text-align:right;">0</span>
<span class="t" id="t28" style="left:13.70px;top:171.36px;font-size:12.00px;line-height:12.00px;color:#000;width:60px;text-align:right;">0</span>
<span class="t" id="t29" style="left:1299.20px;top:171.36px;font-size:12.00px;line-height:12.00px;color:#fff;width:60px;text-align:right;">0</span>
<span class="t" id="t30" style="left:13.70px;top:195.56px;font-size:12.00px;line-height:12.00px;color:#000;width:60px;text-align:right;">-500</span>
<span class="t" id="t31" style="left:1299.20px;top:195.56px;font-size:12.00px;line-height:12.00px;color:#fff;width:60px;text-align:right;">-500</span>
<span class="t" id="t32" style="left:13.70px;top:248.86px;font-size:12.00px;line-height:12.00px;color:#000;width:60px;text-align:right;">0</span>
<span class="t" id="t33" style="left:1299.20px;top:248.86px;font-size:12.00px;line-height:12.00px;color:#fff;width:60px;text-align:right;">0</span>
<span class="t" id="t34" style="left:14.10px;top:604.66px;font-size:12.00px;line-height:12.00px;color:#fff;width:60px;text-align:right;">0.45</span>
<span class="t" id="t35" style="left:1299.70px;top:604.66px;font-size:12.00px;line-height:12.00px;color:#fff;width:60px;text-align:right;">0.45</span>
<span class="t" id="t36" style="left:14.10px;top:576.66px;font-size:12.00px;line-height:12.00px;color:#fff;width:60px;text-align:right;">0.50</span>
<span class="t" id="t37" style="left:1299.70px;top:576.66px;font-size:12.00px;line-height:12.00px;color:#fff;width:60px;text-align:right;">0.50</span>
<span class="t" id="t38" style="left:14.10px;top:548.66px;font-size:12.00px;line-height:12.00px;color:#fff;width:60px;text-align:right;">0.55</span>
<span class="t" id="t39" style="left:1299.70px;top:548.66px;font-size:12.00px;line-height:12.00px;color:#fff;width:60px;text-align:right;">0.55</span>
<span class="t" id="t40" style="left:14.10px;top:519.66px;font-size:12.00px;line-height:12.00px;color:#fff;width:60px;text-align:right;">0.60</span>
<span class="t" id="t41" style="left:1299.70px;top:519.66px;font-size:12.00px;line-height:12.00px;color:#fff;width:60px;text-align:right;">0.60</span>
<span class="t" id="t42" style="left:14.10px;top:491.66px;font-size:12.00px;line-height:12.00px;color:#fff;width:60px;text-align:right;">0.65</span>
<span class="t" id="t43" style="left:1299.70px;top:491.66px;font-size:12.00px;line-height:12.00px;color:#fff;width:60px;text-align:right;">0.65</span>
<span class="t" id="t44" style="left:14.10px;top:463.66px;font-size:12.00px;line-height:12.00px;color:#fff;width:60px;text-align:right;">0.70</span>
<span class="t" id="t45" style="left:1299.70px;top:463.66px;font-size:12.00px;line-height:12.00px;color:#fff;width:60px;text-align:right;">0.70</span>
<span class="t" id="t46" style="left:14.10px;top:435.66px;font-size:12.00px;line-height:12.00px;color:#fff;width:60px;text-align:right;">0.75</span>
<span class="t" id="t47" style="left:1299.70px;top:435.66px;font-size:12.00px;line-height:12.00px;color:#fff;width:60px;text-align:right;">0.75</span>
<span class="t" id="t48" style="left:14.10px;top:407.66px;font-size:12.00px;line-height:12.00px;color:#fff;width:60px;text-align:right;">0.80</span>
<span class="t" id="t49" style="left:1299.70px;top:407.66px;font-size:12.00px;line-height:12.00px;color:#fff;width:60px;text-align:right;">0.80</span>
<span class="t" id="t50" style="left:14.10px;top:379.66px;font-size:12.00px;line-height:12.00px;color:#fff;width:60px;text-align:right;">0.85</span>
<span class="t" id="t51" style="left:1299.70px;top:379.66px;font-size:12.00px;line-height:12.00px;color:#fff;width:60px;text-align:right;">0.85</span>
<span class="t" id="t52" style="left:14.10px;top:351.66px;font-size:12.00px;line-height:12.00px;color:#fff;width:60px;text-align:right;">0.90</span>
<span class="t" id="t53" style="left:1299.70px;top:351.66px;font-size:12.00px;line-height:12.00px;color:#fff;width:60px;text-align:right;">0.90</span>
<span class="t" id="t54" style="left:14.10px;top:323.66px;font-size:12.00px;line-height:12.00px;color:#fff;width:60px;text-align:right;">0.95</span>
<span class="t" id="t55" style="left:1299.70px;top:323.66px;font-size:12.00px;line-height:12.00px;color:#fff;width:60px;text-align:right;">0.95</span>
<div class="b" style="left:37px;top:478px;width:43px;height:18px;background:#000;border:1px solid #f4f4f4;"></div>
<span class="t" id="t56" style="left:39.70px;top:481.49px;font-size:11.00px;line-height:11.00px;color:#ff0a0a;transform:scaleX(0.9606);">0.66550</span>
<div class="b" style="left:1317px;top:478px;width:43px;height:18px;background:#000;border:1px solid #f4f4f4;"></div>
<span class="t" id="t57" style="left:1319.70px;top:481.49px;font-size:11.00px;line-height:11.00px;color:#ff0a0a;transform:scaleX(0.9606);">0.66550</span>
<div class="b" style="left:35px;top:617px;width:1329px;height:35.5px;background:#000;"></div>
<div class="b" style="left:1314px;top:620px;width:50px;height:32.5px;background:#e9e9e9;border:1px solid #f8f8f8;border-top-color:#9a9a9a;border-left-color:#9a9a9a;"></div>
<svg class="b" style="left:0px;top:600px" width="1366" height="60" viewBox="0 0 1366 60" shape-rendering="crispEdges">
<path d="M35 19.500 H85" stroke="#8c8c8c" stroke-width="1" fill="none"/>
<path d="M85 19.500 H1314 M85 35.500 H1314" stroke="#f4f4f4" stroke-width="1" fill="none"/><path d="M85 51.500 H1314 M85.500 20 V51.500" stroke="#a8a8a8" stroke-width="1" fill="none"/>
<path d="M95.5 20 v15.500 M128.5 20 v15.500 M160.5 20 v15.500 M193.5 20 v15.500 M225.5 20 v15.500 M258.5 20 v15.500 M290.5 20 v15.500 M323.5 20 v15.500 M349.5 20 v15.500 M355.5 20 v15.500 M388.5 20 v15.500 M420.5 20 v15.500 M452.5 20 v15.500 M485.5 20 v15.500 M517.5 20 v15.500 M550.5 20 v15.500 M582.5 20 v15.500 M602.5 20 v15.500 M615.5 20 v15.500 M628.5 20 v15.500 M660.5 20 v15.500 M693.5 20 v15.500 M725.5 20 v15.500 M758.5 20 v15.500 M790.5 20 v15.500 M822.5 20 v15.500 M855.5 20 v15.500 M887.5 20 v15.500 M920.5 20 v15.500 M952.5 20 v15.500 M985.5 20 v15.500 M1017.5 20 v15.500 M1050.5 20 v15.500 M1076.5 20 v15.500 M1102.5 20 v15.500 M1134.5 20 v15.500 M1160.5 20 v15.500 M1193.5 20 v15.500 M1225.5 20 v15.500 M1257.5 20 v15.500 M1290.5 20 v15.500 M199.5 35.500 v16 M349.5 35.500 v16 M485.5 35.500 v16 M615.5 35.500 v16 M758.5 35.500 v16 M887.5 35.500 v16 M1030.5 35.500 v16 M1160.5 35.500 v16 M1290.5 35.500 v16 " stroke="#f0f0f0" stroke-width="1" fill="none"/>
</svg>
<span class="t" id="t58" style="left:97.60px;top:621.64px;font-size:12.00px;line-height:12.00px;color:#fff;">9</span>
<span class="t" id="t59" style="left:130.60px;top:621.64px;font-size:12.00px;line-height:12.00px;color:#fff;">16</span>
<span class="t" id="t60" style="left:162.60px;top:621.64px;font-size:12.00px;line-height:12.00px;color:#fff;">23</span>
<span class="t" id="t61" style="left:195.60px;top:621.64px;font-size:12.00px;line-height:12.00px;color:#fff;">30</span>
<span class="t" id="t62" style="left:227.60px;top:621.64px;font-size:12.00px;line-height:12.00px;color:#fff;">7</span>
<span class="t" id="t63" style="left:260.60px;top:621.64px;font-size:12.00px;line-height:12.00px;color:#fff;">14</span>
<span class="t" id="t64" style="left:292.60px;top:621.64px;font-size:12.00px;line-height:12.00px;color:#fff;">21</span>
<span class="t" id="t65" style="left:325.60px;top:621.64px;font-size:12.00px;line-height:12.00px;color:#fff;">28</span>
<span class="t" id="t66" style="left:357.60px;top:621.64px;font-size:12.00px;line-height:12.00px;color:#fff;">4</span>
<span class="t" id="t67" style="left:390.60px;top:621.64px;font-size:12.00px;line-height:12.00px;color:#fff;">11</span>
<span class="t" id="t68" style="left:422.60px;top:621.64px;font-size:12.00px;line-height:12.00px;color:#fff;">18</span>
<span class="t" id="t69" style="left:454.60px;top:621.64px;font-size:12.00px;line-height:12.00px;color:#fff;">25</span>
<span class="t" id="t70" style="left:487.60px;top:621.64px;font-size:12.00px;line-height:12.00px;color:#fff;">2</span>
<span class="t" id="t71" style="left:519.60px;top:621.64px;font-size:12.00px;line-height:12.00px;color:#fff;">9</span>
<span class="t" id="t72" style="left:552.60px;top:621.64px;font-size:12.00px;line-height:12.00px;color:#fff;">16</span>
<span class="t" id="t73" style="left:584.60px;top:621.64px;font-size:12.00px;line-height:12.00px;color:#fff;">23</span>
<span class="t" id="t74" style="left:630.60px;top:621.64px;font-size:12.00px;line-height:12.00px;color:#fff;">6</span>
<span class="t" id="t75" style="left:662.60px;top:621.64px;font-size:12.00px;line-height:12.00px;color:#fff;">13</span>
<span class="t" id="t76" style="left:695.60px;top:621.64px;font-size:12.00px;line-height:12.00px;color:#fff;">20</span>
<span class="t" id="t77" style="left:727.60px;top:621.64px;font-size:12.00px;line-height:12.00px;color:#fff;">27</span>
<span class="t" id="t78" style="left:760.60px;top:621.64px;font-size:12.00px;line-height:12.00px;color:#fff;">3</span>
<span class="t" id="t79" style="left:792.60px;top:621.64px;font-size:12.00px;line-height:12.00px;color:#fff;">10</span>
<span class="t" id="t80" style="left:824.60px;top:621.64px;font-size:12.00px;line-height:12.00px;color:#fff;">17</span>
<span class="t" id="t81" style="left:857.60px;top:621.64px;font-size:12.00px;line-height:12.00px;color:#fff;">24</span>
<span class="t" id="t82" style="left:889.60px;top:621.64px;font-size:12.00px;line-height:12.00px;color:#fff;">2</span>
<span class="t" id="t83" style="left:922.60px;top:621.64px;font-size:12.00px;line-height:12.00px;color:#fff;">9</span>
<span class="t" id="t84" style="left:954.60px;top:621.64px;font-size:12.00px;line-height:12.00px;color:#fff;">16</span>
<span class="t" id="t85" style="left:987.60px;top:621.64px;font-size:12.00px;line-height:12.00px;color:#fff;">23</span>
<span class="t" id="t86" style="left:1019.60px;top:621.64px;font-size:12.00px;line-height:12.00px;color:#fff;">30</span>
<span class="t" id="t87" style="left:1052.60px;top:621.64px;font-size:12.00px;line-height:12.00px;color:#fff;">6</span>
<span class="t" id="t88" style="left:1078.60px;top:621.64px;font-size:12.00px;line-height:12.00px;color:#fff;">14</span>
<span class="t" id="t89" style="left:1104.60px;top:621.64px;font-size:12.00px;line-height:12.00px;color:#fff;">20</span>
<span class="t" id="t90" style="left:1136.60px;top:621.64px;font-size:12.00px;line-height:12.00px;color:#fff;">27</span>
<span class="t" id="t91" style="left:1162.60px;top:621.64px;font-size:12.00px;line-height:12.00px;color:#fff;">4</span>
<span class="t" id="t92" style="left:1195.60px;top:621.64px;font-size:12.00px;line-height:12.00px;color:#fff;">11</span>
<span class="t" id="t93" style="left:1227.60px;top:621.64px;font-size:12.00px;line-height:12.00px;color:#fff;">18</span>
<span class="t" id="t94" style="left:1259.60px;top:621.64px;font-size:12.00px;line-height:12.00px;color:#fff;">25</span>
<span class="t" id="t95" style="left:1292.60px;top:621.64px;font-size:12.00px;line-height:12.00px;color:#fff;">1</span>
<span class="t" id="t96" style="left:87.50px;top:637.64px;font-size:12.00px;line-height:12.00px;color:#fff;">tember</span>
<span class="t" id="t97" style="left:201.60px;top:637.64px;font-size:12.00px;line-height:12.00px;color:#fff;">October</span>
<span class="t" id="t98" style="left:351.60px;top:637.64px;font-size:12.00px;line-height:12.00px;color:#fff;">November</span>
<span class="t" id="t99" style="left:487.60px;top:637.64px;font-size:12.00px;line-height:12.00px;color:#fff;">December</span>
<span class="t" id="t100" style="left:617.60px;top:637.64px;font-size:12.00px;line-height:12.00px;color:#fff;">2020</span>
<span class="t" id="t101" style="left:760.60px;top:637.64px;font-size:12.00px;line-height:12.00px;color:#fff;">February</span>
<span class="t" id="t102" style="left:889.60px;top:637.64px;font-size:12.00px;line-height:12.00px;color:#fff;">March</span>
<span class="t" id="t103" style="left:1032.60px;top:637.64px;font-size:12.00px;line-height:12.00px;color:#fff;">April</span>
<span class="t" id="t104" style="left:1162.60px;top:637.64px;font-size:12.00px;line-height:12.00px;color:#fff;">May</span>
<span class="t" id="t105" style="left:1292.60px;top:637.64px;font-size:12.00px;line-height:12.00px;color:#fff;max-width:23px;overflow:hidden;">Jun</span>
<svg class="b" style="left:1314px;top:620px" width="50" height="32" viewBox="0 0 50 32" >
<circle cx="23.500" cy="15" r="8.600" fill="none" stroke="#f6f200" stroke-width="1.100"/><circle cx="20.800" cy="12.400" r="1.300" fill="#f6f200"/><circle cx="26" cy="12.400" r="1.300" fill="#f6f200"/><path d="M18.500 17.500 h9.500" stroke="#f6f200" stroke-width="1.100"/>
</svg>
<svg class="b" style="left:0px;top:0px" width="1366" height="660" viewBox="0 0 1366 660" >
<path d="M93.1 618.800 l2 -2" stroke="#10a010" stroke-width="1"/>
<path d="M101.1 618.800 l2 -2" stroke="#10a010" stroke-width="1"/>
<path d="M109.1 618.800 l2 -2" stroke="#10a010" stroke-width="1"/>
<path d="M117.1 618.800 l2 -2" stroke="#10a010" stroke-width="1"/>
<path d="M125.1 618.800 l2 -2" stroke="#10a010" stroke-width="1"/>
<path d="M133.1 618.800 l2 -2" stroke="#10a010" stroke-width="1"/>
<path d="M145.1 616.800 l2 2" stroke="#f01414" stroke-width="1"/>
<path d="M153.1 616.800 l2 2" stroke="#f01414" stroke-width="1"/>
<path d="M161.1 616.800 l2 2" stroke="#f01414" stroke-width="1"/>
<path d="M169.1 616.800 l2 2" stroke="#f01414" stroke-width="1"/>
<path d="M177.1 616.800 l2 2" stroke="#f01414" stroke-width="1"/>
<path d="M185.1 616.800 l2 2" stroke="#f01414" stroke-width="1"/>
<path d="M193.1 616.800 l2 2" stroke="#f01414" stroke-width="1"/>
<path d="M197.3 618.800 l2 -2" stroke="#10a010" stroke-width="1"/>
<path d="M210.1 616.800 l2 2" stroke="#f01414" stroke-width="1"/>
<path d="M218.1 616.800 l2 2" stroke="#f01414" stroke-width="1"/>
<path d="M226.1 616.800 l2 2" stroke="#f01414" stroke-width="1"/>
<path d="M236.1 618.800 l2 -2" stroke="#10a010" stroke-width="1"/>
<path d="M244.1 618.800 l2 -2" stroke="#10a010" stroke-width="1"/>
<path d="M252.1 618.800 l2 -2" stroke="#10a010" stroke-width="1"/>
<path d="M260.1 618.800 l2 -2" stroke="#10a010" stroke-width="1"/>
<path d="M268.1 618.800 l2 -2" stroke="#10a010" stroke-width="1"/>
<path d="M276.1 618.800 l2 -2" stroke="#10a010" stroke-width="1"/>
<path d="M284.1 618.800 l2 -2" stroke="#10a010" stroke-width="1"/>
<path d="M292.1 618.800 l2 -2" stroke="#10a010" stroke-width="1"/>
<path d="M308.1 618.800 l2 -2" stroke="#10a010" stroke-width="1"/>
<path d="M316.1 618.800 l2 -2" stroke="#10a010" stroke-width="1"/>
<path d="M324.1 618.800 l2 -2" stroke="#10a010" stroke-width="1"/>
<path d="M332.1 618.800 l2 -2" stroke="#10a010" stroke-width="1"/>
<path d="M340.1 618.800 l2 -2" stroke="#10a010" stroke-width="1"/>
<path d="M348.1 618.800 l2 -2" stroke="#10a010" stroke-width="1"/>
<path d="M356.1 618.800 l2 -2" stroke="#10a010" stroke-width="1"/>
<path d="M364.1 618.800 l2 -2" stroke="#10a010" stroke-width="1"/>
<path d="M372.1 618.800 l2 -2" stroke="#10a010" stroke-width="1"/>
<path d="M380.1 618.800 l2 -2" stroke="#10a010" stroke-width="1"/>
<path d="M388.1 618.800 l2 -2" stroke="#10a010" stroke-width="1"/>
<path d="M396.1 618.800 l2 -2" stroke="#10a010" stroke-width="1"/>
<path d="M567.1 616.800 l2 2" stroke="#f01414" stroke-width="1"/>
<path d="M575.1 616.800 l2 2" stroke="#f01414" stroke-width="1"/>
<path d="M583.1 616.800 l2 2" stroke="#f01414" stroke-width="1"/>
<path d="M591.1 616.800 l2 2" stroke="#f01414" stroke-width="1"/>
<path d="M599.1 616.800 l2 2" stroke="#f01414" stroke-width="1"/>
<path d="M607.1 616.800 l2 2" stroke="#f01414" stroke-width="1"/>
<path d="M615.1 616.800 l2 2" stroke="#f01414" stroke-width="1"/>
<path d="M623.1 616.800 l2 2" stroke="#f01414" stroke-width="1"/>
<path d="M631.1 616.800 l2 2" stroke="#f01414" stroke-width="1"/>
<path d="M639.1 616.800 l2 2" stroke="#f01414" stroke-width="1"/>
<path d="M647.1 616.800 l2 2" stroke="#f01414" stroke-width="1"/>
<path d="M655.1 616.800 l2 2" stroke="#f01414" stroke-width="1"/>
<path d="M663.1 616.800 l2 2" stroke="#f01414" stroke-width="1"/>
<path d="M671.1 616.800 l2 2" stroke="#f01414" stroke-width="1"/>
<path d="M710.1 616.800 l2 2" stroke="#f01414" stroke-width="1"/>
<path d="M718.1 616.800 l2 2" stroke="#f01414" stroke-width="1"/>
<path d="M726.1 616.800 l2 2" stroke="#f01414" stroke-width="1"/>
<path d="M734.1 616.800 l2 2" stroke="#f01414" stroke-width="1"/>
<path d="M742.1 616.800 l2 2" stroke="#f01414" stroke-width="1"/>
<path d="M750.1 616.800 l2 2" stroke="#f01414" stroke-width="1"/>
<path d="M758.1 616.800 l2 2" stroke="#f01414" stroke-width="1"/>
<path d="M766.1 616.800 l2 2" stroke="#f01414" stroke-width="1"/>
<path d="M774.1 616.800 l2 2" stroke="#f01414" stroke-width="1"/>
<path d="M782.1 616.800 l2 2" stroke="#f01414" stroke-width="1"/>
<path d="M790.1 616.800 l2 2" stroke="#f01414" stroke-width="1"/>
<path d="M840.1 616.800 l2 2" stroke="#f01414" stroke-width="1"/>
<path d="M848.1 616.800 l2 2" stroke="#f01414" stroke-width="1"/>
<path d="M856.1 616.800 l2 2" stroke="#f01414" stroke-width="1"/>
<path d="M864.1 616.800 l2 2" stroke="#f01414" stroke-width="1"/>
<path d="M872.1 616.800 l2 2" stroke="#f01414" stroke-width="1"/>
<path d="M880.1 616.800 l2 2" stroke="#f01414" stroke-width="1"/>
<path d="M888.1 616.800 l2 2" stroke="#f01414" stroke-width="1"/>
<path d="M896.1 616.800 l2 2" stroke="#f01414" stroke-width="1"/>
<path d="M912.1 616.800 l2 2" stroke="#f01414" stroke-width="1"/>
<path d="M920.1 616.800 l2 2" stroke="#f01414" stroke-width="1"/>
<path d="M928.1 616.800 l2 2" stroke="#f01414" stroke-width="1"/>
<path d="M936.1 616.800 l2 2" stroke="#f01414" stroke-width="1"/>
<path d="M944.1 616.800 l2 2" stroke="#f01414" stroke-width="1"/>
<path d="M952.1 616.800 l2 2" stroke="#f01414" stroke-width="1"/>
<path d="M960.1 616.800 l2 2" stroke="#f01414" stroke-width="1"/>
<path d="M968.1 616.800 l2 2" stroke="#f01414" stroke-width="1"/>
<path d="M976.1 616.800 l2 2" stroke="#f01414" stroke-width="1"/>
<path d="M984.1 616.800 l2 2" stroke="#f01414" stroke-width="1"/>
<path d="M1074.1 618.800 l2 -2" stroke="#10a010" stroke-width="1"/>
<path d="M1087.1 616.800 l2 2" stroke="#f01414" stroke-width="1"/>
<path d="M1095.1 616.800 l2 2" stroke="#f01414" stroke-width="1"/>
<path d="M1103.1 616.800 l2 2" stroke="#f01414" stroke-width="1"/>
<path d="M1132.1 618.800 l2 -2" stroke="#10a010" stroke-width="1"/>
<path d="M1140.1 618.800 l2 -2" stroke="#10a010" stroke-width="1"/>
<path d="M1148.1 618.800 l2 -2" stroke="#10a010" stroke-width="1"/>
<path d="M1156.1 618.800 l2 -2" stroke="#10a010" stroke-width="1"/>
<path d="M1164.1 618.800 l2 -2" stroke="#10a010" stroke-width="1"/>
<path d="M1171.3 616.800 l2 2" stroke="#f01414" stroke-width="1"/>
<path d="M1191.1 616.800 l2 2" stroke="#f01414" stroke-width="1"/>
<path d="M1199.1 616.800 l2 2" stroke="#f01414" stroke-width="1"/>
<path d="M1207.1 616.800 l2 2" stroke="#f01414" stroke-width="1"/>
<path d="M1215.1 616.800 l2 2" stroke="#f01414" stroke-width="1"/>
<path d="M1223.1 616.800 l2 2" stroke="#f01414" stroke-width="1"/>
<path d="M1231.1 616.800 l2 2" stroke="#f01414" stroke-width="1"/>
</svg>
<div class="b" style="left:35px;top:652.5px;width:1114px;height:20px;background:#f4f4f4;border-bottom:1px solid #d8d8d8;"></div>
<div class="b" style="left:35px;top:652.5px;width:16.5px;height:20px;background:#ececec;border:1px solid #fdfdfd;border-right-color:#8c8c8c;border-bottom-color:#8c8c8c;"></div>
<div class="b" style="left:1132.5px;top:652.5px;width:16.5px;height:20px;background:#ececec;border:1px solid #fdfdfd;border-right-color:#8c8c8c;border-bottom-color:#8c8c8c;"></div>
<div class="b" style="left:979.5px;top:652.5px;width:153px;height:20px;background:#ebebeb;border:1px solid #fdfdfd;border-right-color:#8c8c8c;border-bottom-color:#8c8c8c;border-left-color:#b8b8b8;"></div>
<div class="b" style="left:1149px;top:652.5px;width:217px;height:20px;background:#ebebeb;"></div>
<svg class="b" style="left:0px;top:652px" width="1366" height="21" viewBox="0 0 1366 21" >
<path d="M45.500 6 v9 l-5 -4.500 z M1138.500 6 v9 l5 -4.500 z" fill="#8a8a8a"/>
<path d="M1153.5 2 v17" stroke="#a8a8a8"/><path d="M1154.5 2 v17" stroke="#fbfbfb"/>
<path d="M1200.5 2 v17" stroke="#a8a8a8"/><path d="M1201.5 2 v17" stroke="#fbfbfb"/>
<path d="M1290.5 2 v17" stroke="#a8a8a8"/><path d="M1291.5 2 v17" stroke="#fbfbfb"/>
<path d="M1359.5 2 v17" stroke="#a8a8a8"/><path d="M1360.5 2 v17" stroke="#fbfbfb"/>
<g fill="none" stroke="#404040" stroke-width="2.600"><path d="M1161.500 10.800 a5 5 0 0 1 8.500 -3.200"/><path d="M1171.500 12.300 a5 5 0 0 1 -8.500 3.200"/></g><path d="M1172.800 4 v5.500 h-5.500 z M1160.200 19 v-5.500 h5.500 z" fill="#404040"/>
<path d="M1213.500 7.500 v8" stroke="#3a3a3a" stroke-width="1.800"/><path d="M1213.500 5.500 l3.200 3.800 h-6.400 z M1213.500 17.200 l3.200 -3.800 h-6.400 z" fill="#3a3a3a"/>
<path d="M1234.500 6 v11 M1229 11.500 h11" stroke="#3a3a3a" stroke-width="1.800"/><path d="M1234.500 3.800 l3 3.400 h-6 z M1234.500 19.200 l3 -3.400 h-6 z M1226.800 11.500 l3.400 -3 v6 z M1242.200 11.500 l-3.400 -3 v6 z" fill="#3a3a3a"/>
<circle cx="1256" cy="11.200" r="5.500" fill="#f4f4f4" stroke="#4a4a4a" stroke-width="1.200"/><path d="M1253 11.200 h6" stroke="#3a3a3a" stroke-width="1.800"/>
<circle cx="1277" cy="11.200" r="5.500" fill="#f4f4f4" stroke="#4a4a4a" stroke-width="1.200"/><path d="M1274 11.200 h6 M1277 8.200 v6" stroke="#3a3a3a" stroke-width="1.800"/>
<path d="M1306 6.700 v9 l-5.500 -4.500 z M1322 6.700 v9 l5.500 -4.500 z" fill="#b4b4b4"/>
<rect x="1339.500" y="5.500" width="11.500" height="11.500" fill="#fafafa" stroke="#444" stroke-width="1.200"/><path d="M1339.500 7 h11.500" stroke="#444" stroke-width="2.200"/><path d="M1341.500 10.500 h7.500 M1341.500 12.500 h7.500 M1341.500 14.500 h7.500" stroke="#555" stroke-width=".9"/>
</svg>
<span class="t" id="t106" style="left:1183.70px;top:657.52px;font-size:12.50px;line-height:12.50px;color:#4a4a4a;font-weight:bold;transform:scaleX(0.9522);">D</span>
<div class="b" style="left:0px;top:672.5px;width:1366px;height:36px;background:#ebebeb;border-bottom:1px solid #8c8c8c;"></div>
<div class="b" style="left:0px;top:676px;width:1366px;height:1px;background:#fafafa;"></div>
<div class="b" style="left:5px;top:678px;width:6px;height:29px;background:linear-gradient(90deg,#dcdcdc,#c4c4c4 60%,#a4a4a4);border-right:1px solid #8c8c8c;"></div>
<div class="b" style="left:6.5px;top:691px;width:2.5px;height:3px;background:#555;"></div>
<div class="b" style="left:262px;top:678px;width:6px;height:29px;background:linear-gradient(90deg,#dcdcdc,#c4c4c4 60%,#a4a4a4);border-right:1px solid #8c8c8c;"></div>
<div class="b" style="left:263.5px;top:691px;width:2.5px;height:3px;background:#555;"></div>
<div class="b" style="left:390.5px;top:678px;width:6px;height:29px;background:linear-gradient(90deg,#dcdcdc,#c4c4c4 60%,#a4a4a4);border-right:1px solid #8c8c8c;"></div>
<div class="b" style="left:392px;top:691px;width:2.5px;height:3px;background:#555;"></div>
<div class="b" style="left:144.5px;top:678px;width:1px;height:29px;background:#a8a8a8;"></div>
<div class="b" style="left:145.5px;top:678px;width:1px;height:29px;background:#fbfbfb;"></div>
<div class="b" style="left:255px;top:678px;width:1px;height:29px;background:#a8a8a8;"></div>
<div class="b" style="left:256px;top:678px;width:1px;height:29px;background:#fbfbfb;"></div>
<div class="b" style="left:384.5px;top:678px;width:1px;height:29px;background:#a8a8a8;"></div>
<div class="b" style="left:385.5px;top:678px;width:1px;height:29px;background:#fbfbfb;"></div>
<div class="b" style="left:567px;top:678px;width:1px;height:29px;background:#a8a8a8;"></div>
<div class="b" style="left:568px;top:678px;width:1px;height:29px;background:#fbfbfb;"></div>
<div class="b" style="left:13.5px;top:683px;width:127.5px;height:19px;background:#fff;border:2px solid #868686;border-right-color:#d0d0d0;border-bottom-color:#d0d0d0;"></div>
<div class="b" style="left:122.5px;top:685px;width:16.5px;height:15px;background:#ececec;border:1px solid #fdfdfd;border-right:2px solid #8c8c8c;border-bottom:2px solid #8c8c8c;"></div>
<div class="b" style="left:149.5px;top:683px;width:97.5px;height:19px;background:#fff;border:2px solid #868686;border-right-color:#d0d0d0;border-bottom-color:#d0d0d0;"></div>
<div class="b" style="left:228.5px;top:685px;width:16.5px;height:15px;background:#ececec;border:1px solid #fdfdfd;border-right:2px solid #8c8c8c;border-bottom:2px solid #8c8c8c;"></div>
<svg class="b" style="left:0px;top:676px" width="600" height="32" viewBox="0 0 600 32" >
<path d="M29 16.500 h81 M161 16.500 h59" stroke="#000" stroke-width="1.200"/>
<path d="M127.500 14.500 h8 l-4 4.500 z M233.500 14.500 h8 l-4 4.500 z M367 15 h7 l-3.500 4 z" fill="#111"/>
<rect x="272.3" y="6.500" width="10" height="10" fill="#00ff00" stroke="#9c9c9c" stroke-width=".8"/>
<rect x="284.2" y="6.500" width="10" height="10" fill="#f0b848" stroke="#9c9c9c" stroke-width=".8"/>
<rect x="296.2" y="6.500" width="10" height="10" fill="#ff0000" stroke="#9c9c9c" stroke-width=".8"/>
<rect x="308.1" y="6.500" width="10" height="10" fill="#d452d4" stroke="#9c9c9c" stroke-width=".8"/>
<rect x="320.1" y="6.500" width="10" height="10" fill="#ffb4c8" stroke="#9c9c9c" stroke-width=".8"/>
<rect x="332.1" y="6.500" width="10" height="10" fill="#ffffff" stroke="#9c9c9c" stroke-width=".8"/>
<rect x="344.0" y="6.500" width="10" height="10" fill="#0a8a0a" stroke="#9c9c9c" stroke-width=".8"/>
<rect x="355.9" y="6.500" width="10" height="10" fill="#005a00" stroke="#9c9c9c" stroke-width=".8"/>
<rect x="272.3" y="18.700" width="10" height="10" fill="#000000" stroke="#9c9c9c" stroke-width=".8"/>
<rect x="284.2" y="18.700" width="10" height="10" fill="#ff8000" stroke="#9c9c9c" stroke-width=".8"/>
<rect x="296.2" y="18.700" width="10" height="10" fill="#e06000" stroke="#9c9c9c" stroke-width=".8"/>
<rect x="308.1" y="18.700" width="10" height="10" fill="#7878c8" stroke="#9c9c9c" stroke-width=".8"/>
<rect x="320.1" y="18.700" width="10" height="10" fill="#ffe0e0" stroke="#9c9c9c" stroke-width=".8"/>
<rect x="332.1" y="18.700" width="10" height="10" fill="#000080" stroke="#9c9c9c" stroke-width=".8"/>
<rect x="344.0" y="18.700" width="10" height="10" fill="#0000a0" stroke="#9c9c9c" stroke-width=".8"/>
<rect x="355.9" y="18.700" width="10" height="10" fill="#ffd800" stroke="#9c9c9c" stroke-width=".8"/>
<rect x="295.200" y="5.500" width="12" height="12" fill="none" stroke="#333" stroke-width="1" stroke-dasharray="1 1"/>
<rect x="404.5" y="12.500" width="15" height="12" rx="1" fill="#fdfdfd" stroke="#5a7a9a"/>
<path d="M405.5 13.800 h7" stroke="#8aa4c4" stroke-width="1.200"/>
<path d="M406.0 22 l3 -3 l2 1.200" stroke="#d01010" stroke-width="1.100" fill="none"/>
<rect x="431.4" y="12.500" width="15" height="12" rx="1" fill="#fdfdfd" stroke="#5a7a9a"/>
<path d="M432.4 13.800 h7" stroke="#8aa4c4" stroke-width="1.200"/>
<path d="M432.9 22 l3 -3 l2 1.200" stroke="#d01010" stroke-width="1.100" fill="none"/>
<rect x="458.3" y="12.500" width="15" height="12" rx="1" fill="#fdfdfd" stroke="#5a7a9a"/>
<path d="M459.3 13.800 h7" stroke="#8aa4c4" stroke-width="1.200"/>
<path d="M459.8 22 l3 -3 l2 1.200" stroke="#d01010" stroke-width="1.100" fill="none"/>
<rect x="485.2" y="12.500" width="15" height="12" rx="1" fill="#fdfdfd" stroke="#5a7a9a"/>
<path d="M486.2 13.800 h7" stroke="#8aa4c4" stroke-width="1.200"/>
<path d="M486.7 22 l3 -3 l2 1.200" stroke="#d01010" stroke-width="1.100" fill="none"/>
<rect x="512.1" y="12.500" width="15" height="12" rx="1" fill="#fdfdfd" stroke="#5a7a9a"/>
<path d="M513.1 13.800 h7" stroke="#8aa4c4" stroke-width="1.200"/>
<path d="M513.6 22 l3 -3 l2 1.200" stroke="#d01010" stroke-width="1.100" fill="none"/>
<rect x="539.0" y="12.500" width="15" height="12" rx="1" fill="#fdfdfd" stroke="#5a7a9a"/>
<path d="M540.0 13.800 h7" stroke="#8aa4c4" stroke-width="1.200"/>
<path d="M540.5 22 l3 -3 l2 1.200" stroke="#d01010" stroke-width="1.100" fill="none"/>
</svg>
<span class="t" id="t107" style="left:411.80px;top:689.44px;font-size:12.00px;line-height:12.00px;color:#111;">1</span>
<span class="t" id="t108" style="left:438.70px;top:689.44px;font-size:12.00px;line-height:12.00px;color:#111;">2</span>
<span class="t" id="t109" style="left:465.60px;top:689.44px;font-size:12.00px;line-height:12.00px;color:#111;">3</span>
<span class="t" id="t110" style="left:492.50px;top:689.44px;font-size:12.00px;line-height:12.00px;color:#111;">4</span>
<span class="t" id="t111" style="left:519.40px;top:689.44px;font-size:12.00px;line-height:12.00px;color:#111;">5</span>
<span class="t" id="t112" style="left:546.30px;top:689.44px;font-size:12.00px;line-height:12.00px;color:#111;">6</span>
<div class="b" style="left:0px;top:709px;width:1366px;height:20px;background:#444444;"></div>
<span class="t" id="t113" style="left:10.00px;top:713.00px;font-size:13.00px;line-height:13.00px;color:#fff;transform:scaleX(0.9382);">For Help, press F1</span>
<span class="t" id="t114" style="left:1095.50px;top:713.00px;font-size:13.00px;line-height:13.00px;color:#fff;transform:scaleX(0.9373);">03/02/2020</span>
<span class="t" id="t115" style="left:1252.50px;top:713.00px;font-size:13.00px;line-height:13.00px;color:#fff;transform:scaleX(0.9362);">0.45378</span>
<div class="b" style="left:1345px;top:712.5px;width:19.5px;height:14px;background:#fafafa;"></div>
<span class="t" id="t116" style="left:1350.50px;top:712.87px;font-size:13.50px;line-height:13.50px;color:#0a8a0a;font-weight:bold;transform:scaleX(1.1310);">$</span>
<div class="b" style="left:0px;top:728.5px;width:1366px;height:39.5px;background:linear-gradient(90deg,#bf8932 0px,#bc832c 420px,#b97c27 666px,#b58b3c 672px,#b9954e 752px,#c3a469 760px,#c9ae7a 1150px,#c9ae7a 1366px);"></div>
<div class="b" style="left:1165px;top:728.5px;width:201px;height:39.5px;background:linear-gradient(38deg,rgba(214,166,58,0) 25%,rgba(216,168,58,1) 33%,rgba(211,165,66,1) 100%);"></div>
<div class="b" style="left:176px;top:729.5px;width:58.5px;height:38.5px;background:linear-gradient(180deg,rgba(255,244,214,.55),rgba(255,240,200,.42));border:1px solid rgba(255,250,230,.8);border-bottom:none;"></div>
<div class="b" style="left:238px;top:729.5px;width:58.5px;height:38.5px;background:rgba(255,240,205,.16);border:1px solid rgba(255,245,215,.42);border-bottom:none;"></div>
<div class="b" style="left:300px;top:729.5px;width:58.5px;height:38.5px;background:rgba(255,240,205,.16);border:1px solid rgba(255,245,215,.42);border-bottom:none;"></div>
<div class="b" style="left:424px;top:729.5px;width:58.5px;height:38.5px;background:rgba(255,240,205,.16);border:1px solid rgba(255,245,215,.42);border-bottom:none;"></div>
<div class="b" style="left:486px;top:729.5px;width:58.5px;height:38.5px;background:rgba(255,240,205,.16);border:1px solid rgba(255,245,215,.42);border-bottom:none;"></div>
<div class="b" style="left:858px;top:729.5px;width:58.5px;height:38.5px;background:rgba(255,240,205,.16);border:1px solid rgba(255,245,215,.42);border-bottom:none;"></div>
<svg class="b" style="left:0px;top:726px" width="1366" height="42" viewBox="0 0 1366 42" >
<path d="M12 14 l11 -1.600 v9.300 h-11 z M24.200 12.200 l14 -2.100 v11.600 h-14 z M12 22.900 h11 v9.300 l-11 -1.600 z M24.200 22.900 h14 v11.600 l-14 -2.100 z" fill="#fff"/>
<path d="M66 13 h10 l2.500 -2.500 h17 v7 h-29.500 z" fill="#e8c860" stroke="#c9a640" stroke-width=".7"/><rect x="66" y="15.500" width="30" height="17" rx="1" fill="#faeaa8" stroke="#dcbc58" stroke-width=".8"/><path d="M70.500 36.500 v-10.500 h21.500 v10.500 h-4.500 v-6 h-12.500 v6 z" fill="#4fb0ee" stroke="#2d86c6" stroke-width=".8"/><path d="M72 27.500 h18.500" stroke="#a8e4ff" stroke-width="1.500"/><rect x="69" y="9.500" width="3.500" height="2.500" fill="#2ea043"/><rect x="80" y="12" width="3.500" height="2.500" fill="#d33"/><rect x="88" y="12" width="3.500" height="2.500" fill="#36c"/>
<rect x="140" y="15" width="18" height="19" fill="#f4f4f4" stroke="#d24726" stroke-width="1"/><path d="M147 19 h9 M147 23 h9 M147 27 h9" stroke="#d24726" stroke-width="1.500"/><circle cx="152" cy="21" r="3.500" fill="none" stroke="#d24726" stroke-width="1.500"/><path d="M128 13 l18 -3.500 v30 l-18 -3.500 z" fill="#d24726"/>
<rect x="190" y="6.500" width="31" height="31" rx="3.500" fill="#111"/><path d="M198 33.500 v-9.500 h2.800 v9.500 z M203.500 33.500 l1.800 -17 h2.800 l-1.800 17 z M209.500 33.500 l2.600 -25 h3 l-2.600 25 z" fill="#f08a24"/>
<circle cx="267" cy="22" r="15" fill="#db4437"/><path d="M267 22 L254.200 14.200 A15 15 0 0 0 260 35.300 z" fill="#0f9d58"/><path d="M267 22 L260 35.300 A15 15 0 0 0 281.800 19.500 L267 19.500 z" fill="#ffcd40"/><path d="M254.200 14.200 A15 15 0 0 1 281.800 19.500 L267 19.500 z" fill="#db4437"/><circle cx="267" cy="22" r="6.800" fill="#f4f4f4"/><circle cx="267" cy="22" r="5.400" fill="#4285f4"/>
<rect x="326" y="11" width="19" height="23" fill="#fff" stroke="#2b579a" stroke-width="1"/><path d="M333 16 h9 M333 19.500 h9 M333 23 h9 M333 26.500 h9 M333 30 h9" stroke="#2b579a" stroke-width="1.400"/><path d="M314 9.500 l18 -3 v32 l-18 -3 z" fill="#2b579a"/>
<rect x="376" y="7" width="30" height="30" rx="4" fill="#1769e0"/><path d="M382.500 29 v-12.500 h17.500 v12.500 h-4.200 v-8.300 h-2.500 v8.300 h-4.200 v-8.300 h-2.400 v8.300 z" fill="#fff"/>
<rect x="441.500" y="8" width="22.500" height="29" rx="2" fill="#e4ecf4" stroke="#8aa0b8" stroke-width="1"/><rect x="444" y="11" width="17.500" height="7" fill="#cfe2f4" stroke="#7a98b8" stroke-width=".7"/>
<rect x="444.3" y="20.5" width="3.200" height="2.800" fill="#8fb0d8"/>
<rect x="448.9" y="20.5" width="3.200" height="2.800" fill="#8fb0d8"/>
<rect x="453.5" y="20.5" width="3.200" height="2.800" fill="#8fb0d8"/>
<rect x="458.1" y="20.5" width="3.200" height="2.800" fill="#8fb0d8"/>
<rect x="444.3" y="24.5" width="3.200" height="2.800" fill="#8fb0d8"/>
<rect x="448.9" y="24.5" width="3.200" height="2.800" fill="#8fb0d8"/>
<rect x="453.5" y="24.5" width="3.200" height="2.800" fill="#8fb0d8"/>
<rect x="458.1" y="24.5" width="3.200" height="2.800" fill="#8fb0d8"/>
<rect x="444.3" y="28.5" width="3.200" height="2.800" fill="#8fb0d8"/>
<rect x="448.9" y="28.5" width="3.200" height="2.800" fill="#8fb0d8"/>
<rect x="453.5" y="28.5" width="3.200" height="2.800" fill="#8fb0d8"/>
<rect x="458.1" y="28.5" width="3.200" height="2.800" fill="#f0a030"/>
<rect x="444.3" y="32.5" width="3.200" height="2.800" fill="#8fb0d8"/>
<rect x="448.9" y="32.5" width="3.200" height="2.800" fill="#8fb0d8"/>
<rect x="453.5" y="32.5" width="3.200" height="2.800" fill="#8fb0d8"/>
<rect x="458.1" y="32.5" width="3.200" height="2.800" fill="#f0a030"/>
<rect x="512" y="11" width="19" height="23" fill="#fff" stroke="#217346" stroke-width="1"/><path d="M518 15 h11 M518 19 h11 M518 23 h11 M518 27 h11 M518 31 h11 M522 12 v21 M526.500 12 v21" stroke="#217346" stroke-width="1.300"/><path d="M500 9.500 l18 -3 v32 l-18 -3 z" fill="#217346"/>
<defs><linearGradient id="gie" x1="0" y1="0" x2="0" y2="1"><stop offset="0" stop-color="#5cc0f4"/><stop offset="1" stop-color="#1c86d8"/></linearGradient><radialGradient id="gff" cx=".7" cy=".75" r=".9"><stop offset="0" stop-color="#ffd83a"/><stop offset=".45" stop-color="#f48a1c"/><stop offset="1" stop-color="#d8401c"/></radialGradient></defs>
<path d="M563.500 33 C 560 27, 566 17, 578 12 C 586 8.500, 592 10, 590.500 15" fill="none" stroke="#f0c030" stroke-width="2.400" stroke-linecap="round"/>
<path d="M588 23.500 A 10 10 0 1 0 585.300 30.500" fill="none" stroke="url(#gie)" stroke-width="5.600"/><path d="M569 23.500 h19" stroke="#2e9ae4" stroke-width="4.200"/>
<path d="M563.800 33.500 C 566 37, 575 36, 583 31" fill="none" stroke="#f0c030" stroke-width="2.200" stroke-linecap="round"/>
<circle cx="639" cy="24" r="14.500" fill="url(#gff)"/><circle cx="638" cy="21" r="9.500" fill="#3560c4"/><path d="M628 17 c3 -1 6 0 7 3 c2 -1 5 0 6 2 c-3 0 -4 2 -3 4 c1 3 5 3 7 1 c-1 5 -7 7 -12 5 c-5 -2 -8 -9 -5 -15 z" fill="#f07a1c"/><path d="M644 12.500 c4 1.500 7 5 7.500 9.500 c-1.500 -2.500 -3.500 -3.500 -5.500 -3.500 c.5 -2 -.5 -4.500 -2 -6 z" fill="#4a78d8"/>
<rect x="686" y="9" width="30" height="30" fill="#d9472b"/><circle cx="701" cy="24" r="10.500" fill="none" stroke="#fff" stroke-width="2.300"/>
<rect x="762" y="14" width="17" height="14" fill="#fff" stroke="#0072c6" stroke-width="1.200"/><path d="M762 14 l8.500 8 l8.500 -8" fill="none" stroke="#0072c6" stroke-width="1.400"/><path d="M748 10 l18 -3 v32 l-18 -3 z" fill="#0072c6"/>
<path d="M812 14 c0 -3 1 -4 4 -4.500 l16 -2 l1.500 5 l5 .5 l.500 23 l-24 2.500 l-3.500 -3.500 z" fill="#dfe8d8" stroke="#9aa894" stroke-width="1"/><path d="M832 7.500 l1.500 5 l5 .5" fill="#f4f8f0" stroke="#9aa894" stroke-width=".8"/><path d="M817 17.500 l16 -1.500 l.3 3.500 l-5 .5 l-3 3.500 l-1 -3 l-7 .7 z M822 26.500 l16 -1.500 l.3 3.500 l-5 .5 l-3 3.500 l-1 -3 l-7 .7 z" fill="#2c5428"/>
<rect x="871" y="7" width="32" height="32" rx="6" fill="#e0c494" stroke="#b8323c" stroke-width="1.300"/>
<path d="M1078.500 25.500 l4.200 -4.300 l4.200 4.300 z" fill="#fff"/>
<rect x="1100" y="14" width="7" height="12" rx="1" fill="#777" stroke="#444" stroke-width=".7"/><rect x="1101.500" y="11" width="4" height="4" fill="#999"/><circle cx="1110.500" cy="26" r="4.200" fill="#2eab3c" stroke="#fff" stroke-width=".8"/>
<circle cx="1130" cy="22" r="8" fill="#3a7fc8" stroke="#e8e8e8" stroke-width="1.200"/><path d="M1124 19 c4 -4 9 -2 10 2 c-3 -1 -5 1 -4 5 c-3 0 -7 -3 -6 -7 z" fill="#f4f4f4"/>
<path d="M1148 19 h3 l4.500 -4 v14 l-4.500 -4 h-3 z" fill="#fff"/><path d="M1158 17.500 a6 6 0 0 1 0 9 M1160.500 15 a9 9 0 0 1 0 14" fill="none" stroke="#fff" stroke-width="1.200"/>
<path d="M1172.500 14 v17" stroke="#fff" stroke-width="1.600"/><path d="M1174 15 c4 -2 6 2 11.500 0 v8 c-5 2 -8 -2 -11.500 0 z" fill="#fff"/>
<path d="M1195 29 v-3 h2 v3 z M1198.500 29 v-5.500 h2 v5.500 z M1202 29 v-8 h2 v8 z M1205.500 29 v-11 h2 v11 z M1209 29 v-14 h2 v14 z" fill="#fff"/>
<path d="M1216 6 v32 M1238.500 6 v32" stroke="rgba(255,250,230,.38)"/>
<rect x="1227" y="16" width="7.500" height="14" fill="none" stroke="#fff" stroke-width="1.400"/><rect x="1229" y="13.500" width="3.500" height="2.500" fill="#fff"/><path d="M1221 14 v4 M1224 14 v4 M1220 18 h5 v4 h-5 z M1222.500 22 v7" stroke="#fff" stroke-width="1.300" fill="#fff"/>
</svg>
<span class="t" id="t117" style="left:134.00px;top:743.11px;font-size:17.00px;line-height:17.00px;color:#fff;font-weight:bold;transform:scaleX(0.8815);">P</span>
<span class="t" id="t118" style="left:317.50px;top:743.61px;font-size:17.00px;line-height:17.00px;color:#fff;font-weight:bold;transform:scaleX(0.7790);">W</span>
<span class="t" id="t119" style="left:505.00px;top:743.61px;font-size:17.00px;line-height:17.00px;color:#fff;font-weight:bold;transform:scaleX(0.8375);">X</span>
<span class="t" id="t120" style="left:753.00px;top:742.46px;font-size:16.00px;line-height:16.00px;color:#fff;font-weight:bold;transform:scaleX(0.8030);">O</span>
<span class="t" id="t121" style="left:696.50px;top:741.61px;font-size:17.00px;line-height:17.00px;color:#fff;font-weight:bold;transform:scaleX(0.8662);">?</span>
<span class="t" id="t122" style="left:876.00px;top:747.30px;font-size:15.00px;line-height:15.00px;color:#b8323c;transform:scaleX(0.9853);">Pro</span>
<span class="t" id="t123" style="left:877.00px;top:741.19px;font-size:4.50px;line-height:4.50px;color:#222;font-weight:bold;">deBolsing</span>
<span class="t" id="t124" style="left:1251.60px;top:743.09px;font-size:11.00px;line-height:11.00px;color:#fff;transform:scaleX(0.8085);">ESP</span>
<span class="t" id="t125" style="left:1306.20px;top:735.18px;font-size:11.60px;line-height:11.60px;color:#fff;transform:scaleX(0.8961);">18:46</span>
<span class="t" id="t126" style="left:1289.30px;top:751.78px;font-size:11.60px;line-height:11.60px;color:#fff;transform:scaleX(1.0012);">20/05/2020</span>
</body></html>
